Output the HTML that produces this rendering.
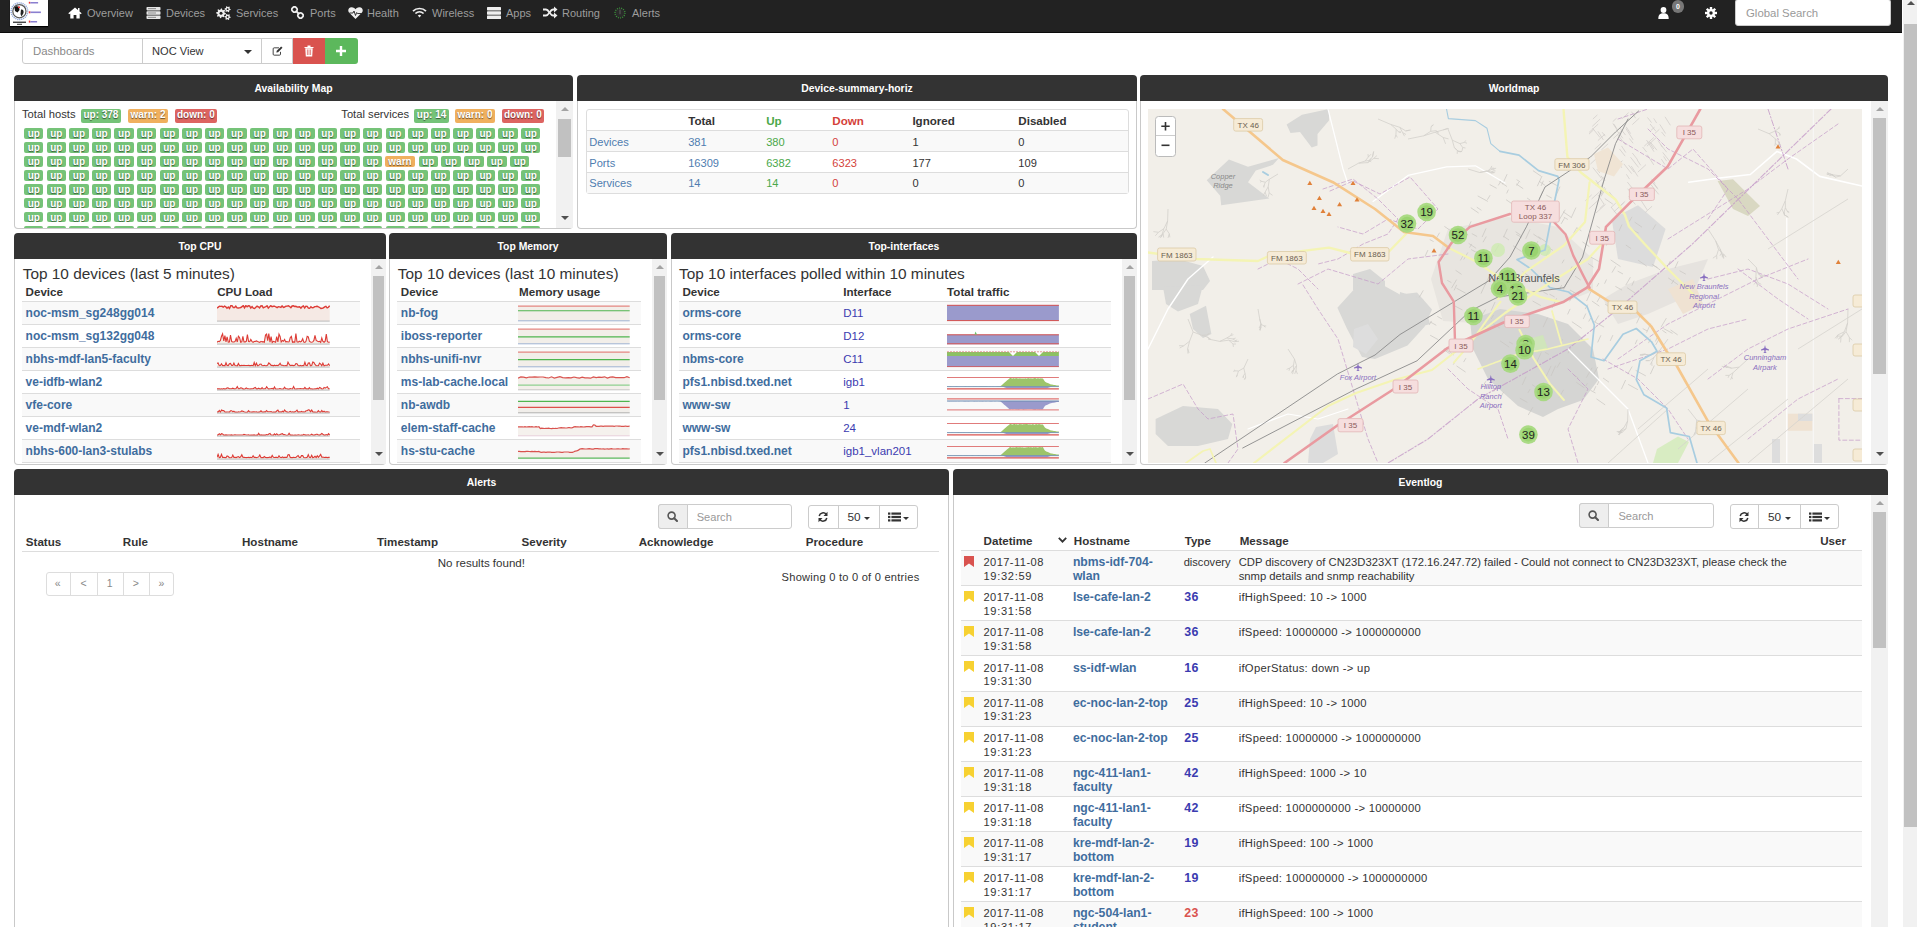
<!DOCTYPE html>
<html><head><meta charset="utf-8"><title>LibreNMS</title><style>

*{box-sizing:border-box}
html,body{margin:0;padding:0}
body{width:1928px;height:940px;overflow:hidden;background:#fff;font-family:"Liberation Sans",sans-serif;font-size:11.1px;color:#333;position:relative}
.abs,.r,.t{position:absolute}
.t{white-space:nowrap}
#nav{left:0;top:0;width:1902px;height:33px;background:#222;border-bottom:1px solid #0a0a0a}
.ni{position:absolute;top:0;height:31px;line-height:26px;color:#9d9d9d;font-size:11px;white-space:nowrap}
.wh{background:#333;color:#fff;font-weight:bold;font-size:10.4px;text-align:center;line-height:27px;border-radius:4px 4px 0 0;white-space:nowrap}
.wb{border:1px solid #c9c9c9;border-top:none;border-radius:0 0 4px 4px;background:#fff}
.lb{position:absolute;border-radius:2px;color:#fff;font-weight:bold;font-size:10px;text-align:center;line-height:12px;text-shadow:0 1px 1px rgba(0,0,0,.55);white-space:nowrap;overflow:hidden}

</style></head><body>
<div id="nav" class="abs">
 <div class="abs" style="left:10px;top:0;width:38px;height:26px;background:#fff;box-shadow:0 1px 1px #000">
  <svg width="38" height="26" viewBox="0 0 38 26"><circle cx="9.4" cy="11.2" r="8.3" fill="none" stroke="#8fa6d8" stroke-width="1.4" stroke-dasharray="1.2 0.8"/><circle cx="9.4" cy="11.2" r="6.6" fill="#fff" stroke="#555" stroke-width="1.2"/><path d="M4.5 7.5 C6 5.5 8 6 9 7 L9.5 10 L7.5 12.5 L5 11 Z" fill="#111"/><path d="M11 9.5 C13 9 14 11 13.5 13 L11.5 16.5 L10.5 14 Z" fill="#222"/><rect x="8" y="6.5" width="2" height="1.6" fill="#e33"/><rect x="3" y="21.6" width="13" height="1.3" fill="#333"/><rect x="7" y="23.8" width="5" height="1" fill="#333"/><rect x="18.8" y="1.8" width="1.5" height="1.8" fill="#e33"/><rect x="20.3" y="2" width="7.8" height="1.5" fill="#8a7fd0"/><rect x="18.8" y="11.3" width="1.6" height="2" fill="#e33"/><rect x="20.4" y="11.5" width="10.5" height="1.6" fill="#8a7fd0"/><rect x="18.8" y="20.6" width="1.5" height="2" fill="#e33"/><rect x="20.3" y="21" width="6.8" height="1.5" fill="#8a7fd0"/></svg>
 </div>
 <svg class="abs" style="left:68px;top:7px" width="14" height="12" viewBox="0 0 14 12"><path d="M7 0.5 L0.3 6.3 L1.3 7.3 L2.3 6.5 V11.5 H5.6 V8 H8.4 V11.5 H11.7 V6.5 L12.7 7.3 L13.7 6.3 L11.5 4.4 V1 H10 V3.1 Z" fill="#fff"/></svg>
 <div class="ni" style="left:87px">Overview</div>
 <svg class="abs" style="left:146px;top:7px" width="15" height="12" viewBox="0 0 15 12"><rect x="0.5" y="0" width="14" height="3.4" rx="0.8" fill="#e6e6e6"/><rect x="0.5" y="4.3" width="14" height="3.4" rx="0.8" fill="#e6e6e6"/><rect x="0.5" y="8.6" width="14" height="3.4" rx="0.8" fill="#e6e6e6"/><rect x="2" y="1.3" width="8" height="0.8" fill="#777"/><rect x="2" y="5.6" width="8" height="0.8" fill="#777"/><rect x="2" y="9.9" width="8" height="0.8" fill="#777"/></svg>
 <div class="ni" style="left:166px">Devices</div>
 <svg class="abs" style="left:216px;top:6px" width="15" height="14" viewBox="0 0 15 14"><path d="M9.90 7.30 L9.81 8.26 L8.33 8.68 L7.99 9.30 L8.46 10.76 L7.72 11.37 L6.38 10.63 L5.70 10.83 L5.00 12.20 L4.04 12.11 L3.62 10.63 L3.00 10.29 L1.54 10.76 L0.93 10.02 L1.67 8.68 L1.47 8.00 L0.10 7.30 L0.19 6.34 L1.67 5.92 L2.01 5.30 L1.54 3.84 L2.28 3.23 L3.62 3.97 L4.30 3.77 L5.00 2.40 L5.96 2.49 L6.38 3.97 L7.00 4.31 L8.46 3.84 L9.07 4.58 L8.33 5.92 L8.53 6.60 Z" fill="#eee"/><circle cx="5" cy="7.3" r="1.5" fill="#222"/><path d="M14.70 3.20 L14.59 4.00 L13.51 4.30 L13.16 4.76 L13.15 5.88 L12.40 6.19 L11.60 5.40 L11.03 5.33 L10.05 5.88 L9.41 5.39 L9.69 4.30 L9.47 3.77 L8.50 3.20 L8.61 2.40 L9.69 2.10 L10.04 1.64 L10.05 0.52 L10.80 0.21 L11.60 1.00 L12.17 1.07 L13.15 0.52 L13.79 1.01 L13.51 2.10 L13.73 2.63 Z" fill="#eee"/><circle cx="11.6" cy="3.2" r="0.9" fill="#222"/><path d="M14.70 11.00 L14.59 11.80 L13.51 12.10 L13.16 12.56 L13.15 13.68 L12.40 13.99 L11.60 13.20 L11.03 13.13 L10.05 13.68 L9.41 13.19 L9.69 12.10 L9.47 11.57 L8.50 11.00 L8.61 10.20 L9.69 9.90 L10.04 9.44 L10.05 8.32 L10.80 8.01 L11.60 8.80 L12.17 8.87 L13.15 8.32 L13.79 8.81 L13.51 9.90 L13.73 10.43 Z" fill="#eee"/><circle cx="11.6" cy="11" r="0.9" fill="#222"/></svg>
 <div class="ni" style="left:236px">Services</div>
 <svg class="abs" style="left:291px;top:6px" width="13" height="13" viewBox="0 0 13 13"><g fill="none" stroke="#eee" stroke-width="1.8"><rect x="1" y="1" width="5" height="5" rx="2" transform="rotate(45 3.5 3.5)"/><rect x="7" y="7" width="5" height="5" rx="2" transform="rotate(45 9.5 9.5)"/></g><path d="M5 5 L8 8" stroke="#eee" stroke-width="1.8"/></svg>
 <div class="ni" style="left:310px">Ports</div>
 <svg class="abs" style="left:348px;top:7px" width="15" height="12" viewBox="0 0 15 12"><path d="M7.5 12 L1 5.5 C-0.5 3.8 0.3 0.5 3.5 0.3 C5.5 0.2 6.8 1.5 7.5 2.3 C8.2 1.5 9.5 0.2 11.5 0.3 C14.7 0.5 15.5 3.8 14 5.5 Z" fill="#eee"/><path d="M1.5 6 H5 L6 4 L7.5 8.5 L8.7 5.5 L9.5 6.5 H13.5" fill="none" stroke="#222" stroke-width="0.9"/></svg>
 <div class="ni" style="left:367px">Health</div>
 <svg class="abs" style="left:412px;top:7px" width="15" height="11" viewBox="0 0 15 11"><g fill="none" stroke="#eee" stroke-width="1.7"><path d="M1 4.2 C4.5 0.6 10.5 0.6 14 4.2"/><path d="M3.4 6.5 C5.8 4.2 9.2 4.2 11.6 6.5"/></g><path d="M5.8 8.6 C6.8 7.6 8.2 7.6 9.2 8.6 L7.5 10.5 Z" fill="#eee"/></svg>
 <div class="ni" style="left:432px">Wireless</div>
 <svg class="abs" style="left:487px;top:7px" width="14" height="12" viewBox="0 0 14 12"><rect x="0" y="0" width="14" height="3.4" rx="0.6" fill="#eee"/><rect x="0" y="4.3" width="14" height="3.4" rx="0.6" fill="#eee"/><rect x="0" y="8.6" width="14" height="3.4" rx="0.6" fill="#eee"/></svg>
 <div class="ni" style="left:506px">Apps</div>
 <svg class="abs" style="left:543px;top:6px" width="15" height="13" viewBox="0 0 15 13"><g fill="none" stroke="#eee" stroke-width="1.8"><path d="M0 3.5 H3 C6 3.5 7 9.5 10 9.5 H12"/><path d="M0 9.5 H3 C6 9.5 7 3.5 10 3.5 H12"/></g><path d="M11 0.5 L14.5 3.5 L11 6.5 Z M11 6.5 L14.5 9.5 L11 12.5 Z" fill="#eee"/></svg>
 <div class="ni" style="left:562px">Routing</div>
 <svg class="abs" style="left:614px;top:7px" width="12" height="12" viewBox="0 0 12 12"><circle cx="6" cy="6" r="5" fill="#2a2a2a" stroke="#3c9a3c" stroke-width="1.2" stroke-dasharray="1 1.2"/><rect x="5.4" y="2.6" width="1.2" height="4.6" fill="#555"/></svg>
 <div class="ni" style="left:632px">Alerts</div>
 <svg class="abs" style="left:1658px;top:7px" width="12" height="12" viewBox="0 0 12 12"><circle cx="5.5" cy="3" r="2.9" fill="#fff"/><path d="M0.3 12 C0.3 7.6 2 6.2 5.5 6.2 C9 6.2 10.7 7.6 10.7 12 Z" fill="#fff"/></svg>
 <div class="abs" style="left:1672px;top:0;width:12px;height:13px;border-radius:6px;background:#777;color:#fff;font-size:7px;line-height:13px;text-align:center;font-weight:bold">0</div>
 <svg class="abs" style="left:1705px;top:7px" width="12" height="12" viewBox="0 0 12 12"><g fill="#fff"><circle cx="6" cy="6" r="4"/><g id="tt"><rect x="4.8" y="0" width="2.4" height="12"/><rect x="0" y="4.8" width="12" height="2.4"/></g><rect x="4.8" y="0" width="2.4" height="12" transform="rotate(45 6 6)"/><rect x="4.8" y="0" width="2.4" height="12" transform="rotate(-45 6 6)"/></g><circle cx="6" cy="6" r="1.7" fill="#222"/></svg>
 <div class="abs" style="left:1735px;top:-1px;width:156px;height:27px;background:#fff;border:1px solid #ccc;border-radius:3px;color:#999;font-size:11.4px;line-height:26px;padding-left:10px">Global Search</div>
</div>

<!-- toolbar -->
<div class="abs" style="left:22px;top:38px;width:121px;height:26px;border:1px solid #ccc;border-radius:3px 0 0 3px;color:#888;font-size:11.4px;line-height:24px;padding-left:10px;background:#fff">Dashboards</div>
<div class="abs" style="left:142px;top:38px;width:120px;height:26px;border:1px solid #ccc;color:#333;font-size:11.1px;line-height:24px;padding-left:9px;background:#fff">NOC View<div class="abs" style="left:101px;top:11px;width:0;height:0;border-left:4px solid transparent;border-right:4px solid transparent;border-top:4px solid #333"></div></div>
<div class="abs" style="left:262px;top:38px;width:31px;height:26px;border:1px solid #ccc;border-left:none;background:#fff">
 <svg class="abs" style="left:9.5px;top:7px" width="11.5" height="10" viewBox="0 0 13 12"><path d="M8 2.2 H2.2 Q1 2.2 1 3.4 V9.8 Q1 11 2.2 11 H8.6 Q9.8 11 9.8 9.8 V7" fill="none" stroke="#333" stroke-width="1.1"/><path d="M4.8 7.8 L5.3 5.8 L10.6 0.6 L12.2 2.2 L6.9 7.4 Z" fill="#333"/></svg>
</div>
<div class="abs" style="left:293px;top:38px;width:32px;height:26px;background:#d9534f">
 <svg class="abs" style="left:11px;top:7px" width="10" height="12" viewBox="0 0 10 12"><path d="M0.5 2 H9.5 V3 H0.5 Z M3.5 0.5 H6.5 V2 H3.5 Z M1.3 3.3 H8.7 L8.2 11.5 H1.8 Z" fill="#fff"/><path d="M3.4 4.5 V10 M5 4.5 V10 M6.6 4.5 V10" stroke="#d9534f" stroke-width="0.7"/></svg>
</div>
<div class="abs" style="left:325px;top:38px;width:33px;height:26px;background:#5cb85c;border-radius:0 3px 3px 0">
 <svg class="abs" style="left:11px;top:8px" width="10" height="10" viewBox="0 0 10 10"><path d="M3.8 0 H6.2 V3.8 H10 V6.2 H6.2 V10 H3.8 V6.2 H0 V3.8 H3.8 Z" fill="#fff"/></svg>
</div>

<div class="r wh" style="left:14px;top:75px;width:559px;height:26px">Availability Map</div><div class="r wb" style="left:14px;top:101px;width:559px;height:128px"></div>
<div class="r wh" style="left:577px;top:75px;width:560px;height:26px">Device-summary-horiz</div><div class="r wb" style="left:577px;top:101px;width:560px;height:128px"></div>
<div class="r wh" style="left:1140px;top:75px;width:748px;height:26px">Worldmap</div><div class="r wb" style="left:1140px;top:101px;width:748px;height:364px"></div>
<div class="r wh" style="left:14px;top:233px;width:372px;height:26px">Top CPU</div><div class="r wb" style="left:14px;top:259px;width:372px;height:206px"></div>
<div class="r wh" style="left:389px;top:233px;width:278px;height:26px">Top Memory</div><div class="r wb" style="left:389px;top:259px;width:278px;height:206px"></div>
<div class="r wh" style="left:671px;top:233px;width:466px;height:26px">Top-interfaces</div><div class="r wb" style="left:671px;top:259px;width:466px;height:206px"></div>
<div class="r wh" style="left:14px;top:469px;width:935px;height:26px">Alerts</div><div class="r wb" style="left:14px;top:495px;width:935px;height:465px"></div>
<div class="r wh" style="left:953px;top:469px;width:935px;height:26px">Eventlog</div><div class="r wb" style="left:953px;top:495px;width:935px;height:465px"></div>
<div class="r" style="left:15px;top:101px;width:541px;height:127px;overflow:hidden;"><div class="t" style="left:7px;top:6.3px;line-height:14px;font-size:11.2px;font-weight:normal;color:#333;">Total hosts</div><div class="lb" style="left:66.1px;top:8px;width:39.7px;height:13.8px;background:#75c378">up: 378</div><div class="lb" style="left:113.2px;top:8px;width:39.7px;height:13.8px;background:#f0b05e">warn: 2</div><div class="lb" style="left:160.1px;top:8px;width:41.5px;height:13.8px;background:#dd6461">down: 0</div><div class="t" style="left:326.3px;top:6.3px;line-height:14px;font-size:11.2px;font-weight:normal;color:#333;">Total services</div><div class="lb" style="left:399.3px;top:8px;width:34.6px;height:13.8px;background:#75c378">up: 14</div><div class="lb" style="left:440.2px;top:8px;width:39.7px;height:13.8px;background:#f0b05e">warn: 0</div><div class="lb" style="left:486.8px;top:8px;width:42.1px;height:13.8px;background:#dd6461">down: 0</div><div class="lb" style="left:9.1px;top:27.2px;width:19.4px;height:10.8px;background:#75c378">up</div><div class="lb" style="left:31.69px;top:27.2px;width:19.4px;height:10.8px;background:#75c378">up</div><div class="lb" style="left:54.28px;top:27.2px;width:19.4px;height:10.8px;background:#75c378">up</div><div class="lb" style="left:76.87px;top:27.2px;width:19.4px;height:10.8px;background:#75c378">up</div><div class="lb" style="left:99.46px;top:27.2px;width:19.4px;height:10.8px;background:#75c378">up</div><div class="lb" style="left:122.05px;top:27.2px;width:19.4px;height:10.8px;background:#75c378">up</div><div class="lb" style="left:144.64px;top:27.2px;width:19.4px;height:10.8px;background:#75c378">up</div><div class="lb" style="left:167.23px;top:27.2px;width:19.4px;height:10.8px;background:#75c378">up</div><div class="lb" style="left:189.82px;top:27.2px;width:19.4px;height:10.8px;background:#75c378">up</div><div class="lb" style="left:212.41px;top:27.2px;width:19.4px;height:10.8px;background:#75c378">up</div><div class="lb" style="left:235px;top:27.2px;width:19.4px;height:10.8px;background:#75c378">up</div><div class="lb" style="left:257.59px;top:27.2px;width:19.4px;height:10.8px;background:#75c378">up</div><div class="lb" style="left:280.18px;top:27.2px;width:19.4px;height:10.8px;background:#75c378">up</div><div class="lb" style="left:302.77px;top:27.2px;width:19.4px;height:10.8px;background:#75c378">up</div><div class="lb" style="left:325.36px;top:27.2px;width:19.4px;height:10.8px;background:#75c378">up</div><div class="lb" style="left:347.95px;top:27.2px;width:19.4px;height:10.8px;background:#75c378">up</div><div class="lb" style="left:370.54px;top:27.2px;width:19.4px;height:10.8px;background:#75c378">up</div><div class="lb" style="left:393.13px;top:27.2px;width:19.4px;height:10.8px;background:#75c378">up</div><div class="lb" style="left:415.72px;top:27.2px;width:19.4px;height:10.8px;background:#75c378">up</div><div class="lb" style="left:438.31px;top:27.2px;width:19.4px;height:10.8px;background:#75c378">up</div><div class="lb" style="left:460.9px;top:27.2px;width:19.4px;height:10.8px;background:#75c378">up</div><div class="lb" style="left:483.49px;top:27.2px;width:19.4px;height:10.8px;background:#75c378">up</div><div class="lb" style="left:506.08px;top:27.2px;width:19.4px;height:10.8px;background:#75c378">up</div><div class="lb" style="left:9.1px;top:41.1px;width:19.4px;height:10.8px;background:#75c378">up</div><div class="lb" style="left:31.69px;top:41.1px;width:19.4px;height:10.8px;background:#75c378">up</div><div class="lb" style="left:54.28px;top:41.1px;width:19.4px;height:10.8px;background:#75c378">up</div><div class="lb" style="left:76.87px;top:41.1px;width:19.4px;height:10.8px;background:#75c378">up</div><div class="lb" style="left:99.46px;top:41.1px;width:19.4px;height:10.8px;background:#75c378">up</div><div class="lb" style="left:122.05px;top:41.1px;width:19.4px;height:10.8px;background:#75c378">up</div><div class="lb" style="left:144.64px;top:41.1px;width:19.4px;height:10.8px;background:#75c378">up</div><div class="lb" style="left:167.23px;top:41.1px;width:19.4px;height:10.8px;background:#75c378">up</div><div class="lb" style="left:189.82px;top:41.1px;width:19.4px;height:10.8px;background:#75c378">up</div><div class="lb" style="left:212.41px;top:41.1px;width:19.4px;height:10.8px;background:#75c378">up</div><div class="lb" style="left:235px;top:41.1px;width:19.4px;height:10.8px;background:#75c378">up</div><div class="lb" style="left:257.59px;top:41.1px;width:19.4px;height:10.8px;background:#75c378">up</div><div class="lb" style="left:280.18px;top:41.1px;width:19.4px;height:10.8px;background:#75c378">up</div><div class="lb" style="left:302.77px;top:41.1px;width:19.4px;height:10.8px;background:#75c378">up</div><div class="lb" style="left:325.36px;top:41.1px;width:19.4px;height:10.8px;background:#75c378">up</div><div class="lb" style="left:347.95px;top:41.1px;width:19.4px;height:10.8px;background:#75c378">up</div><div class="lb" style="left:370.54px;top:41.1px;width:19.4px;height:10.8px;background:#75c378">up</div><div class="lb" style="left:393.13px;top:41.1px;width:19.4px;height:10.8px;background:#75c378">up</div><div class="lb" style="left:415.72px;top:41.1px;width:19.4px;height:10.8px;background:#75c378">up</div><div class="lb" style="left:438.31px;top:41.1px;width:19.4px;height:10.8px;background:#75c378">up</div><div class="lb" style="left:460.9px;top:41.1px;width:19.4px;height:10.8px;background:#75c378">up</div><div class="lb" style="left:483.49px;top:41.1px;width:19.4px;height:10.8px;background:#75c378">up</div><div class="lb" style="left:506.08px;top:41.1px;width:19.4px;height:10.8px;background:#75c378">up</div><div class="lb" style="left:9.1px;top:55px;width:19.4px;height:10.8px;background:#75c378">up</div><div class="lb" style="left:31.69px;top:55px;width:19.4px;height:10.8px;background:#75c378">up</div><div class="lb" style="left:54.28px;top:55px;width:19.4px;height:10.8px;background:#75c378">up</div><div class="lb" style="left:76.87px;top:55px;width:19.4px;height:10.8px;background:#75c378">up</div><div class="lb" style="left:99.46px;top:55px;width:19.4px;height:10.8px;background:#75c378">up</div><div class="lb" style="left:122.05px;top:55px;width:19.4px;height:10.8px;background:#75c378">up</div><div class="lb" style="left:144.64px;top:55px;width:19.4px;height:10.8px;background:#75c378">up</div><div class="lb" style="left:167.23px;top:55px;width:19.4px;height:10.8px;background:#75c378">up</div><div class="lb" style="left:189.82px;top:55px;width:19.4px;height:10.8px;background:#75c378">up</div><div class="lb" style="left:212.41px;top:55px;width:19.4px;height:10.8px;background:#75c378">up</div><div class="lb" style="left:235px;top:55px;width:19.4px;height:10.8px;background:#75c378">up</div><div class="lb" style="left:257.59px;top:55px;width:19.4px;height:10.8px;background:#75c378">up</div><div class="lb" style="left:280.18px;top:55px;width:19.4px;height:10.8px;background:#75c378">up</div><div class="lb" style="left:302.77px;top:55px;width:19.4px;height:10.8px;background:#75c378">up</div><div class="lb" style="left:325.36px;top:55px;width:19.4px;height:10.8px;background:#75c378">up</div><div class="lb" style="left:347.95px;top:55px;width:19.4px;height:10.8px;background:#75c378">up</div><div class="lb" style="left:370.3px;top:55px;width:29.4px;height:10.8px;background:#f0b05e">warn</div><div class="lb" style="left:403.5px;top:55px;width:19.4px;height:10.8px;background:#75c378">up</div><div class="lb" style="left:426.4px;top:55px;width:19.4px;height:10.8px;background:#75c378">up</div><div class="lb" style="left:449.3px;top:55px;width:19.4px;height:10.8px;background:#75c378">up</div><div class="lb" style="left:472.2px;top:55px;width:19.4px;height:10.8px;background:#75c378">up</div><div class="lb" style="left:495.1px;top:55px;width:19.4px;height:10.8px;background:#75c378">up</div><div class="lb" style="left:9.1px;top:68.9px;width:19.4px;height:10.8px;background:#75c378">up</div><div class="lb" style="left:31.69px;top:68.9px;width:19.4px;height:10.8px;background:#75c378">up</div><div class="lb" style="left:54.28px;top:68.9px;width:19.4px;height:10.8px;background:#75c378">up</div><div class="lb" style="left:76.87px;top:68.9px;width:19.4px;height:10.8px;background:#75c378">up</div><div class="lb" style="left:99.46px;top:68.9px;width:19.4px;height:10.8px;background:#75c378">up</div><div class="lb" style="left:122.05px;top:68.9px;width:19.4px;height:10.8px;background:#75c378">up</div><div class="lb" style="left:144.64px;top:68.9px;width:19.4px;height:10.8px;background:#75c378">up</div><div class="lb" style="left:167.23px;top:68.9px;width:19.4px;height:10.8px;background:#75c378">up</div><div class="lb" style="left:189.82px;top:68.9px;width:19.4px;height:10.8px;background:#75c378">up</div><div class="lb" style="left:212.41px;top:68.9px;width:19.4px;height:10.8px;background:#75c378">up</div><div class="lb" style="left:235px;top:68.9px;width:19.4px;height:10.8px;background:#75c378">up</div><div class="lb" style="left:257.59px;top:68.9px;width:19.4px;height:10.8px;background:#75c378">up</div><div class="lb" style="left:280.18px;top:68.9px;width:19.4px;height:10.8px;background:#75c378">up</div><div class="lb" style="left:302.77px;top:68.9px;width:19.4px;height:10.8px;background:#75c378">up</div><div class="lb" style="left:325.36px;top:68.9px;width:19.4px;height:10.8px;background:#75c378">up</div><div class="lb" style="left:347.95px;top:68.9px;width:19.4px;height:10.8px;background:#75c378">up</div><div class="lb" style="left:370.54px;top:68.9px;width:19.4px;height:10.8px;background:#75c378">up</div><div class="lb" style="left:393.13px;top:68.9px;width:19.4px;height:10.8px;background:#75c378">up</div><div class="lb" style="left:415.72px;top:68.9px;width:19.4px;height:10.8px;background:#75c378">up</div><div class="lb" style="left:438.31px;top:68.9px;width:19.4px;height:10.8px;background:#75c378">up</div><div class="lb" style="left:460.9px;top:68.9px;width:19.4px;height:10.8px;background:#75c378">up</div><div class="lb" style="left:483.49px;top:68.9px;width:19.4px;height:10.8px;background:#75c378">up</div><div class="lb" style="left:506.08px;top:68.9px;width:19.4px;height:10.8px;background:#75c378">up</div><div class="lb" style="left:9.1px;top:82.8px;width:19.4px;height:10.8px;background:#75c378">up</div><div class="lb" style="left:31.69px;top:82.8px;width:19.4px;height:10.8px;background:#75c378">up</div><div class="lb" style="left:54.28px;top:82.8px;width:19.4px;height:10.8px;background:#75c378">up</div><div class="lb" style="left:76.87px;top:82.8px;width:19.4px;height:10.8px;background:#75c378">up</div><div class="lb" style="left:99.46px;top:82.8px;width:19.4px;height:10.8px;background:#75c378">up</div><div class="lb" style="left:122.05px;top:82.8px;width:19.4px;height:10.8px;background:#75c378">up</div><div class="lb" style="left:144.64px;top:82.8px;width:19.4px;height:10.8px;background:#75c378">up</div><div class="lb" style="left:167.23px;top:82.8px;width:19.4px;height:10.8px;background:#75c378">up</div><div class="lb" style="left:189.82px;top:82.8px;width:19.4px;height:10.8px;background:#75c378">up</div><div class="lb" style="left:212.41px;top:82.8px;width:19.4px;height:10.8px;background:#75c378">up</div><div class="lb" style="left:235px;top:82.8px;width:19.4px;height:10.8px;background:#75c378">up</div><div class="lb" style="left:257.59px;top:82.8px;width:19.4px;height:10.8px;background:#75c378">up</div><div class="lb" style="left:280.18px;top:82.8px;width:19.4px;height:10.8px;background:#75c378">up</div><div class="lb" style="left:302.77px;top:82.8px;width:19.4px;height:10.8px;background:#75c378">up</div><div class="lb" style="left:325.36px;top:82.8px;width:19.4px;height:10.8px;background:#75c378">up</div><div class="lb" style="left:347.95px;top:82.8px;width:19.4px;height:10.8px;background:#75c378">up</div><div class="lb" style="left:370.54px;top:82.8px;width:19.4px;height:10.8px;background:#75c378">up</div><div class="lb" style="left:393.13px;top:82.8px;width:19.4px;height:10.8px;background:#75c378">up</div><div class="lb" style="left:415.72px;top:82.8px;width:19.4px;height:10.8px;background:#75c378">up</div><div class="lb" style="left:438.31px;top:82.8px;width:19.4px;height:10.8px;background:#75c378">up</div><div class="lb" style="left:460.9px;top:82.8px;width:19.4px;height:10.8px;background:#75c378">up</div><div class="lb" style="left:483.49px;top:82.8px;width:19.4px;height:10.8px;background:#75c378">up</div><div class="lb" style="left:506.08px;top:82.8px;width:19.4px;height:10.8px;background:#75c378">up</div><div class="lb" style="left:9.1px;top:96.7px;width:19.4px;height:10.8px;background:#75c378">up</div><div class="lb" style="left:31.69px;top:96.7px;width:19.4px;height:10.8px;background:#75c378">up</div><div class="lb" style="left:54.28px;top:96.7px;width:19.4px;height:10.8px;background:#75c378">up</div><div class="lb" style="left:76.87px;top:96.7px;width:19.4px;height:10.8px;background:#75c378">up</div><div class="lb" style="left:99.46px;top:96.7px;width:19.4px;height:10.8px;background:#75c378">up</div><div class="lb" style="left:122.05px;top:96.7px;width:19.4px;height:10.8px;background:#75c378">up</div><div class="lb" style="left:144.64px;top:96.7px;width:19.4px;height:10.8px;background:#75c378">up</div><div class="lb" style="left:167.23px;top:96.7px;width:19.4px;height:10.8px;background:#75c378">up</div><div class="lb" style="left:189.82px;top:96.7px;width:19.4px;height:10.8px;background:#75c378">up</div><div class="lb" style="left:212.41px;top:96.7px;width:19.4px;height:10.8px;background:#75c378">up</div><div class="lb" style="left:235px;top:96.7px;width:19.4px;height:10.8px;background:#75c378">up</div><div class="lb" style="left:257.59px;top:96.7px;width:19.4px;height:10.8px;background:#75c378">up</div><div class="lb" style="left:280.18px;top:96.7px;width:19.4px;height:10.8px;background:#75c378">up</div><div class="lb" style="left:302.77px;top:96.7px;width:19.4px;height:10.8px;background:#75c378">up</div><div class="lb" style="left:325.36px;top:96.7px;width:19.4px;height:10.8px;background:#75c378">up</div><div class="lb" style="left:347.95px;top:96.7px;width:19.4px;height:10.8px;background:#75c378">up</div><div class="lb" style="left:370.54px;top:96.7px;width:19.4px;height:10.8px;background:#75c378">up</div><div class="lb" style="left:393.13px;top:96.7px;width:19.4px;height:10.8px;background:#75c378">up</div><div class="lb" style="left:415.72px;top:96.7px;width:19.4px;height:10.8px;background:#75c378">up</div><div class="lb" style="left:438.31px;top:96.7px;width:19.4px;height:10.8px;background:#75c378">up</div><div class="lb" style="left:460.9px;top:96.7px;width:19.4px;height:10.8px;background:#75c378">up</div><div class="lb" style="left:483.49px;top:96.7px;width:19.4px;height:10.8px;background:#75c378">up</div><div class="lb" style="left:506.08px;top:96.7px;width:19.4px;height:10.8px;background:#75c378">up</div><div class="lb" style="left:9.1px;top:110.6px;width:19.4px;height:10.8px;background:#75c378">up</div><div class="lb" style="left:31.69px;top:110.6px;width:19.4px;height:10.8px;background:#75c378">up</div><div class="lb" style="left:54.28px;top:110.6px;width:19.4px;height:10.8px;background:#75c378">up</div><div class="lb" style="left:76.87px;top:110.6px;width:19.4px;height:10.8px;background:#75c378">up</div><div class="lb" style="left:99.46px;top:110.6px;width:19.4px;height:10.8px;background:#75c378">up</div><div class="lb" style="left:122.05px;top:110.6px;width:19.4px;height:10.8px;background:#75c378">up</div><div class="lb" style="left:144.64px;top:110.6px;width:19.4px;height:10.8px;background:#75c378">up</div><div class="lb" style="left:167.23px;top:110.6px;width:19.4px;height:10.8px;background:#75c378">up</div><div class="lb" style="left:189.82px;top:110.6px;width:19.4px;height:10.8px;background:#75c378">up</div><div class="lb" style="left:212.41px;top:110.6px;width:19.4px;height:10.8px;background:#75c378">up</div><div class="lb" style="left:235px;top:110.6px;width:19.4px;height:10.8px;background:#75c378">up</div><div class="lb" style="left:257.59px;top:110.6px;width:19.4px;height:10.8px;background:#75c378">up</div><div class="lb" style="left:280.18px;top:110.6px;width:19.4px;height:10.8px;background:#75c378">up</div><div class="lb" style="left:302.77px;top:110.6px;width:19.4px;height:10.8px;background:#75c378">up</div><div class="lb" style="left:325.36px;top:110.6px;width:19.4px;height:10.8px;background:#75c378">up</div><div class="lb" style="left:347.95px;top:110.6px;width:19.4px;height:10.8px;background:#75c378">up</div><div class="lb" style="left:370.54px;top:110.6px;width:19.4px;height:10.8px;background:#75c378">up</div><div class="lb" style="left:393.13px;top:110.6px;width:19.4px;height:10.8px;background:#75c378">up</div><div class="lb" style="left:415.72px;top:110.6px;width:19.4px;height:10.8px;background:#75c378">up</div><div class="lb" style="left:438.31px;top:110.6px;width:19.4px;height:10.8px;background:#75c378">up</div><div class="lb" style="left:460.9px;top:110.6px;width:19.4px;height:10.8px;background:#75c378">up</div><div class="lb" style="left:483.49px;top:110.6px;width:19.4px;height:10.8px;background:#75c378">up</div><div class="lb" style="left:506.08px;top:110.6px;width:19.4px;height:10.8px;background:#75c378">up</div><div class="lb" style="left:9.1px;top:124.5px;width:19.4px;height:10.8px;background:#75c378">up</div><div class="lb" style="left:31.69px;top:124.5px;width:19.4px;height:10.8px;background:#75c378">up</div><div class="lb" style="left:54.28px;top:124.5px;width:19.4px;height:10.8px;background:#75c378">up</div><div class="lb" style="left:76.87px;top:124.5px;width:19.4px;height:10.8px;background:#75c378">up</div><div class="lb" style="left:99.46px;top:124.5px;width:19.4px;height:10.8px;background:#75c378">up</div><div class="lb" style="left:122.05px;top:124.5px;width:19.4px;height:10.8px;background:#75c378">up</div><div class="lb" style="left:144.64px;top:124.5px;width:19.4px;height:10.8px;background:#75c378">up</div><div class="lb" style="left:167.23px;top:124.5px;width:19.4px;height:10.8px;background:#75c378">up</div><div class="lb" style="left:189.82px;top:124.5px;width:19.4px;height:10.8px;background:#75c378">up</div><div class="lb" style="left:212.41px;top:124.5px;width:19.4px;height:10.8px;background:#75c378">up</div><div class="lb" style="left:235px;top:124.5px;width:19.4px;height:10.8px;background:#75c378">up</div><div class="lb" style="left:257.59px;top:124.5px;width:19.4px;height:10.8px;background:#75c378">up</div><div class="lb" style="left:280.18px;top:124.5px;width:19.4px;height:10.8px;background:#75c378">up</div><div class="lb" style="left:302.77px;top:124.5px;width:19.4px;height:10.8px;background:#75c378">up</div><div class="lb" style="left:325.36px;top:124.5px;width:19.4px;height:10.8px;background:#75c378">up</div><div class="lb" style="left:347.95px;top:124.5px;width:19.4px;height:10.8px;background:#75c378">up</div><div class="lb" style="left:370.54px;top:124.5px;width:19.4px;height:10.8px;background:#75c378">up</div><div class="lb" style="left:393.13px;top:124.5px;width:19.4px;height:10.8px;background:#75c378">up</div><div class="lb" style="left:415.72px;top:124.5px;width:19.4px;height:10.8px;background:#75c378">up</div><div class="lb" style="left:438.31px;top:124.5px;width:19.4px;height:10.8px;background:#75c378">up</div><div class="lb" style="left:460.9px;top:124.5px;width:19.4px;height:10.8px;background:#75c378">up</div><div class="lb" style="left:483.49px;top:124.5px;width:19.4px;height:10.8px;background:#75c378">up</div><div class="lb" style="left:506.08px;top:124.5px;width:19.4px;height:10.8px;background:#75c378">up</div></div><div class="r" style="left:556px;top:101px;width:17px;height:127px;background:#f1f1f1;"></div><div class="r" style="left:558px;top:118.5px;width:13px;height:38.5px;background:#c1c1c1;"></div><div class="r" style="left:560.5px;top:107px;width:0;height:0;border-left:4px solid transparent;border-right:4px solid transparent;border-bottom:4px solid #a3a3a3"></div><div class="r" style="left:560.5px;top:216px;width:0;height:0;border-left:4px solid transparent;border-right:4px solid transparent;border-top:4px solid #505050"></div>
<div class="r" style="left:585.6px;top:109.1px;width:543.1px;height:85.2px;border:1px solid #ddd;border-radius:3px;overflow:hidden"></div><div class="r" style="left:586.6px;top:130.2px;width:541.1px;height:21px;background:#f9f9f9;"></div><div class="r" style="left:586.6px;top:130.2px;width:541.1px;height:1px;background:#ddd;"></div><div class="r" style="left:586.6px;top:151.2px;width:541.1px;height:21.1px;background:#fff;"></div><div class="r" style="left:586.6px;top:151.2px;width:541.1px;height:1px;background:#ddd;"></div><div class="r" style="left:586.6px;top:172.3px;width:541.1px;height:21px;background:#f9f9f9;"></div><div class="r" style="left:586.6px;top:172.3px;width:541.1px;height:1px;background:#ddd;"></div><div class="t" style="left:688.2px;top:113.5px;line-height:14px;font-size:11.6px;font-weight:bold;color:#333;">Total</div><div class="t" style="left:766.2px;top:113.5px;line-height:14px;font-size:11.6px;font-weight:bold;color:#4aa84a;">Up</div><div class="t" style="left:832.3px;top:113.5px;line-height:14px;font-size:11.6px;font-weight:bold;color:#d43f3a;">Down</div><div class="t" style="left:912.4px;top:113.5px;line-height:14px;font-size:11.6px;font-weight:bold;color:#333;">Ignored</div><div class="t" style="left:1018.3px;top:113.5px;line-height:14px;font-size:11.6px;font-weight:bold;color:#333;">Disabled</div><div class="t" style="left:589.3px;top:134.6px;line-height:14px;font-size:11.1px;font-weight:normal;color:#4f7db0;">Devices</div><div class="t" style="left:688.2px;top:134.6px;line-height:14px;font-size:11.1px;font-weight:normal;color:#4f7db0;">381</div><div class="t" style="left:766.2px;top:134.6px;line-height:14px;font-size:11.1px;font-weight:normal;color:#4aa84a;">380</div><div class="t" style="left:832.3px;top:134.6px;line-height:14px;font-size:11.1px;font-weight:normal;color:#d43f3a;">0</div><div class="t" style="left:912.4px;top:134.6px;line-height:14px;font-size:11.1px;font-weight:normal;color:#333;">1</div><div class="t" style="left:1018.3px;top:134.6px;line-height:14px;font-size:11.1px;font-weight:normal;color:#333;">0</div><div class="t" style="left:589.3px;top:155.6px;line-height:14px;font-size:11.1px;font-weight:normal;color:#4f7db0;">Ports</div><div class="t" style="left:688.2px;top:155.6px;line-height:14px;font-size:11.1px;font-weight:normal;color:#4f7db0;">16309</div><div class="t" style="left:766.2px;top:155.6px;line-height:14px;font-size:11.1px;font-weight:normal;color:#4aa84a;">6382</div><div class="t" style="left:832.3px;top:155.6px;line-height:14px;font-size:11.1px;font-weight:normal;color:#d43f3a;">6323</div><div class="t" style="left:912.4px;top:155.6px;line-height:14px;font-size:11.1px;font-weight:normal;color:#333;">177</div><div class="t" style="left:1018.3px;top:155.6px;line-height:14px;font-size:11.1px;font-weight:normal;color:#333;">109</div><div class="t" style="left:589.3px;top:176.4px;line-height:14px;font-size:11.1px;font-weight:normal;color:#4f7db0;">Services</div><div class="t" style="left:688.2px;top:176.4px;line-height:14px;font-size:11.1px;font-weight:normal;color:#4f7db0;">14</div><div class="t" style="left:766.2px;top:176.4px;line-height:14px;font-size:11.1px;font-weight:normal;color:#4aa84a;">14</div><div class="t" style="left:832.3px;top:176.4px;line-height:14px;font-size:11.1px;font-weight:normal;color:#d43f3a;">0</div><div class="t" style="left:912.4px;top:176.4px;line-height:14px;font-size:11.1px;font-weight:normal;color:#333;">0</div><div class="t" style="left:1018.3px;top:176.4px;line-height:14px;font-size:11.1px;font-weight:normal;color:#333;">0</div>
<svg class="r" style="left:1148px;top:109px" width="714" height="354" viewBox="0 0 714 354"><rect x="0" y="0" width="714" height="354" fill="#f2efe9"/><path d="M138.6 15.4 L154.0 5.8 L181.0 0.0 L181.0 11.6 L169.5 25.0 L169.5 36.6 L163.7 38.5 L152.0 23.0 L142.5 24.0 Z" fill="#d8d8d6" /><path d="M58.7 71.3 L80.9 50.5 L100.0 57.8 L131.0 49.0 L125.0 55.8 L107.8 61.6 L100.0 73.2 L121.3 89.5 L73.2 96.3 L72.2 86.7 Z" fill="#d8d8d6" /><path d="M4.0 152.0 L30.0 150.0 L55.0 157.0 L62.0 172.0 L55.0 181.0 L4.0 181.0 Z" fill="#d8d8d6" /><path d="M205.0 165.0 L222.0 160.0 L237.0 172.0 L237.0 181.0 L205.0 181.0 Z" fill="#d8d8d6" /><path d="M189.4 198.7 L210.0 176.0 L234.8 176.0 L251.9 185.5 L269.0 183.6 L284.0 200.6 L276.5 217.7 L259.5 236.6 L227.0 249.9 L214.0 248.0 L198.9 219.6 Z" fill="#d8d8d6" /><path d="M15.0 178.0 L55.0 176.0 L50.0 195.0 L30.0 202.5 L18.0 195.0 Z" fill="#d8d8d6" /><path d="M41.7 205.0 L58.0 196.8 L63.4 225.0 L55.0 229.0 L45.0 220.0 Z" fill="#d8d8d6" /><path d="M7.6 310.0 L35.0 297.0 L70.0 300.0 L84.3 315.0 L80.0 330.0 L50.0 337.0 L20.0 337.0 L7.6 325.0 Z" fill="#d8d8d6" /><path d="M168.0 318.0 L185.0 315.0 L190.0 345.0 L175.0 354.0 L160.0 354.0 L162.0 330.0 Z" fill="#dcdcdc" /><path d="M206.0 220.0 L220.0 215.0 L230.0 230.0 L218.0 245.0 L205.0 238.0 Z" fill="#dddddd" /><path d="M300.0 120.0 L360.0 108.0 L410.0 118.0 L445.0 150.0 L445.0 182.0 L400.0 200.0 L340.0 215.0 L295.0 212.0 L283.0 170.0 Z" fill="#e8e5e0" /><path d="M322.0 211.0 L352.0 200.0 L390.0 205.0 L420.0 215.0 L445.0 240.0 L451.0 270.0 L435.0 291.0 L410.0 300.0 L395.0 308.0 L370.0 297.0 L340.0 270.0 L325.0 240.0 Z" fill="#d5d5d3" /><path d="M252.0 183.0 L275.0 190.0 L282.0 215.0 L262.0 221.0 L250.0 205.0 Z" fill="#d8d8d6" /><path d="M463.7 110.0 L490.0 96.3 L517.6 120.0 L505.0 158.0 L470.0 150.0 Z" fill="#dcdcdc" /><path d="M455.0 190.0 L480.0 175.0 L520.0 160.0 L560.0 150.0 L545.0 185.0 L500.0 205.0 L470.0 215.0 Z" fill="#e6e3df" /><path d="M465.9 15.1 L468.8 19.7" stroke="#d0ccc8" stroke-width="0.7"/><path d="M505.7 9.4 L508.7 14.1" stroke="#d0ccc8" stroke-width="0.7"/><path d="M480.6 3.7 L474.1 9.7" stroke="#d0ccc8" stroke-width="0.7"/><path d="M459.3 55.1 L467.0 64.9" stroke="#d0ccc8" stroke-width="0.7"/><path d="M449.9 22.3 L455.4 30.9" stroke="#d0ccc8" stroke-width="0.7"/><path d="M444.9 58.6 L453.5 69.4" stroke="#d0ccc8" stroke-width="0.7"/><path d="M443.7 85.8 L437.3 91.8" stroke="#d0ccc8" stroke-width="0.7"/><path d="M483.3 57.1 L489.9 67.5" stroke="#d0ccc8" stroke-width="0.7"/><path d="M454.5 58.2 L458.1 63.8" stroke="#d0ccc8" stroke-width="0.7"/><path d="M447.8 71.2 L450.8 75.9" stroke="#d0ccc8" stroke-width="0.7"/><path d="M456.5 68.0 L447.6 76.1" stroke="#d0ccc8" stroke-width="0.7"/><path d="M477.2 92.3 L471.6 97.5" stroke="#d0ccc8" stroke-width="0.7"/><path d="M503.6 69.9 L507.1 74.4" stroke="#d0ccc8" stroke-width="0.7"/><path d="M464.0 49.5 L455.5 57.3" stroke="#d0ccc8" stroke-width="0.7"/><path d="M463.0 98.0 L469.0 105.5" stroke="#d0ccc8" stroke-width="0.7"/><path d="M453.2 34.2 L446.7 40.1" stroke="#d0ccc8" stroke-width="0.7"/><path d="M517.0 7.8 L522.4 16.3" stroke="#d0ccc8" stroke-width="0.7"/><path d="M510.0 31.4 L514.4 38.2" stroke="#d0ccc8" stroke-width="0.7"/><path d="M479.7 79.7 L487.5 89.5" stroke="#d0ccc8" stroke-width="0.7"/><path d="M515.6 47.4 L518.6 52.1" stroke="#d0ccc8" stroke-width="0.7"/><path d="M498.5 31.0 L506.0 42.7" stroke="#d0ccc8" stroke-width="0.7"/><path d="M505.8 28.5 L496.2 37.2" stroke="#d0ccc8" stroke-width="0.7"/><path d="M467.8 94.1 L463.0 98.5" stroke="#d0ccc8" stroke-width="0.7"/><path d="M449.4 5.9 L444.8 10.1" stroke="#d0ccc8" stroke-width="0.7"/><path d="M459.8 39.1 L455.6 43.0" stroke="#d0ccc8" stroke-width="0.7"/><path d="M475.9 54.9 L483.6 64.6" stroke="#d0ccc8" stroke-width="0.7"/><path d="M509.1 27.8 L498.9 37.2" stroke="#d0ccc8" stroke-width="0.7"/><path d="M494.6 38.0 L498.6 43.0" stroke="#d0ccc8" stroke-width="0.7"/><path d="M454.1 23.2 L457.3 27.2" stroke="#d0ccc8" stroke-width="0.7"/><path d="M506.5 18.2 L502.8 21.6" stroke="#d0ccc8" stroke-width="0.7"/><path d="M473.5 36.9 L477.8 43.5" stroke="#d0ccc8" stroke-width="0.7"/><path d="M450.0 85.9 L455.9 95.1" stroke="#d0ccc8" stroke-width="0.7"/><path d="M499.2 45.7 L505.8 55.9" stroke="#d0ccc8" stroke-width="0.7"/><path d="M471.4 39.9 L477.2 47.2" stroke="#d0ccc8" stroke-width="0.7"/><path d="M472.0 19.1 L477.6 26.1" stroke="#d0ccc8" stroke-width="0.7"/><path d="M448.8 60.1 L451.9 64.0" stroke="#d0ccc8" stroke-width="0.7"/><path d="M452.1 10.1 L444.3 17.3" stroke="#d0ccc8" stroke-width="0.7"/><path d="M445.6 20.8 L441.0 25.1" stroke="#d0ccc8" stroke-width="0.7"/><path d="M460.2 34.7 L453.3 41.0" stroke="#d0ccc8" stroke-width="0.7"/><path d="M449.2 48.8 L442.4 55.1" stroke="#d0ccc8" stroke-width="0.7"/><path d="M464.9 14.4 L469.3 21.2" stroke="#d0ccc8" stroke-width="0.7"/><path d="M461.2 82.9 L467.2 90.4" stroke="#d0ccc8" stroke-width="0.7"/><path d="M456.4 95.2 L451.8 99.5" stroke="#d0ccc8" stroke-width="0.7"/><path d="M483.5 2.7 L487.6 9.2" stroke="#d0ccc8" stroke-width="0.7"/><path d="M491.4 9.1 L484.3 15.6" stroke="#d0ccc8" stroke-width="0.7"/><path d="M512.7 35.6 L518.7 43.2" stroke="#d0ccc8" stroke-width="0.7"/><path d="M502.3 33.0 L508.9 41.2" stroke="#d0ccc8" stroke-width="0.7"/><path d="M503.1 75.8 L510.7 85.4" stroke="#d0ccc8" stroke-width="0.7"/><path d="M505.5 74.0 L509.7 79.3" stroke="#d0ccc8" stroke-width="0.7"/><path d="M479.4 73.1 L487.0 82.6" stroke="#d0ccc8" stroke-width="0.7"/><path d="M477.8 19.4 L485.1 30.8" stroke="#d0ccc8" stroke-width="0.7"/><path d="M475.8 93.7 L465.8 102.9" stroke="#d0ccc8" stroke-width="0.7"/><path d="M469.2 22.0 L474.9 29.3" stroke="#d0ccc8" stroke-width="0.7"/><path d="M467.0 48.3 L473.8 58.8" stroke="#d0ccc8" stroke-width="0.7"/><path d="M478.4 65.3 L481.5 70.1" stroke="#d0ccc8" stroke-width="0.7"/><path d="M492.8 91.0 L499.2 100.9" stroke="#d0ccc8" stroke-width="0.7"/><path d="M478.2 17.9 L482.6 24.6" stroke="#d0ccc8" stroke-width="0.7"/><path d="M504.1 97.2 L497.3 103.4" stroke="#d0ccc8" stroke-width="0.7"/><path d="M499.5 8.5 L503.5 13.6" stroke="#d0ccc8" stroke-width="0.7"/><path d="M450.2 15.1 L441.1 23.4" stroke="#d0ccc8" stroke-width="0.7"/><path d="M451.7 82.7 L443.6 90.0" stroke="#d0ccc8" stroke-width="0.7"/><path d="M468.0 54.9 L471.3 58.9" stroke="#d0ccc8" stroke-width="0.7"/><path d="M503.9 72.6 L510.0 80.3" stroke="#d0ccc8" stroke-width="0.7"/><path d="M514.7 43.4 L522.4 53.1" stroke="#d0ccc8" stroke-width="0.7"/><path d="M456.9 25.2 L449.9 31.6" stroke="#d0ccc8" stroke-width="0.7"/><path d="M501.1 32.6 L505.8 40.0" stroke="#d0ccc8" stroke-width="0.7"/><path d="M450.5 91.0 L440.8 99.8" stroke="#d0ccc8" stroke-width="0.7"/><path d="M493.0 81.5 L497.7 88.9" stroke="#d0ccc8" stroke-width="0.7"/><path d="M513.4 50.2 L516.9 55.5" stroke="#d0ccc8" stroke-width="0.7"/><path d="M480.8 87.3 L487.4 95.5" stroke="#d0ccc8" stroke-width="0.7"/><path d="M502.1 15.0 L507.8 22.2" stroke="#d0ccc8" stroke-width="0.7"/><path d="M498.0 55.6 L489.8 63.2" stroke="#d0ccc8" stroke-width="0.7"/><path d="M482.5 48.2 L490.5 58.4" stroke="#d0ccc8" stroke-width="0.7"/><path d="M444.5 19.1 L452.0 28.5" stroke="#d0ccc8" stroke-width="0.7"/><path d="M480.6 56.2 L486.2 63.2" stroke="#d0ccc8" stroke-width="0.7"/><path d="M489.0 50.6 L492.7 56.3" stroke="#d0ccc8" stroke-width="0.7"/><path d="M462.2 50.8 L455.1 57.3" stroke="#d0ccc8" stroke-width="0.7"/><path d="M459.8 52.3 L450.0 61.3" stroke="#d0ccc8" stroke-width="0.7"/><path d="M511.4 20.3 L506.8 24.5" stroke="#d0ccc8" stroke-width="0.7"/><path d="M449.7 44.2 L456.6 52.9" stroke="#d0ccc8" stroke-width="0.7"/><path d="M474.3 21.3 L465.4 29.4" stroke="#d0ccc8" stroke-width="0.7"/><path d="M511.8 15.4 L517.6 24.5" stroke="#d0ccc8" stroke-width="0.7"/><path d="M469.3 25.3 L477.8 36.0" stroke="#d0ccc8" stroke-width="0.7"/><path d="M457.6 95.3 L448.0 104.0" stroke="#d0ccc8" stroke-width="0.7"/><path d="M453.0 66.8 L457.0 71.8" stroke="#d0ccc8" stroke-width="0.7"/><path d="M474.5 51.6 L468.0 57.5" stroke="#d0ccc8" stroke-width="0.7"/><path d="M468.5 9.2 L464.7 12.7" stroke="#d0ccc8" stroke-width="0.7"/><path d="M484.3 44.0 L489.6 50.7" stroke="#d0ccc8" stroke-width="0.7"/><path d="M481.4 29.5 L485.1 34.3" stroke="#d0ccc8" stroke-width="0.7"/><path d="M513.5 22.9 L517.1 27.4" stroke="#d0ccc8" stroke-width="0.7"/><path d="M348.9 277.4 L345.7 282.7" stroke="#c9c6c2" stroke-width="0.7"/><path d="M307.6 161.3 L313.6 165.4" stroke="#c9c6c2" stroke-width="0.7"/><path d="M425.6 183.5 L421.6 192.3" stroke="#c9c6c2" stroke-width="0.7"/><path d="M469.6 162.1 L475.0 165.0" stroke="#c9c6c2" stroke-width="0.7"/><path d="M345.6 206.0 L343.3 209.9" stroke="#c9c6c2" stroke-width="0.7"/><path d="M520.2 168.9 L530.1 175.7" stroke="#c9c6c2" stroke-width="0.7"/><path d="M391.2 279.7 L389.0 283.5" stroke="#c9c6c2" stroke-width="0.7"/><path d="M452.3 187.5 L449.1 192.9" stroke="#c9c6c2" stroke-width="0.7"/><path d="M415.0 102.7 L423.6 108.6" stroke="#c9c6c2" stroke-width="0.7"/><path d="M275.3 181.4 L271.2 188.4" stroke="#c9c6c2" stroke-width="0.7"/><path d="M341.2 167.3 L337.4 175.7" stroke="#c9c6c2" stroke-width="0.7"/><path d="M428.3 273.3 L436.2 278.7" stroke="#c9c6c2" stroke-width="0.7"/><path d="M511.4 229.6 L507.7 235.9" stroke="#c9c6c2" stroke-width="0.7"/><path d="M370.8 73.1 L368.7 76.6" stroke="#c9c6c2" stroke-width="0.7"/><path d="M451.4 271.2 L449.2 276.0" stroke="#c9c6c2" stroke-width="0.7"/><path d="M522.5 220.9 L529.7 225.9" stroke="#c9c6c2" stroke-width="0.7"/><path d="M323.8 124.6 L329.1 127.5" stroke="#c9c6c2" stroke-width="0.7"/><path d="M428.7 118.7 L433.4 121.9" stroke="#c9c6c2" stroke-width="0.7"/><path d="M323.1 140.5 L329.9 144.2" stroke="#c9c6c2" stroke-width="0.7"/><path d="M415.8 108.2 L419.9 110.5" stroke="#c9c6c2" stroke-width="0.7"/><path d="M440.2 154.6 L445.5 158.2" stroke="#c9c6c2" stroke-width="0.7"/><path d="M337.5 200.5 L332.8 208.5" stroke="#c9c6c2" stroke-width="0.7"/><path d="M477.6 271.0 L473.4 280.2" stroke="#c9c6c2" stroke-width="0.7"/><path d="M479.0 178.6 L487.1 184.1" stroke="#c9c6c2" stroke-width="0.7"/><path d="M456.5 70.5 L452.4 79.5" stroke="#c9c6c2" stroke-width="0.7"/><path d="M421.9 181.0 L431.2 186.1" stroke="#c9c6c2" stroke-width="0.7"/><path d="M439.4 274.3 L437.0 278.3" stroke="#c9c6c2" stroke-width="0.7"/><path d="M282.1 212.9 L288.3 216.3" stroke="#c9c6c2" stroke-width="0.7"/><path d="M400.9 72.2 L408.8 76.5" stroke="#c9c6c2" stroke-width="0.7"/><path d="M467.4 177.4 L474.1 181.1" stroke="#c9c6c2" stroke-width="0.7"/><path d="M422.5 239.0 L420.0 244.4" stroke="#c9c6c2" stroke-width="0.7"/><path d="M291.6 123.7 L288.6 128.8" stroke="#c9c6c2" stroke-width="0.7"/><path d="M458.5 170.5 L456.6 174.7" stroke="#c9c6c2" stroke-width="0.7"/><path d="M283.6 211.9 L281.2 215.9" stroke="#c9c6c2" stroke-width="0.7"/><path d="M312.8 120.9 L320.2 126.0" stroke="#c9c6c2" stroke-width="0.7"/><path d="M308.7 175.8 L306.1 181.4" stroke="#c9c6c2" stroke-width="0.7"/><path d="M464.9 226.1 L462.2 231.9" stroke="#c9c6c2" stroke-width="0.7"/><path d="M419.8 171.5 L415.6 180.7" stroke="#c9c6c2" stroke-width="0.7"/><path d="M360.4 80.6 L358.7 84.4" stroke="#c9c6c2" stroke-width="0.7"/><path d="M403.1 256.8 L398.1 267.6" stroke="#c9c6c2" stroke-width="0.7"/><path d="M382.2 280.0 L379.9 283.9" stroke="#c9c6c2" stroke-width="0.7"/><path d="M296.2 239.4 L305.8 246.0" stroke="#c9c6c2" stroke-width="0.7"/><path d="M308.5 256.9 L317.6 263.1" stroke="#c9c6c2" stroke-width="0.7"/><path d="M474.0 115.5 L471.0 122.0" stroke="#c9c6c2" stroke-width="0.7"/><path d="M467.7 157.3 L464.0 163.6" stroke="#c9c6c2" stroke-width="0.7"/><path d="M379.1 89.0 L382.4 91.3" stroke="#c9c6c2" stroke-width="0.7"/><path d="M487.7 261.4 L497.8 266.9" stroke="#c9c6c2" stroke-width="0.7"/><path d="M484.6 120.8 L490.8 124.2" stroke="#c9c6c2" stroke-width="0.7"/><path d="M374.6 162.7 L383.5 168.9" stroke="#c9c6c2" stroke-width="0.7"/><path d="M351.4 72.4 L358.9 77.5" stroke="#c9c6c2" stroke-width="0.7"/><path d="M396.5 135.7 L405.0 141.5" stroke="#c9c6c2" stroke-width="0.7"/><path d="M394.0 67.0 L389.3 77.2" stroke="#c9c6c2" stroke-width="0.7"/><path d="M482.4 168.2 L477.8 176.1" stroke="#c9c6c2" stroke-width="0.7"/><path d="M353.0 71.8 L350.3 76.4" stroke="#c9c6c2" stroke-width="0.7"/><path d="M390.3 127.6 L398.5 133.2" stroke="#c9c6c2" stroke-width="0.7"/><path d="M460.2 132.2 L458.2 136.7" stroke="#c9c6c2" stroke-width="0.7"/><path d="M456.5 78.0 L453.0 85.7" stroke="#c9c6c2" stroke-width="0.7"/><path d="M401.4 139.9 L398.3 146.6" stroke="#c9c6c2" stroke-width="0.7"/><path d="M428.9 118.6 L425.5 124.4" stroke="#c9c6c2" stroke-width="0.7"/><path d="M296.4 117.4 L305.1 123.3" stroke="#c9c6c2" stroke-width="0.7"/><path d="M522.5 151.9 L518.9 157.9" stroke="#c9c6c2" stroke-width="0.7"/><path d="M368.1 74.9 L375.2 79.7" stroke="#c9c6c2" stroke-width="0.7"/><path d="M374.4 224.8 L372.0 228.9" stroke="#c9c6c2" stroke-width="0.7"/><path d="M530.1 152.3 L527.0 159.1" stroke="#c9c6c2" stroke-width="0.7"/><path d="M360.5 255.4 L364.9 257.8" stroke="#c9c6c2" stroke-width="0.7"/><path d="M393.3 243.3 L388.4 254.0" stroke="#c9c6c2" stroke-width="0.7"/><path d="M412.0 77.6 L407.1 88.3" stroke="#c9c6c2" stroke-width="0.7"/><path d="M342.1 86.2 L339.4 90.7" stroke="#c9c6c2" stroke-width="0.7"/><path d="M509.4 228.2 L507.4 232.5" stroke="#c9c6c2" stroke-width="0.7"/><path d="M306.4 196.7 L314.5 201.0" stroke="#c9c6c2" stroke-width="0.7"/><path d="M358.1 90.7 L364.9 95.4" stroke="#c9c6c2" stroke-width="0.7"/><path d="M396.9 243.3 L400.9 245.5" stroke="#c9c6c2" stroke-width="0.7"/><path d="M422.1 199.9 L419.6 205.4" stroke="#c9c6c2" stroke-width="0.7"/><path d="M350.8 135.9 L346.9 142.7" stroke="#c9c6c2" stroke-width="0.7"/><path d="M338.1 119.3 L334.1 128.1" stroke="#c9c6c2" stroke-width="0.7"/><path d="M359.1 65.2 L354.5 75.3" stroke="#c9c6c2" stroke-width="0.7"/><path d="M457.7 79.5 L453.0 87.5" stroke="#c9c6c2" stroke-width="0.7"/><path d="M279.9 141.1 L277.0 147.4" stroke="#c9c6c2" stroke-width="0.7"/><path d="M384.9 61.6 L393.1 67.2" stroke="#c9c6c2" stroke-width="0.7"/><path d="M416.4 109.3 L413.1 114.9" stroke="#c9c6c2" stroke-width="0.7"/><path d="M507.8 115.4 L504.7 120.7" stroke="#c9c6c2" stroke-width="0.7"/><path d="M450.8 206.4 L446.9 213.2" stroke="#c9c6c2" stroke-width="0.7"/><path d="M442.5 281.3 L447.5 284.0" stroke="#c9c6c2" stroke-width="0.7"/><path d="M384.1 275.6 L392.2 281.1" stroke="#c9c6c2" stroke-width="0.7"/><path d="M365.5 104.5 L363.7 108.4" stroke="#c9c6c2" stroke-width="0.7"/><path d="M462.7 150.9 L472.5 157.6" stroke="#c9c6c2" stroke-width="0.7"/><path d="M398.3 86.1 L403.8 89.1" stroke="#c9c6c2" stroke-width="0.7"/><path d="M371.9 289.3 L379.4 293.4" stroke="#c9c6c2" stroke-width="0.7"/><path d="M490.1 151.2 L498.8 157.2" stroke="#c9c6c2" stroke-width="0.7"/><path d="M395.4 71.8 L393.1 76.9" stroke="#c9c6c2" stroke-width="0.7"/><path d="M427.0 167.1 L432.7 171.0" stroke="#c9c6c2" stroke-width="0.7"/><path d="M389.1 254.8 L387.3 258.8" stroke="#c9c6c2" stroke-width="0.7"/><path d="M368.3 125.4 L373.7 128.3" stroke="#c9c6c2" stroke-width="0.7"/><path d="M477.8 136.0 L483.1 139.6" stroke="#c9c6c2" stroke-width="0.7"/><path d="M479.3 202.9 L482.9 204.9" stroke="#c9c6c2" stroke-width="0.7"/><path d="M337.8 174.0 L333.0 184.6" stroke="#c9c6c2" stroke-width="0.7"/><path d="M382.1 120.3 L377.7 129.8" stroke="#c9c6c2" stroke-width="0.7"/><path d="M308.5 179.2 L317.6 184.2" stroke="#c9c6c2" stroke-width="0.7"/><path d="M484.2 257.5 L479.7 265.1" stroke="#c9c6c2" stroke-width="0.7"/><path d="M365.1 136.7 L373.5 142.5" stroke="#c9c6c2" stroke-width="0.7"/><path d="M442.8 182.9 L438.6 192.0" stroke="#c9c6c2" stroke-width="0.7"/><path d="M341.7 75.5 L348.6 79.3" stroke="#c9c6c2" stroke-width="0.7"/><path d="M427.9 98.6 L423.3 108.6" stroke="#c9c6c2" stroke-width="0.7"/><path d="M414.6 230.3 L412.3 235.2" stroke="#c9c6c2" stroke-width="0.7"/><path d="M308.6 170.6 L303.5 179.2" stroke="#c9c6c2" stroke-width="0.7"/><path d="M515.6 219.5 L524.6 224.4" stroke="#c9c6c2" stroke-width="0.7"/><path d="M355.2 127.1 L361.0 131.0" stroke="#c9c6c2" stroke-width="0.7"/><path d="M484.0 107.8 L481.3 112.5" stroke="#c9c6c2" stroke-width="0.7"/><path d="M338.3 127.5 L335.0 133.2" stroke="#c9c6c2" stroke-width="0.7"/><path d="M384.9 298.2 L380.2 306.1" stroke="#c9c6c2" stroke-width="0.7"/><path d="M299.2 171.3 L303.4 173.6" stroke="#c9c6c2" stroke-width="0.7"/><path d="M407.7 256.6 L403.0 266.9" stroke="#c9c6c2" stroke-width="0.7"/><path d="M281.7 130.5 L285.6 132.6" stroke="#c9c6c2" stroke-width="0.7"/><path d="M444.1 258.7 L438.4 268.6" stroke="#c9c6c2" stroke-width="0.7"/><path d="M377.9 267.9 L374.3 275.9" stroke="#c9c6c2" stroke-width="0.7"/><path d="M494.7 219.5 L499.0 221.9" stroke="#c9c6c2" stroke-width="0.7"/><path d="M442.9 208.8 L440.7 212.5" stroke="#c9c6c2" stroke-width="0.7"/><path d="M368.6 70.6 L372.2 73.0" stroke="#c9c6c2" stroke-width="0.7"/><path d="M506.3 256.5 L502.4 265.1" stroke="#c9c6c2" stroke-width="0.7"/><path d="M323.7 134.9 L321.5 138.6" stroke="#c9c6c2" stroke-width="0.7"/><path d="M413.7 176.0 L411.7 180.4" stroke="#c9c6c2" stroke-width="0.7"/><path d="M384.6 192.0 L392.7 196.5" stroke="#c9c6c2" stroke-width="0.7"/><path d="M385.4 125.1 L393.1 130.4" stroke="#c9c6c2" stroke-width="0.7"/><path d="M391.2 72.3 L397.2 76.5" stroke="#c9c6c2" stroke-width="0.7"/><path d="M502.6 214.7 L498.6 223.6" stroke="#c9c6c2" stroke-width="0.7"/><path d="M531.5 161.7 L537.8 165.2" stroke="#c9c6c2" stroke-width="0.7"/><path d="M526.0 170.6 L523.5 175.0" stroke="#c9c6c2" stroke-width="0.7"/><path d="M503.9 155.2 L512.0 160.8" stroke="#c9c6c2" stroke-width="0.7"/><path d="M319.8 143.5 L315.7 150.6" stroke="#c9c6c2" stroke-width="0.7"/><path d="M412.2 253.2 L409.0 258.7" stroke="#c9c6c2" stroke-width="0.7"/><path d="M446.2 212.7 L456.1 218.1" stroke="#c9c6c2" stroke-width="0.7"/><path d="M449.9 257.9 L445.3 265.8" stroke="#c9c6c2" stroke-width="0.7"/><path d="M518.4 209.1 L513.0 218.2" stroke="#c9c6c2" stroke-width="0.7"/><path d="M323.1 112.4 L318.3 122.8" stroke="#c9c6c2" stroke-width="0.7"/><path d="M315.4 146.2 L312.4 151.4" stroke="#c9c6c2" stroke-width="0.7"/><path d="M480.2 275.4 L489.9 280.7" stroke="#c9c6c2" stroke-width="0.7"/><path d="M514.3 221.3 L518.4 224.1" stroke="#c9c6c2" stroke-width="0.7"/><path d="M443.9 192.0 L451.4 197.2" stroke="#c9c6c2" stroke-width="0.7"/><path d="M359.4 119.8 L355.5 128.3" stroke="#c9c6c2" stroke-width="0.7"/><path d="M399.6 165.2 L403.1 167.1" stroke="#c9c6c2" stroke-width="0.7"/><path d="M399.6 208.5 L395.1 218.2" stroke="#c9c6c2" stroke-width="0.7"/><path d="M505.1 156.1 L509.5 158.5" stroke="#c9c6c2" stroke-width="0.7"/><path d="M394.9 82.0 L391.5 89.3" stroke="#c9c6c2" stroke-width="0.7"/><path d="M361.0 232.9 L364.9 235.0" stroke="#c9c6c2" stroke-width="0.7"/><path d="M416.1 150.7 L414.0 154.3" stroke="#c9c6c2" stroke-width="0.7"/><path d="M289.3 207.4 L294.1 210.1" stroke="#c9c6c2" stroke-width="0.7"/><path d="M317.9 249.2 L315.6 253.1" stroke="#c9c6c2" stroke-width="0.7"/><path d="M371.8 241.5 L368.4 247.2" stroke="#c9c6c2" stroke-width="0.7"/><path d="M447.9 277.2 L445.8 281.9" stroke="#c9c6c2" stroke-width="0.7"/><path d="M415.6 280.8 L411.2 288.3" stroke="#c9c6c2" stroke-width="0.7"/><path d="M448.6 117.0 L452.1 119.4" stroke="#c9c6c2" stroke-width="0.7"/><path d="M322.8 98.7 L330.6 104.0" stroke="#c9c6c2" stroke-width="0.7"/><path d="M423.9 212.7 L433.6 219.3" stroke="#c9c6c2" stroke-width="0.7"/><path d="M401.4 185.1 L406.7 188.0" stroke="#c9c6c2" stroke-width="0.7"/><path d="M425.4 265.6 L430.4 269.0" stroke="#c9c6c2" stroke-width="0.7"/><path d="M374.5 243.5 L372.0 248.8" stroke="#c9c6c2" stroke-width="0.7"/><path d="M448.5 289.9 L457.2 295.9" stroke="#c9c6c2" stroke-width="0.7"/><path d="M343.6 213.4 L351.7 219.0" stroke="#c9c6c2" stroke-width="0.7"/><path d="M486.7 113.2 L494.0 118.2" stroke="#c9c6c2" stroke-width="0.7"/><path d="M395.3 183.0 L399.8 185.5" stroke="#c9c6c2" stroke-width="0.7"/><path d="M335.9 216.7 L339.8 218.9" stroke="#c9c6c2" stroke-width="0.7"/><path d="M434.5 132.9 L441.3 137.6" stroke="#c9c6c2" stroke-width="0.7"/><path d="M389.8 132.3 L387.0 137.1" stroke="#c9c6c2" stroke-width="0.7"/><path d="M450.9 174.0 L448.9 177.5" stroke="#c9c6c2" stroke-width="0.7"/><path d="M502.4 229.8 L500.5 234.1" stroke="#c9c6c2" stroke-width="0.7"/><path d="M455.1 269.1 L461.0 273.2" stroke="#c9c6c2" stroke-width="0.7"/><path d="M457.0 195.0 L464.3 199.9" stroke="#c9c6c2" stroke-width="0.7"/><path d="M437.8 204.5 L435.3 209.9" stroke="#c9c6c2" stroke-width="0.7"/><path d="M424.1 157.4 L421.5 162.0" stroke="#c9c6c2" stroke-width="0.7"/><path d="M447.7 217.6 L445.1 222.1" stroke="#c9c6c2" stroke-width="0.7"/><path d="M327.9 205.9 L323.5 215.5" stroke="#c9c6c2" stroke-width="0.7"/><path d="M320.6 134.3 L328.1 139.3" stroke="#c9c6c2" stroke-width="0.7"/><path d="M408.6 189.2 L404.1 199.0" stroke="#c9c6c2" stroke-width="0.7"/><path d="M486.1 171.7 L483.9 176.6" stroke="#c9c6c2" stroke-width="0.7"/><path d="M456.8 89.6 L464.8 95.1" stroke="#c9c6c2" stroke-width="0.7"/><path d="M347.1 192.9 L343.2 201.5" stroke="#c9c6c2" stroke-width="0.7"/><path d="M355.7 282.9 L353.4 286.9" stroke="#c9c6c2" stroke-width="0.7"/><path d="M417.2 100.7 L411.7 110.0" stroke="#c9c6c2" stroke-width="0.7"/><path d="M328.8 98.2 L333.4 101.3" stroke="#c9c6c2" stroke-width="0.7"/><path d="M382.7 204.3 L378.0 214.5" stroke="#c9c6c2" stroke-width="0.7"/><path d="M452.9 226.3 L449.7 233.4" stroke="#c9c6c2" stroke-width="0.7"/><path d="M337.8 272.3 L334.2 278.5" stroke="#c9c6c2" stroke-width="0.7"/><path d="M439.7 195.6 L437.1 200.1" stroke="#c9c6c2" stroke-width="0.7"/><path d="M282.1 226.2 L290.5 230.8" stroke="#c9c6c2" stroke-width="0.7"/><path d="M441.2 147.2 L450.9 152.5" stroke="#c9c6c2" stroke-width="0.7"/><path d="M489.2 230.7 L487.2 235.1" stroke="#c9c6c2" stroke-width="0.7"/><path d="M329.7 86.9 L339.8 92.4" stroke="#c9c6c2" stroke-width="0.7"/><path d="M295.4 240.3 L301.8 244.8" stroke="#c9c6c2" stroke-width="0.7"/><path d="M308.5 250.1 L305.3 255.6" stroke="#c9c6c2" stroke-width="0.7"/><path d="M367.6 122.7 L372.6 126.1" stroke="#c9c6c2" stroke-width="0.7"/><path d="M352.0 231.8 L361.3 238.2" stroke="#c9c6c2" stroke-width="0.7"/><path d="M493.1 204.5 L488.6 214.3" stroke="#c9c6c2" stroke-width="0.7"/><path d="M446.0 45.0 L460.0 38.5 L475.0 55.0 L466.0 67.4 L450.0 62.0 Z" fill="#f0e4d4" /><path d="M520.0 180.0 L545.0 170.0 L555.0 195.0 L535.0 205.0 Z" fill="#efe2d2" /><path d="M639.8 304.7 L664.4 304.7 L664.4 321.8 L639.8 321.8 Z" fill="#efe2d2" /><path d="M650.0 304.7 L664.4 304.7 L664.4 312.0 L650.0 312.0 Z" fill="#dddddd" /><path d="M624.0 330.0 L632.0 330.0 L632.0 354.0 L624.0 354.0 Z" fill="#dddddd" /><path d="M666.0 335.0 L674.0 335.0 L674.0 354.0 L666.0 354.0 Z" fill="#dddddd" /><path d="M569.6 72.0 L585.0 70.3 L612.0 97.0 L600.0 106.9 L585.0 100.0 Z" fill="#d9d8c2" /><circle cx="350" cy="141" r="7" fill="#cdebb0" fill-opacity="0.8"/><circle cx="397" cy="141" r="6" fill="#cdebb0" fill-opacity="0.8"/><path d="M509.0 340.0 L530.0 327.5 L541.0 333.0 L530.0 354.0 L505.0 354.0 Z" fill="#cdebb0" fill-opacity="0.7"/><path d="M380.0 230.0 L395.0 226.0 L400.0 240.0 L388.0 244.0 Z" fill="#cdebb0" fill-opacity="0.7"/><path d="M540.7 73.2 L569.6 69.3 L602.3 65.5 L629.0 42.4 L648.5 50.0 L671.7 67.4 L714.0 77.0" fill="none" stroke="#ffffff" stroke-width="1.6" stroke-linejoin="round" stroke-linecap="round" /><path d="M180.0 0.0 L195.0 60.0 L200.0 75.0" fill="none" stroke="#ffffff" stroke-width="1.2" stroke-linejoin="round" stroke-linecap="round" /><path d="M0.0 240.0 L20.0 200.0 L40.0 170.0 L65.0 148.0" fill="none" stroke="#ffffff" stroke-width="1.4" stroke-linejoin="round" stroke-linecap="round" /><path d="M225.0 92.4 L260.0 66.4 L298.5 57.8 L327.4 56.8 L357.0 74.0" fill="none" stroke="#ffffff" stroke-width="1.3" stroke-linejoin="round" stroke-linecap="round" /><path d="M638.8 109.0 L638.8 354.0" fill="none" stroke="#ffffff" stroke-width="1.2" stroke-linejoin="round" stroke-linecap="round" /><path d="M665.3 0.0 L665.3 354.0" fill="none" stroke="#f8f8f8" stroke-width="1.0" stroke-linejoin="round" stroke-linecap="round" /><path d="M420.0 240.0 L450.0 270.0 L480.0 300.0 L500.0 354.0" fill="none" stroke="#ffffff" stroke-width="1.3" stroke-linejoin="round" stroke-linecap="round" /><path d="M100.0 320.0 L140.0 305.0 L170.0 310.0 L200.0 300.0" fill="none" stroke="#ffffff" stroke-width="1.2" stroke-linejoin="round" stroke-linecap="round" /><path d="M175.0 80.0 L205.0 70.0 L230.0 90.0 L250.0 110.0 L240.0 125.0 L215.0 135.0 L190.0 150.0 L170.0 155.0" fill="none" stroke="#c49ac8" stroke-width="0.9" stroke-linejoin="round" stroke-linecap="round" stroke-dasharray="4 2.5" stroke-opacity="0.8"/><path d="M110.0 160.0 L130.0 150.0 L150.0 160.0 L170.0 180.0" fill="none" stroke="#c49ac8" stroke-width="0.9" stroke-linejoin="round" stroke-linecap="round" stroke-dasharray="4 2.5" stroke-opacity="0.8"/><path d="M155.0 176.0 L170.0 200.0 L190.0 230.0 L205.0 280.0 L220.0 330.0 L230.0 354.0" fill="none" stroke="#c49ac8" stroke-width="0.9" stroke-linejoin="round" stroke-linecap="round" stroke-dasharray="4 2.5" stroke-opacity="0.8"/><path d="M0.0 290.0 L35.0 275.0 L50.0 300.0 L60.0 310.0 L85.0 305.0 L90.0 340.0 L80.0 354.0" fill="none" stroke="#c49ac8" stroke-width="0.9" stroke-linejoin="round" stroke-linecap="round" stroke-dasharray="4 2.5" stroke-opacity="0.8"/><path d="M683.0 0.0 L544.6 134.8 L470.0 200.0 L420.0 240.0 L330.0 290.0 L280.0 330.0 L240.0 354.0" fill="none" stroke="#c49ac8" stroke-width="1.1" stroke-linejoin="round" stroke-linecap="round" stroke-dasharray="6 2 1.5 2" stroke-opacity="0.8"/><path d="M620.0 0.0 L640.0 60.0" fill="none" stroke="#c49ac8" stroke-width="1.0" stroke-linejoin="round" stroke-linecap="round" stroke-dasharray="6 2 1.5 2" stroke-opacity="0.8"/><path d="M500.0 20.0 L520.0 40.0 L560.0 60.0 L590.0 90.0 L620.0 130.0 L650.0 170.0" fill="none" stroke="#c49ac8" stroke-width="0.9" stroke-linejoin="round" stroke-linecap="round" stroke-dasharray="4 2.5" stroke-opacity="0.8"/><path d="M420.0 260.0 L440.0 280.0 L420.0 320.0 L430.0 354.0" fill="none" stroke="#c49ac8" stroke-width="0.9" stroke-linejoin="round" stroke-linecap="round" stroke-dasharray="4 2.5" stroke-opacity="0.8"/><path d="M460.0 260.0 L520.0 240.0 L560.0 220.0 L600.0 210.0" fill="none" stroke="#c49ac8" stroke-width="0.9" stroke-linejoin="round" stroke-linecap="round" stroke-dasharray="4 2.5" stroke-opacity="0.8"/><path d="M690.9 289.6 L714.0 289.6" fill="none" stroke="#c49ac8" stroke-width="0.9" stroke-linejoin="round" stroke-linecap="round" stroke-dasharray="4 2.5" stroke-opacity="0.8"/><path d="M690.9 289.6 L690.9 331.2 L714.0 331.2" fill="none" stroke="#c49ac8" stroke-width="0.9" stroke-linejoin="round" stroke-linecap="round" stroke-dasharray="4 2.5" stroke-opacity="0.8"/><path d="M560.0 170.0 L600.0 160.0 L640.0 175.0 L680.0 200.0" fill="none" stroke="#c49ac8" stroke-width="0.9" stroke-linejoin="round" stroke-linecap="round" stroke-dasharray="4 2.5" stroke-opacity="0.8"/><path d="M300.0 260.0 L320.0 280.0 L350.0 300.0 L360.0 330.0" fill="none" stroke="#c49ac8" stroke-width="0.9" stroke-linejoin="round" stroke-linecap="round" stroke-dasharray="4 2.5" stroke-opacity="0.8"/><path d="M230.0 10.0 L242.9 15.5" stroke="#d3d0cb" stroke-width="0.8"/><path d="M242.9 15.5 L251.8 18.3" stroke="#d3d0cb" stroke-width="0.8"/><path d="M251.8 18.3 L254.6 23.6" stroke="#d3d0cb" stroke-width="0.8"/><path d="M254.6 23.6 L256.5 27.2" stroke="#d3d0cb" stroke-width="0.8"/><path d="M254.6 23.6 L258.0 25.5" stroke="#d3d0cb" stroke-width="0.8"/><path d="M251.8 18.3 L257.7 21.9" stroke="#d3d0cb" stroke-width="0.8"/><path d="M257.7 21.9 L261.7 21.2" stroke="#d3d0cb" stroke-width="0.8"/><path d="M257.7 21.9 L262.7 21.0" stroke="#d3d0cb" stroke-width="0.8"/><path d="M242.9 15.5 L248.2 20.3" stroke="#d3d0cb" stroke-width="0.8"/><path d="M248.2 20.3 L247.9 26.0" stroke="#d3d0cb" stroke-width="0.8"/><path d="M247.9 26.0 L246.7 29.7" stroke="#d3d0cb" stroke-width="0.8"/><path d="M247.9 26.0 L249.4 28.4" stroke="#d3d0cb" stroke-width="0.8"/><path d="M248.2 20.3 L250.7 23.0" stroke="#d3d0cb" stroke-width="0.8"/><path d="M250.7 23.0 L252.8 23.5" stroke="#d3d0cb" stroke-width="0.8"/><path d="M250.7 23.0 L253.1 22.9" stroke="#d3d0cb" stroke-width="0.8"/><path d="M260.0 30.0 L275.7 26.8" stroke="#d3d0cb" stroke-width="0.8"/><path d="M275.7 26.8 L287.2 23.2" stroke="#d3d0cb" stroke-width="0.8"/><path d="M287.2 23.2 L295.2 20.9" stroke="#d3d0cb" stroke-width="0.8"/><path d="M295.2 20.9 L300.8 19.4" stroke="#d3d0cb" stroke-width="0.8"/><path d="M295.2 20.9 L299.8 19.3" stroke="#d3d0cb" stroke-width="0.8"/><path d="M287.2 23.2 L295.2 28.5" stroke="#d3d0cb" stroke-width="0.8"/><path d="M295.2 28.5 L297.6 34.9" stroke="#d3d0cb" stroke-width="0.8"/><path d="M295.2 28.5 L300.5 29.9" stroke="#d3d0cb" stroke-width="0.8"/><path d="M275.7 26.8 L282.7 22.3" stroke="#d3d0cb" stroke-width="0.8"/><path d="M282.7 22.3 L287.8 21.7" stroke="#d3d0cb" stroke-width="0.8"/><path d="M287.8 21.7 L290.6 23.3" stroke="#d3d0cb" stroke-width="0.8"/><path d="M287.8 21.7 L290.7 24.3" stroke="#d3d0cb" stroke-width="0.8"/><path d="M282.7 22.3 L283.1 17.6" stroke="#d3d0cb" stroke-width="0.8"/><path d="M283.1 17.6 L285.3 15.6" stroke="#d3d0cb" stroke-width="0.8"/><path d="M283.1 17.6 L285.5 15.9" stroke="#d3d0cb" stroke-width="0.8"/><path d="M300.0 20.0 L304.3 31.2" stroke="#d3d0cb" stroke-width="0.8"/><path d="M304.3 31.2 L311.9 34.6" stroke="#d3d0cb" stroke-width="0.8"/><path d="M311.9 34.6 L314.7 38.5" stroke="#d3d0cb" stroke-width="0.8"/><path d="M314.7 38.5 L317.5 39.0" stroke="#d3d0cb" stroke-width="0.8"/><path d="M314.7 38.5 L314.0 41.9" stroke="#d3d0cb" stroke-width="0.8"/><path d="M311.9 34.6 L316.4 33.4" stroke="#d3d0cb" stroke-width="0.8"/><path d="M316.4 33.4 L317.8 31.4" stroke="#d3d0cb" stroke-width="0.8"/><path d="M316.4 33.4 L319.0 34.2" stroke="#d3d0cb" stroke-width="0.8"/><path d="M304.3 31.2 L306.3 38.5" stroke="#d3d0cb" stroke-width="0.8"/><path d="M306.3 38.5 L310.3 42.3" stroke="#d3d0cb" stroke-width="0.8"/><path d="M310.3 42.3 L314.1 42.6" stroke="#d3d0cb" stroke-width="0.8"/><path d="M310.3 42.3 L313.8 42.5" stroke="#d3d0cb" stroke-width="0.8"/><path d="M306.3 38.5 L309.4 41.7" stroke="#d3d0cb" stroke-width="0.8"/><path d="M309.4 41.7 L309.2 44.9" stroke="#d3d0cb" stroke-width="0.8"/><path d="M309.4 41.7 L312.5 43.1" stroke="#d3d0cb" stroke-width="0.8"/><path d="M320.0 60.0 L331.5 63.5" stroke="#d3d0cb" stroke-width="0.8"/><path d="M331.5 63.5 L338.7 61.9" stroke="#d3d0cb" stroke-width="0.8"/><path d="M338.7 61.9 L343.4 64.0" stroke="#d3d0cb" stroke-width="0.8"/><path d="M343.4 64.0 L347.3 62.8" stroke="#d3d0cb" stroke-width="0.8"/><path d="M343.4 64.0 L346.4 63.7" stroke="#d3d0cb" stroke-width="0.8"/><path d="M338.7 61.9 L343.0 63.1" stroke="#d3d0cb" stroke-width="0.8"/><path d="M343.0 63.1 L345.3 62.9" stroke="#d3d0cb" stroke-width="0.8"/><path d="M343.0 63.1 L345.7 61.8" stroke="#d3d0cb" stroke-width="0.8"/><path d="M331.5 63.5 L339.5 62.2" stroke="#d3d0cb" stroke-width="0.8"/><path d="M339.5 62.2 L344.3 60.2" stroke="#d3d0cb" stroke-width="0.8"/><path d="M344.3 60.2 L347.4 61.6" stroke="#d3d0cb" stroke-width="0.8"/><path d="M344.3 60.2 L348.1 59.2" stroke="#d3d0cb" stroke-width="0.8"/><path d="M339.5 62.2 L342.8 59.2" stroke="#d3d0cb" stroke-width="0.8"/><path d="M342.8 59.2 L346.2 59.2" stroke="#d3d0cb" stroke-width="0.8"/><path d="M342.8 59.2 L343.8 56.9" stroke="#d3d0cb" stroke-width="0.8"/><path d="M200.0 60.0 L210.5 54.2" stroke="#d3d0cb" stroke-width="0.8"/><path d="M210.5 54.2 L219.9 53.6" stroke="#d3d0cb" stroke-width="0.8"/><path d="M219.9 53.6 L225.9 49.3" stroke="#d3d0cb" stroke-width="0.8"/><path d="M225.9 49.3 L230.9 49.7" stroke="#d3d0cb" stroke-width="0.8"/><path d="M225.9 49.3 L228.8 46.7" stroke="#d3d0cb" stroke-width="0.8"/><path d="M219.9 53.6 L224.5 47.8" stroke="#d3d0cb" stroke-width="0.8"/><path d="M224.5 47.8 L225.5 42.6" stroke="#d3d0cb" stroke-width="0.8"/><path d="M224.5 47.8 L225.8 42.4" stroke="#d3d0cb" stroke-width="0.8"/><path d="M210.5 54.2 L217.2 52.0" stroke="#d3d0cb" stroke-width="0.8"/><path d="M217.2 52.0 L220.3 48.0" stroke="#d3d0cb" stroke-width="0.8"/><path d="M220.3 48.0 L220.0 45.1" stroke="#d3d0cb" stroke-width="0.8"/><path d="M220.3 48.0 L223.0 45.2" stroke="#d3d0cb" stroke-width="0.8"/><path d="M217.2 52.0 L221.3 51.5" stroke="#d3d0cb" stroke-width="0.8"/><path d="M221.3 51.5 L223.2 52.9" stroke="#d3d0cb" stroke-width="0.8"/><path d="M221.3 51.5 L222.6 49.5" stroke="#d3d0cb" stroke-width="0.8"/><path d="M130.0 65.0 L121.4 70.2" stroke="#d3d0cb" stroke-width="0.8"/><path d="M121.4 70.2 L117.3 73.2" stroke="#d3d0cb" stroke-width="0.8"/><path d="M117.3 73.2 L116.2 76.2" stroke="#d3d0cb" stroke-width="0.8"/><path d="M116.2 76.2 L115.4 77.7" stroke="#d3d0cb" stroke-width="0.8"/><path d="M116.2 76.2 L115.9 78.6" stroke="#d3d0cb" stroke-width="0.8"/><path d="M117.3 73.2 L113.8 72.4" stroke="#d3d0cb" stroke-width="0.8"/><path d="M113.8 72.4 L111.7 71.1" stroke="#d3d0cb" stroke-width="0.8"/><path d="M113.8 72.4 L112.1 73.2" stroke="#d3d0cb" stroke-width="0.8"/><path d="M121.4 70.2 L120.2 77.8" stroke="#d3d0cb" stroke-width="0.8"/><path d="M120.2 77.8 L117.1 83.1" stroke="#d3d0cb" stroke-width="0.8"/><path d="M117.1 83.1 L118.5 87.0" stroke="#d3d0cb" stroke-width="0.8"/><path d="M117.1 83.1 L115.1 86.9" stroke="#d3d0cb" stroke-width="0.8"/><path d="M120.2 77.8 L121.2 83.9" stroke="#d3d0cb" stroke-width="0.8"/><path d="M121.2 83.9 L124.5 86.3" stroke="#d3d0cb" stroke-width="0.8"/><path d="M121.2 83.9 L120.0 88.5" stroke="#d3d0cb" stroke-width="0.8"/><path d="M20.0 100.0 L19.6 112.0" stroke="#d3d0cb" stroke-width="0.8"/><path d="M19.6 112.0 L15.9 119.7" stroke="#d3d0cb" stroke-width="0.8"/><path d="M15.9 119.7 L10.4 123.3" stroke="#d3d0cb" stroke-width="0.8"/><path d="M10.4 123.3 L7.3 126.8" stroke="#d3d0cb" stroke-width="0.8"/><path d="M10.4 123.3 L5.4 122.6" stroke="#d3d0cb" stroke-width="0.8"/><path d="M15.9 119.7 L14.0 125.7" stroke="#d3d0cb" stroke-width="0.8"/><path d="M14.0 125.7 L10.5 128.1" stroke="#d3d0cb" stroke-width="0.8"/><path d="M14.0 125.7 L12.0 129.0" stroke="#d3d0cb" stroke-width="0.8"/><path d="M19.6 112.0 L18.2 120.1" stroke="#d3d0cb" stroke-width="0.8"/><path d="M18.2 120.1 L21.3 124.8" stroke="#d3d0cb" stroke-width="0.8"/><path d="M21.3 124.8 L20.0 128.9" stroke="#d3d0cb" stroke-width="0.8"/><path d="M21.3 124.8 L21.9 128.3" stroke="#d3d0cb" stroke-width="0.8"/><path d="M18.2 120.1 L15.1 124.6" stroke="#d3d0cb" stroke-width="0.8"/><path d="M15.1 124.6 L13.1 128.3" stroke="#d3d0cb" stroke-width="0.8"/><path d="M15.1 124.6 L15.7 128.6" stroke="#d3d0cb" stroke-width="0.8"/><path d="M40.0 210.0 L45.1 223.0" stroke="#d3d0cb" stroke-width="0.8"/><path d="M45.1 223.0 L54.0 226.3" stroke="#d3d0cb" stroke-width="0.8"/><path d="M54.0 226.3 L59.2 228.0" stroke="#d3d0cb" stroke-width="0.8"/><path d="M59.2 228.0 L61.9 230.3" stroke="#d3d0cb" stroke-width="0.8"/><path d="M59.2 228.0 L62.8 230.2" stroke="#d3d0cb" stroke-width="0.8"/><path d="M54.0 226.3 L58.8 225.9" stroke="#d3d0cb" stroke-width="0.8"/><path d="M58.8 225.9 L61.8 224.5" stroke="#d3d0cb" stroke-width="0.8"/><path d="M58.8 225.9 L60.9 224.4" stroke="#d3d0cb" stroke-width="0.8"/><path d="M45.1 223.0 L41.6 232.2" stroke="#d3d0cb" stroke-width="0.8"/><path d="M41.6 232.2 L39.7 239.5" stroke="#d3d0cb" stroke-width="0.8"/><path d="M39.7 239.5 L40.0 244.7" stroke="#d3d0cb" stroke-width="0.8"/><path d="M39.7 239.5 L41.1 244.0" stroke="#d3d0cb" stroke-width="0.8"/><path d="M41.6 232.2 L35.7 236.8" stroke="#d3d0cb" stroke-width="0.8"/><path d="M35.7 236.8 L31.0 236.7" stroke="#d3d0cb" stroke-width="0.8"/><path d="M35.7 236.8 L31.7 239.0" stroke="#d3d0cb" stroke-width="0.8"/><path d="M60.0 230.0 L71.8 232.4" stroke="#d3d0cb" stroke-width="0.8"/><path d="M71.8 232.4 L78.8 229.0" stroke="#d3d0cb" stroke-width="0.8"/><path d="M78.8 229.0 L84.6 229.9" stroke="#d3d0cb" stroke-width="0.8"/><path d="M84.6 229.9 L88.5 232.2" stroke="#d3d0cb" stroke-width="0.8"/><path d="M84.6 229.9 L87.7 229.1" stroke="#d3d0cb" stroke-width="0.8"/><path d="M78.8 229.0 L82.6 226.6" stroke="#d3d0cb" stroke-width="0.8"/><path d="M82.6 226.6 L84.0 224.1" stroke="#d3d0cb" stroke-width="0.8"/><path d="M82.6 226.6 L85.4 225.7" stroke="#d3d0cb" stroke-width="0.8"/><path d="M71.8 232.4 L80.7 231.2" stroke="#d3d0cb" stroke-width="0.8"/><path d="M80.7 231.2 L85.0 235.0" stroke="#d3d0cb" stroke-width="0.8"/><path d="M85.0 235.0 L87.9 235.0" stroke="#d3d0cb" stroke-width="0.8"/><path d="M85.0 235.0 L85.4 237.9" stroke="#d3d0cb" stroke-width="0.8"/><path d="M80.7 231.2 L86.6 232.7" stroke="#d3d0cb" stroke-width="0.8"/><path d="M86.6 232.7 L91.0 232.2" stroke="#d3d0cb" stroke-width="0.8"/><path d="M86.6 232.7 L89.2 230.7" stroke="#d3d0cb" stroke-width="0.8"/><path d="M110.0 200.0 L111.7 209.9" stroke="#d3d0cb" stroke-width="0.8"/><path d="M111.7 209.9 L113.0 214.8" stroke="#d3d0cb" stroke-width="0.8"/><path d="M113.0 214.8 L112.0 217.5" stroke="#d3d0cb" stroke-width="0.8"/><path d="M112.0 217.5 L112.4 218.9" stroke="#d3d0cb" stroke-width="0.8"/><path d="M112.0 217.5 L111.0 219.0" stroke="#d3d0cb" stroke-width="0.8"/><path d="M113.0 214.8 L113.0 218.3" stroke="#d3d0cb" stroke-width="0.8"/><path d="M113.0 218.3 L111.6 220.7" stroke="#d3d0cb" stroke-width="0.8"/><path d="M113.0 218.3 L112.4 220.2" stroke="#d3d0cb" stroke-width="0.8"/><path d="M111.7 209.9 L112.9 215.3" stroke="#d3d0cb" stroke-width="0.8"/><path d="M112.9 215.3 L116.0 216.9" stroke="#d3d0cb" stroke-width="0.8"/><path d="M116.0 216.9 L117.3 218.4" stroke="#d3d0cb" stroke-width="0.8"/><path d="M116.0 216.9 L118.2 217.0" stroke="#d3d0cb" stroke-width="0.8"/><path d="M112.9 215.3 L112.4 218.9" stroke="#d3d0cb" stroke-width="0.8"/><path d="M112.4 218.9 L111.5 221.3" stroke="#d3d0cb" stroke-width="0.8"/><path d="M112.4 218.9 L112.5 221.5" stroke="#d3d0cb" stroke-width="0.8"/><path d="M140.0 240.0 L146.5 250.1" stroke="#d3d0cb" stroke-width="0.8"/><path d="M146.5 250.1 L145.5 256.3" stroke="#d3d0cb" stroke-width="0.8"/><path d="M145.5 256.3 L141.8 259.0" stroke="#d3d0cb" stroke-width="0.8"/><path d="M141.8 259.0 L141.0 261.8" stroke="#d3d0cb" stroke-width="0.8"/><path d="M141.8 259.0 L138.6 260.4" stroke="#d3d0cb" stroke-width="0.8"/><path d="M145.5 256.3 L145.7 260.6" stroke="#d3d0cb" stroke-width="0.8"/><path d="M145.7 260.6 L143.9 263.1" stroke="#d3d0cb" stroke-width="0.8"/><path d="M145.7 260.6 L143.9 262.6" stroke="#d3d0cb" stroke-width="0.8"/><path d="M146.5 250.1 L148.5 256.5" stroke="#d3d0cb" stroke-width="0.8"/><path d="M148.5 256.5 L148.0 261.5" stroke="#d3d0cb" stroke-width="0.8"/><path d="M148.0 261.5 L146.7 264.9" stroke="#d3d0cb" stroke-width="0.8"/><path d="M148.0 261.5 L149.5 265.1" stroke="#d3d0cb" stroke-width="0.8"/><path d="M148.5 256.5 L145.6 261.0" stroke="#d3d0cb" stroke-width="0.8"/><path d="M145.6 261.0 L143.3 264.2" stroke="#d3d0cb" stroke-width="0.8"/><path d="M145.6 261.0 L144.6 265.1" stroke="#d3d0cb" stroke-width="0.8"/><path d="M100.0 250.0 L95.8 259.1" stroke="#d3d0cb" stroke-width="0.8"/><path d="M95.8 259.1 L90.5 262.0" stroke="#d3d0cb" stroke-width="0.8"/><path d="M90.5 262.0 L89.3 265.6" stroke="#d3d0cb" stroke-width="0.8"/><path d="M89.3 265.6 L88.2 268.2" stroke="#d3d0cb" stroke-width="0.8"/><path d="M89.3 265.6 L88.8 267.5" stroke="#d3d0cb" stroke-width="0.8"/><path d="M90.5 262.0 L87.4 261.8" stroke="#d3d0cb" stroke-width="0.8"/><path d="M87.4 261.8 L86.0 260.9" stroke="#d3d0cb" stroke-width="0.8"/><path d="M87.4 261.8 L85.2 262.4" stroke="#d3d0cb" stroke-width="0.8"/><path d="M95.8 259.1 L97.0 264.4" stroke="#d3d0cb" stroke-width="0.8"/><path d="M97.0 264.4 L97.7 268.2" stroke="#d3d0cb" stroke-width="0.8"/><path d="M97.7 268.2 L96.6 270.8" stroke="#d3d0cb" stroke-width="0.8"/><path d="M97.7 268.2 L96.3 270.3" stroke="#d3d0cb" stroke-width="0.8"/><path d="M97.0 264.4 L95.4 266.8" stroke="#d3d0cb" stroke-width="0.8"/><path d="M95.4 266.8 L95.3 268.7" stroke="#d3d0cb" stroke-width="0.8"/><path d="M95.4 266.8 L95.0 268.8" stroke="#d3d0cb" stroke-width="0.8"/><path d="M560.0 120.0 L567.6 131.8" stroke="#d3d0cb" stroke-width="0.8"/><path d="M567.6 131.8 L570.5 140.5" stroke="#d3d0cb" stroke-width="0.8"/><path d="M570.5 140.5 L568.7 146.4" stroke="#d3d0cb" stroke-width="0.8"/><path d="M568.7 146.4 L568.8 150.2" stroke="#d3d0cb" stroke-width="0.8"/><path d="M568.7 146.4 L564.9 149.2" stroke="#d3d0cb" stroke-width="0.8"/><path d="M570.5 140.5 L575.7 145.1" stroke="#d3d0cb" stroke-width="0.8"/><path d="M575.7 145.1 L575.7 149.7" stroke="#d3d0cb" stroke-width="0.8"/><path d="M575.7 145.1 L578.2 148.1" stroke="#d3d0cb" stroke-width="0.8"/><path d="M567.6 131.8 L572.0 139.8" stroke="#d3d0cb" stroke-width="0.8"/><path d="M572.0 139.8 L573.4 144.2" stroke="#d3d0cb" stroke-width="0.8"/><path d="M573.4 144.2 L571.9 146.8" stroke="#d3d0cb" stroke-width="0.8"/><path d="M573.4 144.2 L575.1 147.2" stroke="#d3d0cb" stroke-width="0.8"/><path d="M572.0 139.8 L574.2 145.2" stroke="#d3d0cb" stroke-width="0.8"/><path d="M574.2 145.2 L574.4 148.3" stroke="#d3d0cb" stroke-width="0.8"/><path d="M574.2 145.2 L575.4 148.7" stroke="#d3d0cb" stroke-width="0.8"/><path d="M600.0 150.0 L608.4 158.6" stroke="#d3d0cb" stroke-width="0.8"/><path d="M608.4 158.6 L607.9 167.9" stroke="#d3d0cb" stroke-width="0.8"/><path d="M607.9 167.9 L610.0 173.5" stroke="#d3d0cb" stroke-width="0.8"/><path d="M610.0 173.5 L613.3 175.4" stroke="#d3d0cb" stroke-width="0.8"/><path d="M610.0 173.5 L609.1 178.0" stroke="#d3d0cb" stroke-width="0.8"/><path d="M607.9 167.9 L607.8 173.5" stroke="#d3d0cb" stroke-width="0.8"/><path d="M607.8 173.5 L609.8 176.7" stroke="#d3d0cb" stroke-width="0.8"/><path d="M607.8 173.5 L605.7 175.6" stroke="#d3d0cb" stroke-width="0.8"/><path d="M608.4 158.6 L610.0 164.5" stroke="#d3d0cb" stroke-width="0.8"/><path d="M610.0 164.5 L612.5 166.8" stroke="#d3d0cb" stroke-width="0.8"/><path d="M612.5 166.8 L613.5 168.7" stroke="#d3d0cb" stroke-width="0.8"/><path d="M612.5 166.8 L614.6 168.0" stroke="#d3d0cb" stroke-width="0.8"/><path d="M610.0 164.5 L613.6 166.9" stroke="#d3d0cb" stroke-width="0.8"/><path d="M613.6 166.9 L616.4 166.7" stroke="#d3d0cb" stroke-width="0.8"/><path d="M613.6 166.9 L616.0 167.3" stroke="#d3d0cb" stroke-width="0.8"/><path d="M520.0 230.0 L511.8 241.3" stroke="#d3d0cb" stroke-width="0.8"/><path d="M511.8 241.3 L506.2 248.2" stroke="#d3d0cb" stroke-width="0.8"/><path d="M506.2 248.2 L503.7 253.1" stroke="#d3d0cb" stroke-width="0.8"/><path d="M503.7 253.1 L502.2 255.7" stroke="#d3d0cb" stroke-width="0.8"/><path d="M503.7 253.1 L504.0 256.9" stroke="#d3d0cb" stroke-width="0.8"/><path d="M506.2 248.2 L501.5 251.6" stroke="#d3d0cb" stroke-width="0.8"/><path d="M501.5 251.6 L497.5 251.7" stroke="#d3d0cb" stroke-width="0.8"/><path d="M501.5 251.6 L498.2 251.6" stroke="#d3d0cb" stroke-width="0.8"/><path d="M511.8 241.3 L502.7 246.4" stroke="#d3d0cb" stroke-width="0.8"/><path d="M502.7 246.4 L496.6 245.1" stroke="#d3d0cb" stroke-width="0.8"/><path d="M496.6 245.1 L491.9 245.6" stroke="#d3d0cb" stroke-width="0.8"/><path d="M496.6 245.1 L491.9 246.5" stroke="#d3d0cb" stroke-width="0.8"/><path d="M502.7 246.4 L497.2 245.3" stroke="#d3d0cb" stroke-width="0.8"/><path d="M497.2 245.3 L493.3 246.4" stroke="#d3d0cb" stroke-width="0.8"/><path d="M497.2 245.3 L494.3 246.0" stroke="#d3d0cb" stroke-width="0.8"/><path d="M600.0 250.0 L591.2 258.1" stroke="#d3d0cb" stroke-width="0.8"/><path d="M591.2 258.1 L583.7 259.2" stroke="#d3d0cb" stroke-width="0.8"/><path d="M583.7 259.2 L580.0 257.7" stroke="#d3d0cb" stroke-width="0.8"/><path d="M580.0 257.7 L577.2 257.1" stroke="#d3d0cb" stroke-width="0.8"/><path d="M580.0 257.7 L578.0 258.8" stroke="#d3d0cb" stroke-width="0.8"/><path d="M583.7 259.2 L578.0 258.1" stroke="#d3d0cb" stroke-width="0.8"/><path d="M578.0 258.1 L576.4 255.5" stroke="#d3d0cb" stroke-width="0.8"/><path d="M578.0 258.1 L573.8 257.3" stroke="#d3d0cb" stroke-width="0.8"/><path d="M591.2 258.1 L584.9 263.8" stroke="#d3d0cb" stroke-width="0.8"/><path d="M584.9 263.8 L583.7 268.0" stroke="#d3d0cb" stroke-width="0.8"/><path d="M583.7 268.0 L584.6 270.1" stroke="#d3d0cb" stroke-width="0.8"/><path d="M583.7 268.0 L582.6 270.7" stroke="#d3d0cb" stroke-width="0.8"/><path d="M584.9 263.8 L581.1 266.4" stroke="#d3d0cb" stroke-width="0.8"/><path d="M581.1 266.4 L580.1 268.8" stroke="#d3d0cb" stroke-width="0.8"/><path d="M581.1 266.4 L577.4 266.4" stroke="#d3d0cb" stroke-width="0.8"/><path d="M540.0 300.0 L548.7 311.0" stroke="#d3d0cb" stroke-width="0.8"/><path d="M548.7 311.0 L548.0 318.3" stroke="#d3d0cb" stroke-width="0.8"/><path d="M548.0 318.3 L551.7 322.8" stroke="#d3d0cb" stroke-width="0.8"/><path d="M551.7 322.8 L554.6 325.9" stroke="#d3d0cb" stroke-width="0.8"/><path d="M551.7 322.8 L554.8 324.8" stroke="#d3d0cb" stroke-width="0.8"/><path d="M548.0 318.3 L547.4 322.9" stroke="#d3d0cb" stroke-width="0.8"/><path d="M547.4 322.9 L546.7 325.2" stroke="#d3d0cb" stroke-width="0.8"/><path d="M547.4 322.9 L545.8 326.0" stroke="#d3d0cb" stroke-width="0.8"/><path d="M548.7 311.0 L557.1 313.8" stroke="#d3d0cb" stroke-width="0.8"/><path d="M557.1 313.8 L561.2 317.6" stroke="#d3d0cb" stroke-width="0.8"/><path d="M561.2 317.6 L564.1 318.3" stroke="#d3d0cb" stroke-width="0.8"/><path d="M561.2 317.6 L563.1 319.6" stroke="#d3d0cb" stroke-width="0.8"/><path d="M557.1 313.8 L560.5 319.5" stroke="#d3d0cb" stroke-width="0.8"/><path d="M560.5 319.5 L561.3 324.4" stroke="#d3d0cb" stroke-width="0.8"/><path d="M560.5 319.5 L561.7 323.4" stroke="#d3d0cb" stroke-width="0.8"/><path d="M480.0 300.0 L479.6 312.0" stroke="#d3d0cb" stroke-width="0.8"/><path d="M479.6 312.0 L478.0 319.6" stroke="#d3d0cb" stroke-width="0.8"/><path d="M478.0 319.6 L472.9 322.4" stroke="#d3d0cb" stroke-width="0.8"/><path d="M472.9 322.4 L470.2 326.0" stroke="#d3d0cb" stroke-width="0.8"/><path d="M472.9 322.4 L468.7 322.6" stroke="#d3d0cb" stroke-width="0.8"/><path d="M478.0 319.6 L474.6 323.1" stroke="#d3d0cb" stroke-width="0.8"/><path d="M474.6 323.1 L470.9 323.4" stroke="#d3d0cb" stroke-width="0.8"/><path d="M474.6 323.1 L471.4 324.6" stroke="#d3d0cb" stroke-width="0.8"/><path d="M479.6 312.0 L476.0 318.5" stroke="#d3d0cb" stroke-width="0.8"/><path d="M476.0 318.5 L473.0 320.9" stroke="#d3d0cb" stroke-width="0.8"/><path d="M473.0 320.9 L471.5 322.9" stroke="#d3d0cb" stroke-width="0.8"/><path d="M473.0 320.9 L472.9 323.3" stroke="#d3d0cb" stroke-width="0.8"/><path d="M476.0 318.5 L472.5 322.2" stroke="#d3d0cb" stroke-width="0.8"/><path d="M472.5 322.2 L471.4 326.1" stroke="#d3d0cb" stroke-width="0.8"/><path d="M472.5 322.2 L469.8 323.8" stroke="#d3d0cb" stroke-width="0.8"/><path d="M610.0 20.0 L621.1 24.7" stroke="#d3d0cb" stroke-width="0.8"/><path d="M621.1 24.7 L627.3 29.8" stroke="#d3d0cb" stroke-width="0.8"/><path d="M627.3 29.8 L630.9 33.2" stroke="#d3d0cb" stroke-width="0.8"/><path d="M630.9 33.2 L630.7 36.6" stroke="#d3d0cb" stroke-width="0.8"/><path d="M630.9 33.2 L632.5 36.4" stroke="#d3d0cb" stroke-width="0.8"/><path d="M627.3 29.8 L627.4 33.9" stroke="#d3d0cb" stroke-width="0.8"/><path d="M627.4 33.9 L626.8 36.8" stroke="#d3d0cb" stroke-width="0.8"/><path d="M627.4 33.9 L628.5 36.1" stroke="#d3d0cb" stroke-width="0.8"/><path d="M621.1 24.7 L627.2 22.0" stroke="#d3d0cb" stroke-width="0.8"/><path d="M627.2 22.0 L630.1 19.9" stroke="#d3d0cb" stroke-width="0.8"/><path d="M630.1 19.9 L631.4 17.5" stroke="#d3d0cb" stroke-width="0.8"/><path d="M630.1 19.9 L632.0 18.7" stroke="#d3d0cb" stroke-width="0.8"/><path d="M627.2 22.0 L631.3 23.9" stroke="#d3d0cb" stroke-width="0.8"/><path d="M631.3 23.9 L632.0 26.9" stroke="#d3d0cb" stroke-width="0.8"/><path d="M631.3 23.9 L632.6 25.8" stroke="#d3d0cb" stroke-width="0.8"/><path d="M640.0 80.0 L637.3 91.7" stroke="#d3d0cb" stroke-width="0.8"/><path d="M637.3 91.7 L633.8 99.7" stroke="#d3d0cb" stroke-width="0.8"/><path d="M633.8 99.7 L636.6 105.9" stroke="#d3d0cb" stroke-width="0.8"/><path d="M636.6 105.9 L640.3 108.2" stroke="#d3d0cb" stroke-width="0.8"/><path d="M636.6 105.9 L640.3 108.3" stroke="#d3d0cb" stroke-width="0.8"/><path d="M633.8 99.7 L631.3 103.4" stroke="#d3d0cb" stroke-width="0.8"/><path d="M631.3 103.4 L628.5 103.9" stroke="#d3d0cb" stroke-width="0.8"/><path d="M631.3 103.4 L629.4 105.9" stroke="#d3d0cb" stroke-width="0.8"/><path d="M637.3 91.7 L637.4 98.7" stroke="#d3d0cb" stroke-width="0.8"/><path d="M637.4 98.7 L636.1 103.2" stroke="#d3d0cb" stroke-width="0.8"/><path d="M636.1 103.2 L636.5 106.6" stroke="#d3d0cb" stroke-width="0.8"/><path d="M636.1 103.2 L636.4 105.6" stroke="#d3d0cb" stroke-width="0.8"/><path d="M637.4 98.7 L639.0 101.9" stroke="#d3d0cb" stroke-width="0.8"/><path d="M639.0 101.9 L641.3 103.1" stroke="#d3d0cb" stroke-width="0.8"/><path d="M639.0 101.9 L640.7 104.1" stroke="#d3d0cb" stroke-width="0.8"/><path d="M700.0 60.0 L692.6 66.8" stroke="#d3d0cb" stroke-width="0.8"/><path d="M692.6 66.8 L687.7 68.2" stroke="#d3d0cb" stroke-width="0.8"/><path d="M687.7 68.2 L684.3 66.0" stroke="#d3d0cb" stroke-width="0.8"/><path d="M684.3 66.0 L681.3 66.6" stroke="#d3d0cb" stroke-width="0.8"/><path d="M684.3 66.0 L682.0 64.9" stroke="#d3d0cb" stroke-width="0.8"/><path d="M687.7 68.2 L685.2 66.7" stroke="#d3d0cb" stroke-width="0.8"/><path d="M685.2 66.7 L683.3 65.4" stroke="#d3d0cb" stroke-width="0.8"/><path d="M685.2 66.7 L684.1 65.1" stroke="#d3d0cb" stroke-width="0.8"/><path d="M692.6 66.8 L685.2 65.9" stroke="#d3d0cb" stroke-width="0.8"/><path d="M685.2 65.9 L681.4 64.7" stroke="#d3d0cb" stroke-width="0.8"/><path d="M681.4 64.7 L679.2 63.4" stroke="#d3d0cb" stroke-width="0.8"/><path d="M681.4 64.7 L679.4 65.1" stroke="#d3d0cb" stroke-width="0.8"/><path d="M685.2 65.9 L681.3 65.2" stroke="#d3d0cb" stroke-width="0.8"/><path d="M681.3 65.2 L678.5 65.0" stroke="#d3d0cb" stroke-width="0.8"/><path d="M681.3 65.2 L679.0 65.0" stroke="#d3d0cb" stroke-width="0.8"/><path d="M700.0 200.0 L699.6 214.0" stroke="#d3d0cb" stroke-width="0.8"/><path d="M699.6 214.0 L698.0 222.6" stroke="#d3d0cb" stroke-width="0.8"/><path d="M698.0 222.6 L694.4 227.1" stroke="#d3d0cb" stroke-width="0.8"/><path d="M694.4 227.1 L689.9 227.1" stroke="#d3d0cb" stroke-width="0.8"/><path d="M694.4 227.1 L691.5 228.6" stroke="#d3d0cb" stroke-width="0.8"/><path d="M698.0 222.6 L701.4 228.5" stroke="#d3d0cb" stroke-width="0.8"/><path d="M701.4 228.5 L701.4 233.1" stroke="#d3d0cb" stroke-width="0.8"/><path d="M701.4 228.5 L704.1 231.3" stroke="#d3d0cb" stroke-width="0.8"/><path d="M699.6 214.0 L696.3 222.8" stroke="#d3d0cb" stroke-width="0.8"/><path d="M696.3 222.8 L693.0 228.3" stroke="#d3d0cb" stroke-width="0.8"/><path d="M693.0 228.3 L690.0 230.3" stroke="#d3d0cb" stroke-width="0.8"/><path d="M693.0 228.3 L692.6 233.5" stroke="#d3d0cb" stroke-width="0.8"/><path d="M696.3 222.8 L689.9 225.9" stroke="#d3d0cb" stroke-width="0.8"/><path d="M689.9 225.9 L688.8 229.5" stroke="#d3d0cb" stroke-width="0.8"/><path d="M689.9 225.9 L687.0 229.4" stroke="#d3d0cb" stroke-width="0.8"/><path d="M182.0 82.0 L205.0 72.0 L232.0 85.0 L262.0 68.0 L290.0 100.0 L270.0 120.0 L240.0 110.0 L215.0 125.0 L190.0 118.0" fill="none" stroke="#c49ac8" stroke-width="0.9" stroke-linejoin="round" stroke-linecap="round" stroke-dasharray="4 2.5" stroke-opacity="0.8"/><path d="M150.0 175.0 L180.0 160.0 L230.0 175.0 L260.0 150.0 L300.0 145.0" fill="none" stroke="#c49ac8" stroke-width="0.9" stroke-linejoin="round" stroke-linecap="round" stroke-dasharray="4 2.5" stroke-opacity="0.8"/><path d="M470.0 10.0 L500.0 0.0" fill="none" stroke="#c49ac8" stroke-width="0.9" stroke-linejoin="round" stroke-linecap="round" stroke-dasharray="4 2.5" stroke-opacity="0.8"/><path d="M470.0 30.0 L520.0 60.0 L545.0 40.0 L580.0 80.0 L560.0 110.0" fill="none" stroke="#c49ac8" stroke-width="0.9" stroke-linejoin="round" stroke-linecap="round" stroke-dasharray="4 2.5" stroke-opacity="0.8"/><path d="M455.0 250.0 L490.0 270.0 L520.0 300.0 L540.0 330.0" fill="none" stroke="#c49ac8" stroke-width="0.9" stroke-linejoin="round" stroke-linecap="round" stroke-dasharray="4 2.5" stroke-opacity="0.8"/><path d="M520.0 130.0 L560.0 105.0 L600.0 80.0 L640.0 50.0 L690.0 15.0" fill="none" stroke="#c49ac8" stroke-width="0.9" stroke-linejoin="round" stroke-linecap="round" stroke-dasharray="4 2.5" stroke-opacity="0.8"/><path d="M470.0 250.0 L520.0 215.0 L570.0 190.0 L610.0 170.0 L660.0 150.0" fill="none" stroke="#c49ac8" stroke-width="0.9" stroke-linejoin="round" stroke-linecap="round" stroke-dasharray="4 2.5" stroke-opacity="0.8"/><path d="M560.0 270.0 L600.0 240.0 L640.0 220.0 L700.0 200.0" fill="none" stroke="#c49ac8" stroke-width="0.9" stroke-linejoin="round" stroke-linecap="round" stroke-dasharray="4 2.5" stroke-opacity="0.8"/><path d="M590.0 160.0 L630.0 190.0 L660.0 210.0" fill="none" stroke="#c49ac8" stroke-width="0.9" stroke-linejoin="round" stroke-linecap="round" stroke-dasharray="4 2.5" stroke-opacity="0.8"/><path d="M600.0 330.0 L650.0 290.0 L690.0 270.0" fill="none" stroke="#c49ac8" stroke-width="0.9" stroke-linejoin="round" stroke-linecap="round" stroke-dasharray="4 2.5" stroke-opacity="0.8"/><path d="M530 340 L600 280" stroke="#d6d3ce" stroke-width="0.8"/><path d="M560 354 L640 290" stroke="#d6d3ce" stroke-width="0.8"/><path d="M600 354 L700 270" stroke="#d6d3ce" stroke-width="0.8"/><path d="M490 320 L560 260" stroke="#d6d3ce" stroke-width="0.8"/><path d="M620 140 L700 90" stroke="#d6d3ce" stroke-width="0.8"/><path d="M650 240 L714 200" stroke="#d6d3ce" stroke-width="0.8"/><path d="M460 354 L520 300" stroke="#d6d3ce" stroke-width="0.8"/><path d="M352.0 42.4 L371.0 46.2 L390.5 61.6 L409.8 67.4 L411.0 71.0 L405.0 100.0 L397.0 141.0 L369.0 150.6 L383.0 160.0 L402.0 178.7 L420.5 183.0 L439.0 197.4 L446.3 216.0 L443.0 248.0 L456.0 251.7 L475.0 225.2 L488.3 219.5 L503.5 232.8 L509.0 242.3 L492.0 251.7 L488.3 270.7 L496.0 285.8 L518.6 299.0 L522.4 323.7 L541.3 327.5 L549.0 354.0" fill="none" stroke="#a8cde0" stroke-width="1.7" stroke-linejoin="round" stroke-linecap="round" /><path d="M298.5 0.0 L300.4 9.6 L327.4 11.6 L339.0 19.3 L342.8 34.7 L352.0 42.4" fill="none" stroke="#a8cde0" stroke-width="1.1" stroke-linejoin="round" stroke-linecap="round" /><path d="M115.0 63.0 L120.0 66.0" fill="none" stroke="#a8cde0" stroke-width="2" stroke-linejoin="round" stroke-linecap="round" /><path d="M56.8 354.0 L189.4 265.0 L227.0 246.0 L252.0 225.5 L341.0 171.7 L362.0 148.0 L378.4 117.8 L397.0 78.0 L442.5 48.0 L467.5 23.0 L490.6 2.0" fill="none" stroke="#8a8a8a" stroke-width="0.9" stroke-linejoin="round" stroke-linecap="round" /><path d="M94.7 339.0 L208.0 280.0 L269.0 251.8 L322.0 202.0 L350.0 188.0 L383.0 183.4 L416.0 178.7 L434.6 148.0 L456.0 71.0 L467.5 34.7 L480.0 10.0" fill="none" stroke="#8a8a8a" stroke-width="0.9" stroke-linejoin="round" stroke-linecap="round" /><path d="M0.0 143.5 L48.0 150.0 L110.0 152.0 L123.0 146.0 L181.0 138.6 L202.0 144.0 L241.0 142.5 L258.0 125.0" fill="none" stroke="#f4f4b4" stroke-width="2.4" stroke-linejoin="round" stroke-linecap="round" /><path d="M301.0 139.0 L329.0 153.0 L345.6 164.6 L373.7 178.7 L392.4 188.0 L411.0 192.7" fill="none" stroke="#f4f4b4" stroke-width="2.3" stroke-linejoin="round" stroke-linecap="round" /><path d="M106.0 354.0 L180.0 297.0 L208.0 284.0 L246.0 271.0 L284.0 261.0 L357.0 204.0 L400.0 175.0 L440.0 150.0 L462.0 126.0" fill="none" stroke="#f4f4b4" stroke-width="2.2" stroke-linejoin="round" stroke-linecap="round" /><path d="M415.5 0.0 L419.4 48.0 L432.9 63.5 L467.5 90.5 L477.0 106.0 L481.0 117.5 L496.4 134.8 L520.0 160.0 L545.0 185.0" fill="none" stroke="#f4f4b4" stroke-width="2.4" stroke-linejoin="round" stroke-linecap="round" /><path d="M441.6 73.3 L437.0 113.0 L415.9 136.5 L378.0 162.3 L350.0 190.0" fill="none" stroke="#f4f4b4" stroke-width="2.2" stroke-linejoin="round" stroke-linecap="round" /><path d="M352.6 192.7 L338.6 211.4 L322.0 234.9 L305.8 253.6" fill="none" stroke="#f4f4b4" stroke-width="2.0" stroke-linejoin="round" stroke-linecap="round" /><path d="M371.4 220.8 L385.4 249.0 L401.8 274.6 L415.9 291.0" fill="none" stroke="#f4f4b4" stroke-width="2.0" stroke-linejoin="round" stroke-linecap="round" /><path d="M404.0 202.0 L413.5 234.9" fill="none" stroke="#f4f4b4" stroke-width="1.8" stroke-linejoin="round" stroke-linecap="round" /><path d="M330.0 260.0 L370.0 245.0 L400.0 240.0 L440.0 230.0" fill="none" stroke="#f4f4b4" stroke-width="1.6" stroke-linejoin="round" stroke-linecap="round" stroke-dasharray="3 1"/><path d="M75.0 0.0 L134.8 51.0 L184.9 73.2 L227.0 100.0 L256.0 123.0 L285.0 127.0 L301.0 139.0" fill="none" stroke="#f5c78c" stroke-width="2.6" stroke-linejoin="round" stroke-linecap="round" /><path d="M441.0 179.8 L461.8 193.0 L488.3 202.5 L503.5 217.7 L518.6 242.3 L528.0 255.5 L560.0 312.3 L590.5 354.0" fill="none" stroke="#f5c78c" stroke-width="2.6" stroke-linejoin="round" stroke-linecap="round" /><path d="M136.4 354.0 L190.0 316.0 L246.0 280.0 L298.8 239.5 L355.0 213.8 L415.9 192.7 L439.0 178.7 L451.0 160.0 L458.0 117.8 L486.0 89.7 L519.5 57.8 L552.3 0.0" fill="none" stroke="#e99aa0" stroke-width="2.6" stroke-linejoin="round" stroke-linecap="round" /><path d="M362.0 105.0 L322.0 117.8 L303.5 134.0 L290.6 153.0 L294.0 174.0 L305.8 192.7 L307.0 232.5" fill="none" stroke="#e99aa0" stroke-width="2.4" stroke-linejoin="round" stroke-linecap="round" /><path d="M406.0 113.0 L417.5 125.2 L425.2 146.4 L434.8 165.6 L441.6 178.7" fill="none" stroke="#e99aa0" stroke-width="2.4" stroke-linejoin="round" stroke-linecap="round" /><path d="M38.0 354.0 L55.0 342.0 L62.0 340.0 L68.0 354.0" fill="none" stroke="#f4f4b4" stroke-width="1.8" stroke-linejoin="round" stroke-linecap="round" /><path d="M159.3 76 L161.8 71.8 L164.3 76 Z" fill="#e0813a"/><path d="M202.5 76 L205 71.8 L207.5 76 Z" fill="#e0813a"/><path d="M168.9 91 L171.4 86.8 L173.9 91 Z" fill="#e0813a"/><path d="M206.5 92.5 L209 88.3 L211.5 92.5 Z" fill="#e0813a"/><path d="M189.1 97.3 L191.6 93.1 L194.1 97.3 Z" fill="#e0813a"/><path d="M163.5 101 L166 96.8 L168.5 101 Z" fill="#e0813a"/><path d="M172.5 104 L175 99.8 L177.5 104 Z" fill="#e0813a"/><path d="M178.5 107 L181 102.8 L183.5 107 Z" fill="#e0813a"/><path d="M283.5 143.5 L286 139.3 L288.5 143.5 Z" fill="#e0813a"/><path d="M627.5 39.5 L630 35.3 L632.5 39.5 Z" fill="#e0813a"/><path d="M687.8 155 L690.3 150.8 L692.8 155 Z" fill="#e0813a"/><rect x="85.7" y="9.6" width="28.9" height="12.5" rx="2" fill="#f6ebd6" stroke="#dccaa6" stroke-width="0.8"/><text x="100.2" y="18.9" font-size="8" text-anchor="middle" fill="#6a6050" font-family="Liberation Sans">TX 46</text><rect x="9.6" y="139.0" width="38.4" height="13.0" rx="2" fill="#f6ebd6" stroke="#dccaa6" stroke-width="0.8"/><text x="28.8" y="148.5" font-size="8" text-anchor="middle" fill="#6a6050" font-family="Liberation Sans">FM 1863</text><rect x="119.4" y="142.5" width="38.9" height="12.5" rx="2" fill="#f6ebd6" stroke="#dccaa6" stroke-width="0.8"/><text x="138.9" y="151.8" font-size="8" text-anchor="middle" fill="#6a6050" font-family="Liberation Sans">FM 1863</text><rect x="202.6" y="138.6" width="38.4" height="13.4" rx="2" fill="#f6ebd6" stroke="#dccaa6" stroke-width="0.8"/><text x="221.8" y="148.3" font-size="8" text-anchor="middle" fill="#6a6050" font-family="Liberation Sans">FM 1863</text><rect x="406.9" y="49.7" width="34.1" height="11.5" rx="2" fill="#f6ebd6" stroke="#dccaa6" stroke-width="0.8"/><text x="423.9" y="58.5" font-size="8" text-anchor="middle" fill="#6a6050" font-family="Liberation Sans">FM 306</text><rect x="363.6" y="92.0" width="47.7" height="21.2" rx="2" fill="#f6dede" stroke="#e2b5b5" stroke-width="0.8"/><text x="387.5" y="100.5" font-size="8" text-anchor="middle" fill="#8a5a5a" font-family="Liberation Sans">TX 46</text><text x="387.5" y="110.0" font-size="8" text-anchor="middle" fill="#8a5a5a" font-family="Liberation Sans">Loop 337</text><rect x="528.8" y="17.0" width="25.0" height="12.8" rx="2" fill="#f6dede" stroke="#e2b5b5" stroke-width="0.8"/><text x="541.3" y="26.4" font-size="8" text-anchor="middle" fill="#8a5a5a" font-family="Liberation Sans">I 35</text><rect x="481.4" y="79.0" width="25.0" height="12.5" rx="2" fill="#f6dede" stroke="#e2b5b5" stroke-width="0.8"/><text x="493.9" y="88.2" font-size="8" text-anchor="middle" fill="#8a5a5a" font-family="Liberation Sans">I 35</text><rect x="441.7" y="122.3" width="25.1" height="12.9" rx="2" fill="#f6dede" stroke="#e2b5b5" stroke-width="0.8"/><text x="454.2" y="131.8" font-size="8" text-anchor="middle" fill="#8a5a5a" font-family="Liberation Sans">I 35</text><rect x="356.7" y="206.3" width="24.6" height="12.3" rx="2" fill="#f6dede" stroke="#e2b5b5" stroke-width="0.8"/><text x="369.0" y="215.4" font-size="8" text-anchor="middle" fill="#8a5a5a" font-family="Liberation Sans">I 35</text><rect x="301.0" y="230.0" width="24.0" height="13.0" rx="2" fill="#f6dede" stroke="#e2b5b5" stroke-width="0.8"/><text x="313.0" y="239.5" font-size="8" text-anchor="middle" fill="#8a5a5a" font-family="Liberation Sans">I 35</text><rect x="245.0" y="271.0" width="25.0" height="13.0" rx="2" fill="#f6dede" stroke="#e2b5b5" stroke-width="0.8"/><text x="257.5" y="280.5" font-size="8" text-anchor="middle" fill="#8a5a5a" font-family="Liberation Sans">I 35</text><rect x="190.0" y="309.6" width="25.0" height="13.2" rx="2" fill="#f6dede" stroke="#e2b5b5" stroke-width="0.8"/><text x="202.5" y="319.2" font-size="8" text-anchor="middle" fill="#8a5a5a" font-family="Liberation Sans">I 35</text><rect x="460.0" y="192.0" width="29.0" height="12.4" rx="2" fill="#f6ebd6" stroke="#dccaa6" stroke-width="0.8"/><text x="474.5" y="201.2" font-size="8" text-anchor="middle" fill="#6a6050" font-family="Liberation Sans">TX 46</text><rect x="508.8" y="243.8" width="28.7" height="12.7" rx="2" fill="#f6ebd6" stroke="#dccaa6" stroke-width="0.8"/><text x="523.1" y="253.2" font-size="8" text-anchor="middle" fill="#6a6050" font-family="Liberation Sans">TX 46</text><rect x="548.9" y="312.3" width="28.4" height="13.3" rx="2" fill="#f6ebd6" stroke="#dccaa6" stroke-width="0.8"/><text x="563.1" y="322.0" font-size="8" text-anchor="middle" fill="#6a6050" font-family="Liberation Sans">TX 46</text><rect x="705.0" y="186.0" width="15.0" height="12.0" rx="2" fill="#f6ebd6" stroke="#dccaa6" stroke-width="0.8"/><text x="712.5" y="195.0" font-size="8" text-anchor="middle" fill="#6a6050" font-family="Liberation Sans"></text><rect x="705.0" y="235.0" width="15.0" height="12.0" rx="2" fill="#f6ebd6" stroke="#dccaa6" stroke-width="0.8"/><text x="712.5" y="244.0" font-size="8" text-anchor="middle" fill="#6a6050" font-family="Liberation Sans"></text><rect x="705.0" y="290.0" width="15.0" height="12.0" rx="2" fill="#f6ebd6" stroke="#dccaa6" stroke-width="0.8"/><text x="712.5" y="299.0" font-size="8" text-anchor="middle" fill="#6a6050" font-family="Liberation Sans"></text><rect x="705.0" y="340.0" width="15.0" height="12.0" rx="2" fill="#f6ebd6" stroke="#dccaa6" stroke-width="0.8"/><text x="712.5" y="349.0" font-size="8" text-anchor="middle" fill="#6a6050" font-family="Liberation Sans"></text><text x="75" y="70" font-size="7.5" fill="#8a8a8a" font-style="italic" text-anchor="middle" font-family="Liberation Sans">Copper</text><text x="75" y="79" font-size="7.5" fill="#8a8a8a" font-style="italic" text-anchor="middle" font-family="Liberation Sans">Ridge</text><text x="210" y="271" font-size="7.5" fill="#8a70c0" font-style="italic" text-anchor="middle" font-family="Liberation Sans">Fox Airport</text><text x="342.8" y="280" font-size="7.5" fill="#8a70c0" font-style="italic" text-anchor="middle" font-family="Liberation Sans">Hilltop</text><text x="342.8" y="289.5" font-size="7.5" fill="#8a70c0" font-style="italic" text-anchor="middle" font-family="Liberation Sans">Ranch</text><text x="342.8" y="299" font-size="7.5" fill="#8a70c0" font-style="italic" text-anchor="middle" font-family="Liberation Sans">Airport</text><text x="556" y="180" font-size="7.5" fill="#8a70c0" font-style="italic" text-anchor="middle" font-family="Liberation Sans">New Braunfels</text><text x="556" y="189.5" font-size="7.5" fill="#8a70c0" font-style="italic" text-anchor="middle" font-family="Liberation Sans">Regional</text><text x="556" y="199" font-size="7.5" fill="#8a70c0" font-style="italic" text-anchor="middle" font-family="Liberation Sans">Airport</text><text x="617" y="251" font-size="7.5" fill="#8a70c0" font-style="italic" text-anchor="middle" font-family="Liberation Sans">Cunningham</text><text x="617" y="260.5" font-size="7.5" fill="#8a70c0" font-style="italic" text-anchor="middle" font-family="Liberation Sans">Airpark</text><path d="M210 254 L210.8 257 L214 258.5 L214 259.5 L210.8 259 L210.5 261 L211.8 262 L208.2 262 L209.5 261 L209.2 259 L206 259.5 L206 258.5 L209.2 257 Z" fill="#8a70c0"/><path d="M342.8 266 L343.6 269 L346.8 270.5 L346.8 271.5 L343.6 271 L343.3 273 L344.6 274 L341.0 274 L342.3 273 L342.0 271 L338.8 271.5 L338.8 270.5 L342.0 269 Z" fill="#8a70c0"/><path d="M556 164 L556.8 167 L560 168.5 L560 169.5 L556.8 169 L556.5 171 L557.8 172 L554.2 172 L555.5 171 L555.2 169 L552 169.5 L552 168.5 L555.2 167 Z" fill="#8a70c0"/><path d="M617 236 L617.8 239 L621 240.5 L621 241.5 L617.8 241 L617.5 243 L618.8 244 L615.2 244 L616.5 243 L616.2 241 L613 241.5 L613 240.5 L616.2 239 Z" fill="#8a70c0"/><text x="376" y="173" font-size="11" text-anchor="middle" fill="#555" font-family="Liberation Sans">New Braunfels</text><circle cx="278.6" cy="103.0" r="9.3" fill="#a6d97f" fill-opacity="0.95"/><circle cx="278.6" cy="103.0" r="6.800000000000001" fill="#8fcf63" fill-opacity="0.6"/><text x="278.6" y="107.0" font-size="11.5" text-anchor="middle" fill="#222" font-family="Liberation Sans">19</text><circle cx="259.0" cy="114.6" r="9.3" fill="#a6d97f" fill-opacity="0.95"/><circle cx="259.0" cy="114.6" r="6.800000000000001" fill="#8fcf63" fill-opacity="0.6"/><text x="259.0" y="118.6" font-size="11.5" text-anchor="middle" fill="#222" font-family="Liberation Sans">32</text><circle cx="310.0" cy="126.0" r="9.3" fill="#a6d97f" fill-opacity="0.95"/><circle cx="310.0" cy="126.0" r="6.800000000000001" fill="#8fcf63" fill-opacity="0.6"/><text x="310.0" y="130.0" font-size="11.5" text-anchor="middle" fill="#222" font-family="Liberation Sans">52</text><circle cx="335.4" cy="149.2" r="9.3" fill="#a6d97f" fill-opacity="0.95"/><circle cx="335.4" cy="149.2" r="6.800000000000001" fill="#8fcf63" fill-opacity="0.6"/><text x="335.4" y="153.2" font-size="11.5" text-anchor="middle" fill="#222" font-family="Liberation Sans">11</text><circle cx="383.4" cy="141.5" r="9.3" fill="#a6d97f" fill-opacity="0.95"/><circle cx="383.4" cy="141.5" r="6.800000000000001" fill="#8fcf63" fill-opacity="0.6"/><text x="383.4" y="145.5" font-size="11.5" text-anchor="middle" fill="#222" font-family="Liberation Sans">7</text><circle cx="359.7" cy="167.5" r="9.3" fill="#a6d97f" fill-opacity="0.95"/><circle cx="359.7" cy="167.5" r="6.800000000000001" fill="#8fcf63" fill-opacity="0.6"/><text x="359.7" y="171.5" font-size="11.5" text-anchor="middle" fill="#222" font-family="Liberation Sans">111</text><circle cx="352.0" cy="179.5" r="9.3" fill="#a6d97f" fill-opacity="0.95"/><circle cx="352.0" cy="179.5" r="6.800000000000001" fill="#8fcf63" fill-opacity="0.6"/><text x="352.0" y="183.5" font-size="11.5" text-anchor="middle" fill="#222" font-family="Liberation Sans">4</text><circle cx="368.0" cy="181.0" r="9.3" fill="#a6d97f" fill-opacity="0.95"/><circle cx="368.0" cy="181.0" r="6.800000000000001" fill="#8fcf63" fill-opacity="0.6"/><text x="368.0" y="185.0" font-size="11.5" text-anchor="middle" fill="#222" font-family="Liberation Sans">16</text><circle cx="370.0" cy="187.4" r="9.3" fill="#a6d97f" fill-opacity="0.95"/><circle cx="370.0" cy="187.4" r="6.800000000000001" fill="#8fcf63" fill-opacity="0.6"/><text x="370.0" y="191.4" font-size="11.5" text-anchor="middle" fill="#222" font-family="Liberation Sans">21</text><circle cx="325.4" cy="207.0" r="9.3" fill="#a6d97f" fill-opacity="0.95"/><circle cx="325.4" cy="207.0" r="6.800000000000001" fill="#8fcf63" fill-opacity="0.6"/><text x="325.4" y="211.0" font-size="11.5" text-anchor="middle" fill="#222" font-family="Liberation Sans">11</text><circle cx="377.6" cy="235.0" r="9.3" fill="#a6d97f" fill-opacity="0.95"/><circle cx="377.6" cy="235.0" r="6.800000000000001" fill="#8fcf63" fill-opacity="0.6"/><text x="377.6" y="239.0" font-size="11.5" text-anchor="middle" fill="#222" font-family="Liberation Sans">8</text><circle cx="376.6" cy="241.3" r="9.3" fill="#a6d97f" fill-opacity="0.95"/><circle cx="376.6" cy="241.3" r="6.800000000000001" fill="#8fcf63" fill-opacity="0.6"/><text x="376.6" y="245.3" font-size="11.5" text-anchor="middle" fill="#222" font-family="Liberation Sans">10</text><circle cx="362.4" cy="254.6" r="9.3" fill="#a6d97f" fill-opacity="0.95"/><circle cx="362.4" cy="254.6" r="6.800000000000001" fill="#8fcf63" fill-opacity="0.6"/><text x="362.4" y="258.6" font-size="11.5" text-anchor="middle" fill="#222" font-family="Liberation Sans">14</text><circle cx="395.5" cy="283.0" r="9.3" fill="#a6d97f" fill-opacity="0.95"/><circle cx="395.5" cy="283.0" r="6.800000000000001" fill="#8fcf63" fill-opacity="0.6"/><text x="395.5" y="287.0" font-size="11.5" text-anchor="middle" fill="#222" font-family="Liberation Sans">13</text><circle cx="380.4" cy="325.6" r="9.3" fill="#a6d97f" fill-opacity="0.95"/><circle cx="380.4" cy="325.6" r="6.800000000000001" fill="#8fcf63" fill-opacity="0.6"/><text x="380.4" y="329.6" font-size="11.5" text-anchor="middle" fill="#222" font-family="Liberation Sans">39</text><rect x="7.5" y="7.5" width="20" height="40" rx="3" fill="#fff" stroke="#bbb" stroke-width="1"/><path d="M8 26.5 H27" stroke="#ccc" stroke-width="1"/><path d="M17.5 13 V21.5 M13.3 17.3 H21.7" stroke="#333" stroke-width="1.6"/><path d="M13.5 36.3 H21.5" stroke="#333" stroke-width="1.6"/></svg><div class="r" style="left:1871px;top:101px;width:17px;height:363px;background:#f1f1f1;"></div><div class="r" style="left:1873px;top:118px;width:13px;height:256px;background:#c1c1c1;"></div><div class="r" style="left:1875.5px;top:107px;width:0;height:0;border-left:4px solid transparent;border-right:4px solid transparent;border-bottom:4px solid #a3a3a3"></div><div class="r" style="left:1875.5px;top:452px;width:0;height:0;border-left:4px solid transparent;border-right:4px solid transparent;border-top:4px solid #505050"></div>
<div class="r" style="left:15px;top:259px;width:356px;height:205px;overflow:hidden;"><div class="t" style="left:7.7px;top:5.8px;line-height:18px;font-size:15.4px;font-weight:normal;color:#333;">Top 10 devices (last 5 minutes)</div><div class="t" style="left:10.6px;top:25.5px;line-height:14px;font-size:11.6px;font-weight:bold;color:#333;">Device</div><div class="t" style="left:202.2px;top:25.5px;line-height:14px;font-size:11.6px;font-weight:bold;color:#333;">CPU Load</div><div class="r" style="left:7px;top:42px;width:337.7px;height:1px;background:#ddd;"></div><div class="r" style="left:7px;top:43px;width:337.7px;height:22.5px;background:#f9f9f9;"></div><div class="t" style="left:10.6px;top:46.5px;line-height:14px;font-size:12.0px;font-weight:bold;color:#3f6d9e;">noc-msm_sg248gg014</div><svg class="r" style="left:202.2px;top:45.5px" width="112.7" height="17" viewBox="0 0 112.7 17"><path d="M0.0 3.1 L1.3 2.1 L2.5 1.2 L3.8 1.4 L5.0 1.3 L6.3 2.2 L7.5 1.1 L8.8 1.9 L10.0 3.3 L11.3 2.1 L12.5 3.4 L13.8 0.7 L15.0 0.7 L16.3 2.5 L17.5 2.6 L18.8 1.2 L20.0 2.9 L21.3 3.0 L22.5 2.9 L23.8 2.5 L25.0 1.6 L26.3 0.6 L27.5 2.9 L28.8 0.6 L30.1 1.8 L31.3 0.8 L32.6 1.0 L33.8 3.0 L35.1 1.6 L36.3 3.1 L37.6 3.5 L38.8 2.3 L40.1 1.2 L41.3 1.8 L42.6 2.9 L43.8 1.0 L45.1 0.8 L46.3 2.8 L47.6 2.2 L48.8 1.6 L50.1 0.8 L51.3 3.1 L52.6 1.8 L53.8 0.6 L55.1 1.7 L56.4 1.3 L57.6 1.2 L58.9 2.0 L60.1 2.6 L61.4 1.7 L62.6 1.9 L63.9 2.5 L65.1 0.9 L66.4 2.4 L67.6 2.0 L68.9 1.2 L70.1 1.1 L71.4 0.8 L72.6 1.5 L73.9 2.7 L75.1 1.0 L76.4 0.8 L77.6 1.4 L78.9 1.2 L80.1 2.0 L81.4 2.0 L82.6 1.8 L83.9 3.1 L85.2 1.5 L86.4 0.9 L87.7 3.0 L88.9 1.2 L90.2 1.4 L91.4 3.1 L92.7 3.3 L93.9 1.7 L95.2 2.8 L96.4 2.6 L97.7 1.6 L98.9 1.5 L100.2 1.3 L101.4 1.8 L102.7 2.5 L103.9 3.5 L105.2 3.2 L106.4 2.9 L107.7 1.9 L108.9 1.3 L110.2 2.9 L111.4 2.3 L112.7 0.7 L112.7 16.0 L0 16.0 Z" fill="#f5e9e4"/><path d="M0.0 3.1 L1.3 2.1 L2.5 1.2 L3.8 1.4 L5.0 1.3 L6.3 2.2 L7.5 1.1 L8.8 1.9 L10.0 3.3 L11.3 2.1 L12.5 3.4 L13.8 0.7 L15.0 0.7 L16.3 2.5 L17.5 2.6 L18.8 1.2 L20.0 2.9 L21.3 3.0 L22.5 2.9 L23.8 2.5 L25.0 1.6 L26.3 0.6 L27.5 2.9 L28.8 0.6 L30.1 1.8 L31.3 0.8 L32.6 1.0 L33.8 3.0 L35.1 1.6 L36.3 3.1 L37.6 3.5 L38.8 2.3 L40.1 1.2 L41.3 1.8 L42.6 2.9 L43.8 1.0 L45.1 0.8 L46.3 2.8 L47.6 2.2 L48.8 1.6 L50.1 0.8 L51.3 3.1 L52.6 1.8 L53.8 0.6 L55.1 1.7 L56.4 1.3 L57.6 1.2 L58.9 2.0 L60.1 2.6 L61.4 1.7 L62.6 1.9 L63.9 2.5 L65.1 0.9 L66.4 2.4 L67.6 2.0 L68.9 1.2 L70.1 1.1 L71.4 0.8 L72.6 1.5 L73.9 2.7 L75.1 1.0 L76.4 0.8 L77.6 1.4 L78.9 1.2 L80.1 2.0 L81.4 2.0 L82.6 1.8 L83.9 3.1 L85.2 1.5 L86.4 0.9 L87.7 3.0 L88.9 1.2 L90.2 1.4 L91.4 3.1 L92.7 3.3 L93.9 1.7 L95.2 2.8 L96.4 2.6 L97.7 1.6 L98.9 1.5 L100.2 1.3 L101.4 1.8 L102.7 2.5 L103.9 3.5 L105.2 3.2 L106.4 2.9 L107.7 1.9 L108.9 1.3 L110.2 2.9 L111.4 2.3 L112.7 0.7" fill="none" stroke="#dd3c36" stroke-width="1.4"/><rect x="0" y="15.6" width="112.7" height="1" fill="#bbb"/></svg><div class="r" style="left:7px;top:65px;width:337.7px;height:1px;background:#ddd;"></div><div class="t" style="left:10.6px;top:69.5px;line-height:14px;font-size:12.0px;font-weight:bold;color:#3f6d9e;">noc-msm_sg132gg048</div><svg class="r" style="left:202.2px;top:69.5px" width="112.7" height="16" viewBox="0 0 112.7 16"><path d="M0.0 13.2 L1.1 12.3 L2.3 12.6 L3.4 11.5 L4.5 7.3 L5.6 4.8 L6.8 11.8 L7.9 6.6 L9.0 12.9 L10.1 7.8 L11.3 13.2 L12.4 13.1 L13.5 6.1 L14.7 12.6 L15.8 13.0 L16.9 12.9 L18.0 12.6 L19.2 9.3 L20.3 13.0 L21.4 7.2 L22.5 8.4 L23.7 13.2 L24.8 12.9 L25.9 7.3 L27.0 13.0 L28.2 12.9 L29.3 12.3 L30.4 5.7 L31.6 12.6 L32.7 12.7 L33.8 10.4 L34.9 12.3 L36.1 13.3 L37.2 12.5 L38.3 12.4 L39.4 11.9 L40.6 12.5 L41.7 12.9 L42.8 13.3 L44.0 12.3 L45.1 12.9 L46.2 12.6 L47.3 13.4 L48.5 6.1 L49.6 5.1 L50.7 11.7 L51.8 4.7 L53.0 13.1 L54.1 7.6 L55.2 13.5 L56.4 12.3 L57.5 12.7 L58.6 13.2 L59.7 7.6 L60.9 12.8 L62.0 5.1 L63.1 7.4 L64.2 13.0 L65.4 11.5 L66.5 12.2 L67.6 10.4 L68.7 12.9 L69.9 12.6 L71.0 13.0 L72.1 12.8 L73.3 8.6 L74.4 7.4 L75.5 13.2 L76.6 12.9 L77.8 13.1 L78.9 4.6 L80.0 12.9 L81.1 13.1 L82.3 12.2 L83.4 12.9 L84.5 12.3 L85.7 9.8 L86.8 13.1 L87.9 13.3 L89.0 12.3 L90.2 7.3 L91.3 7.8 L92.4 12.2 L93.5 13.0 L94.7 13.3 L95.8 12.9 L96.9 11.4 L98.0 6.3 L99.2 11.4 L100.3 12.1 L101.4 12.7 L102.6 12.3 L103.7 13.4 L104.8 8.9 L105.9 12.3 L107.1 13.2 L108.2 12.2 L109.3 5.1 L110.4 12.7 L111.6 13.3 L112.7 13.1 L112.7 15.0 L0 15.0 Z" fill="#f4ece6"/><path d="M0.0 13.2 L1.1 12.3 L2.3 12.6 L3.4 11.5 L4.5 7.3 L5.6 4.8 L6.8 11.8 L7.9 6.6 L9.0 12.9 L10.1 7.8 L11.3 13.2 L12.4 13.1 L13.5 6.1 L14.7 12.6 L15.8 13.0 L16.9 12.9 L18.0 12.6 L19.2 9.3 L20.3 13.0 L21.4 7.2 L22.5 8.4 L23.7 13.2 L24.8 12.9 L25.9 7.3 L27.0 13.0 L28.2 12.9 L29.3 12.3 L30.4 5.7 L31.6 12.6 L32.7 12.7 L33.8 10.4 L34.9 12.3 L36.1 13.3 L37.2 12.5 L38.3 12.4 L39.4 11.9 L40.6 12.5 L41.7 12.9 L42.8 13.3 L44.0 12.3 L45.1 12.9 L46.2 12.6 L47.3 13.4 L48.5 6.1 L49.6 5.1 L50.7 11.7 L51.8 4.7 L53.0 13.1 L54.1 7.6 L55.2 13.5 L56.4 12.3 L57.5 12.7 L58.6 13.2 L59.7 7.6 L60.9 12.8 L62.0 5.1 L63.1 7.4 L64.2 13.0 L65.4 11.5 L66.5 12.2 L67.6 10.4 L68.7 12.9 L69.9 12.6 L71.0 13.0 L72.1 12.8 L73.3 8.6 L74.4 7.4 L75.5 13.2 L76.6 12.9 L77.8 13.1 L78.9 4.6 L80.0 12.9 L81.1 13.1 L82.3 12.2 L83.4 12.9 L84.5 12.3 L85.7 9.8 L86.8 13.1 L87.9 13.3 L89.0 12.3 L90.2 7.3 L91.3 7.8 L92.4 12.2 L93.5 13.0 L94.7 13.3 L95.8 12.9 L96.9 11.4 L98.0 6.3 L99.2 11.4 L100.3 12.1 L101.4 12.7 L102.6 12.3 L103.7 13.4 L104.8 8.9 L105.9 12.3 L107.1 13.2 L108.2 12.2 L109.3 5.1 L110.4 12.7 L111.6 13.3 L112.7 13.1" fill="none" stroke="#dd3c36" stroke-width="1.1"/><rect x="0" y="14.6" width="112.7" height="1" fill="#bbb"/></svg><div class="r" style="left:7px;top:89px;width:337.7px;height:22.5px;background:#f9f9f9;"></div><div class="r" style="left:7px;top:88px;width:337.7px;height:1px;background:#ddd;"></div><div class="t" style="left:10.6px;top:92.5px;line-height:14px;font-size:12.0px;font-weight:bold;color:#3f6d9e;">nbhs-mdf-lan5-faculty</div><svg class="r" style="left:202.2px;top:92.5px" width="112.7" height="16" viewBox="0 0 112.7 16"><path d="M0.0 11.4 L1.1 11.0 L2.3 13.7 L3.4 13.6 L4.5 11.8 L5.6 13.6 L6.8 13.5 L7.9 13.8 L9.0 10.7 L10.1 13.5 L11.3 13.6 L12.4 11.8 L13.5 11.4 L14.7 13.5 L15.8 13.5 L16.9 11.1 L18.0 13.5 L19.2 13.7 L20.3 13.8 L21.4 11.5 L22.5 13.6 L23.7 13.6 L24.8 13.4 L25.9 13.5 L27.0 13.3 L28.2 13.5 L29.3 13.5 L30.4 13.5 L31.6 13.4 L32.7 13.6 L33.8 13.6 L34.9 13.3 L36.1 13.8 L37.2 10.5 L38.3 13.7 L39.4 11.2 L40.6 13.8 L41.7 13.5 L42.8 12.2 L44.0 12.0 L45.1 13.6 L46.2 13.8 L47.3 13.3 L48.5 13.7 L49.6 13.7 L50.7 13.1 L51.8 10.9 L53.0 12.0 L54.1 13.4 L55.2 13.4 L56.4 13.8 L57.5 13.2 L58.6 13.7 L59.7 13.3 L60.9 13.6 L62.0 12.8 L63.1 11.3 L64.2 13.3 L65.4 13.3 L66.5 13.6 L67.6 13.7 L68.7 13.5 L69.9 13.9 L71.0 10.1 L72.1 12.1 L73.3 13.6 L74.4 13.3 L75.5 13.4 L76.6 13.6 L77.8 13.3 L78.9 11.6 L80.0 11.7 L81.1 13.6 L82.3 13.9 L83.4 13.4 L84.5 13.9 L85.7 13.6 L86.8 13.6 L87.9 10.3 L89.0 13.5 L90.2 13.6 L91.3 11.1 L92.4 10.9 L93.5 13.8 L94.7 13.6 L95.8 10.0 L96.9 10.4 L98.0 12.5 L99.2 13.7 L100.3 13.8 L101.4 13.8 L102.6 11.1 L103.7 12.0 L104.8 13.8 L105.9 11.1 L107.1 13.9 L108.2 13.3 L109.3 13.3 L110.4 13.3 L111.6 12.0 L112.7 13.7 L112.7 15.0 L0 15.0 Z" fill="#f4ece6"/><path d="M0.0 11.4 L1.1 11.0 L2.3 13.7 L3.4 13.6 L4.5 11.8 L5.6 13.6 L6.8 13.5 L7.9 13.8 L9.0 10.7 L10.1 13.5 L11.3 13.6 L12.4 11.8 L13.5 11.4 L14.7 13.5 L15.8 13.5 L16.9 11.1 L18.0 13.5 L19.2 13.7 L20.3 13.8 L21.4 11.5 L22.5 13.6 L23.7 13.6 L24.8 13.4 L25.9 13.5 L27.0 13.3 L28.2 13.5 L29.3 13.5 L30.4 13.5 L31.6 13.4 L32.7 13.6 L33.8 13.6 L34.9 13.3 L36.1 13.8 L37.2 10.5 L38.3 13.7 L39.4 11.2 L40.6 13.8 L41.7 13.5 L42.8 12.2 L44.0 12.0 L45.1 13.6 L46.2 13.8 L47.3 13.3 L48.5 13.7 L49.6 13.7 L50.7 13.1 L51.8 10.9 L53.0 12.0 L54.1 13.4 L55.2 13.4 L56.4 13.8 L57.5 13.2 L58.6 13.7 L59.7 13.3 L60.9 13.6 L62.0 12.8 L63.1 11.3 L64.2 13.3 L65.4 13.3 L66.5 13.6 L67.6 13.7 L68.7 13.5 L69.9 13.9 L71.0 10.1 L72.1 12.1 L73.3 13.6 L74.4 13.3 L75.5 13.4 L76.6 13.6 L77.8 13.3 L78.9 11.6 L80.0 11.7 L81.1 13.6 L82.3 13.9 L83.4 13.4 L84.5 13.9 L85.7 13.6 L86.8 13.6 L87.9 10.3 L89.0 13.5 L90.2 13.6 L91.3 11.1 L92.4 10.9 L93.5 13.8 L94.7 13.6 L95.8 10.0 L96.9 10.4 L98.0 12.5 L99.2 13.7 L100.3 13.8 L101.4 13.8 L102.6 11.1 L103.7 12.0 L104.8 13.8 L105.9 11.1 L107.1 13.9 L108.2 13.3 L109.3 13.3 L110.4 13.3 L111.6 12.0 L112.7 13.7" fill="none" stroke="#dd3c36" stroke-width="1.1"/><rect x="0" y="14.6" width="112.7" height="1" fill="#bbb"/></svg><div class="r" style="left:7px;top:111px;width:337.7px;height:1px;background:#ddd;"></div><div class="t" style="left:10.6px;top:115.5px;line-height:14px;font-size:12.0px;font-weight:bold;color:#3f6d9e;">ve-idfb-wlan2</div><svg class="r" style="left:202.2px;top:115.5px" width="112.7" height="16" viewBox="0 0 112.7 16"><path d="M0.0 13.9 L1.1 13.8 L2.3 13.9 L3.4 14.1 L4.5 13.8 L5.6 14.1 L6.8 13.5 L7.9 14.1 L9.0 13.8 L10.1 12.8 L11.3 13.1 L12.4 13.8 L13.5 13.8 L14.7 13.8 L15.8 13.2 L16.9 13.7 L18.0 13.9 L19.2 13.4 L20.3 11.6 L21.4 13.8 L22.5 13.8 L23.7 12.9 L24.8 13.0 L25.9 13.9 L27.0 14.1 L28.2 13.8 L29.3 12.9 L30.4 13.7 L31.6 13.8 L32.7 14.0 L33.8 13.9 L34.9 13.8 L36.1 13.8 L37.2 13.0 L38.3 12.5 L39.4 13.9 L40.6 13.9 L41.7 13.1 L42.8 13.9 L44.0 13.9 L45.1 12.7 L46.2 14.0 L47.3 13.8 L48.5 13.7 L49.6 11.8 L50.7 13.2 L51.8 14.1 L53.0 13.8 L54.1 13.8 L55.2 13.3 L56.4 14.1 L57.5 11.9 L58.6 14.0 L59.7 14.0 L60.9 14.0 L62.0 13.8 L63.1 13.5 L64.2 14.0 L65.4 14.0 L66.5 13.9 L67.6 12.2 L68.7 13.8 L69.9 13.8 L71.0 14.1 L72.1 14.1 L73.3 13.5 L74.4 13.8 L75.5 14.0 L76.6 11.6 L77.8 13.9 L78.9 14.0 L80.0 13.9 L81.1 13.8 L82.3 13.8 L83.4 13.5 L84.5 13.8 L85.7 13.8 L86.8 13.9 L87.9 12.4 L89.0 13.9 L90.2 13.7 L91.3 14.1 L92.4 12.6 L93.5 14.0 L94.7 13.9 L95.8 14.1 L96.9 14.0 L98.0 13.9 L99.2 13.9 L100.3 13.2 L101.4 14.0 L102.6 12.5 L103.7 13.0 L104.8 14.0 L105.9 14.0 L107.1 12.4 L108.2 13.1 L109.3 12.4 L110.4 11.7 L111.6 13.9 L112.7 13.8 L112.7 15.0 L0 15.0 Z" fill="#f4ece6"/><path d="M0.0 13.9 L1.1 13.8 L2.3 13.9 L3.4 14.1 L4.5 13.8 L5.6 14.1 L6.8 13.5 L7.9 14.1 L9.0 13.8 L10.1 12.8 L11.3 13.1 L12.4 13.8 L13.5 13.8 L14.7 13.8 L15.8 13.2 L16.9 13.7 L18.0 13.9 L19.2 13.4 L20.3 11.6 L21.4 13.8 L22.5 13.8 L23.7 12.9 L24.8 13.0 L25.9 13.9 L27.0 14.1 L28.2 13.8 L29.3 12.9 L30.4 13.7 L31.6 13.8 L32.7 14.0 L33.8 13.9 L34.9 13.8 L36.1 13.8 L37.2 13.0 L38.3 12.5 L39.4 13.9 L40.6 13.9 L41.7 13.1 L42.8 13.9 L44.0 13.9 L45.1 12.7 L46.2 14.0 L47.3 13.8 L48.5 13.7 L49.6 11.8 L50.7 13.2 L51.8 14.1 L53.0 13.8 L54.1 13.8 L55.2 13.3 L56.4 14.1 L57.5 11.9 L58.6 14.0 L59.7 14.0 L60.9 14.0 L62.0 13.8 L63.1 13.5 L64.2 14.0 L65.4 14.0 L66.5 13.9 L67.6 12.2 L68.7 13.8 L69.9 13.8 L71.0 14.1 L72.1 14.1 L73.3 13.5 L74.4 13.8 L75.5 14.0 L76.6 11.6 L77.8 13.9 L78.9 14.0 L80.0 13.9 L81.1 13.8 L82.3 13.8 L83.4 13.5 L84.5 13.8 L85.7 13.8 L86.8 13.9 L87.9 12.4 L89.0 13.9 L90.2 13.7 L91.3 14.1 L92.4 12.6 L93.5 14.0 L94.7 13.9 L95.8 14.1 L96.9 14.0 L98.0 13.9 L99.2 13.9 L100.3 13.2 L101.4 14.0 L102.6 12.5 L103.7 13.0 L104.8 14.0 L105.9 14.0 L107.1 12.4 L108.2 13.1 L109.3 12.4 L110.4 11.7 L111.6 13.9 L112.7 13.8" fill="none" stroke="#dd3c36" stroke-width="1.1"/><rect x="0" y="14.6" width="112.7" height="1" fill="#bbb"/></svg><div class="r" style="left:7px;top:135px;width:337.7px;height:22.5px;background:#f9f9f9;"></div><div class="r" style="left:7px;top:134px;width:337.7px;height:1px;background:#ddd;"></div><div class="t" style="left:10.6px;top:138.5px;line-height:14px;font-size:12.0px;font-weight:bold;color:#3f6d9e;">vfe-core</div><svg class="r" style="left:202.2px;top:138.5px" width="112.7" height="16" viewBox="0 0 112.7 16"><path d="M0.0 13.9 L1.1 14.1 L2.3 12.4 L3.4 14.2 L4.5 12.0 L5.6 12.6 L6.8 12.6 L7.9 14.0 L9.0 14.1 L10.1 14.0 L11.3 14.0 L12.4 14.1 L13.5 12.8 L14.7 12.7 L15.8 13.9 L16.9 13.2 L18.0 14.1 L19.2 14.1 L20.3 14.2 L21.4 13.9 L22.5 14.0 L23.7 13.8 L24.8 12.9 L25.9 13.3 L27.0 13.8 L28.2 14.2 L29.3 14.2 L30.4 14.1 L31.6 12.6 L32.7 14.0 L33.8 14.0 L34.9 14.1 L36.1 13.9 L37.2 13.9 L38.3 14.0 L39.4 13.9 L40.6 14.2 L41.7 14.1 L42.8 14.0 L44.0 12.8 L45.1 13.9 L46.2 14.1 L47.3 13.8 L48.5 13.9 L49.6 12.5 L50.7 13.8 L51.8 13.8 L53.0 13.7 L54.1 13.6 L55.2 14.2 L56.4 14.1 L57.5 14.1 L58.6 14.1 L59.7 13.0 L60.9 12.0 L62.0 14.1 L63.1 13.8 L64.2 14.1 L65.4 13.2 L66.5 14.0 L67.6 12.0 L68.7 13.3 L69.9 13.9 L71.0 14.2 L72.1 14.0 L73.3 13.3 L74.4 14.2 L75.5 13.8 L76.6 14.1 L77.8 13.9 L78.9 13.1 L80.0 12.2 L81.1 14.1 L82.3 13.9 L83.4 14.0 L84.5 13.4 L85.7 14.0 L86.8 13.9 L87.9 14.0 L89.0 12.8 L90.2 12.7 L91.3 11.9 L92.4 12.0 L93.5 13.7 L94.7 12.1 L95.8 13.9 L96.9 14.1 L98.0 14.1 L99.2 14.2 L100.3 14.2 L101.4 12.7 L102.6 14.0 L103.7 14.1 L104.8 12.4 L105.9 14.0 L107.1 13.2 L108.2 14.1 L109.3 13.9 L110.4 13.9 L111.6 14.0 L112.7 14.2 L112.7 15.0 L0 15.0 Z" fill="#f4ece6"/><path d="M0.0 13.9 L1.1 14.1 L2.3 12.4 L3.4 14.2 L4.5 12.0 L5.6 12.6 L6.8 12.6 L7.9 14.0 L9.0 14.1 L10.1 14.0 L11.3 14.0 L12.4 14.1 L13.5 12.8 L14.7 12.7 L15.8 13.9 L16.9 13.2 L18.0 14.1 L19.2 14.1 L20.3 14.2 L21.4 13.9 L22.5 14.0 L23.7 13.8 L24.8 12.9 L25.9 13.3 L27.0 13.8 L28.2 14.2 L29.3 14.2 L30.4 14.1 L31.6 12.6 L32.7 14.0 L33.8 14.0 L34.9 14.1 L36.1 13.9 L37.2 13.9 L38.3 14.0 L39.4 13.9 L40.6 14.2 L41.7 14.1 L42.8 14.0 L44.0 12.8 L45.1 13.9 L46.2 14.1 L47.3 13.8 L48.5 13.9 L49.6 12.5 L50.7 13.8 L51.8 13.8 L53.0 13.7 L54.1 13.6 L55.2 14.2 L56.4 14.1 L57.5 14.1 L58.6 14.1 L59.7 13.0 L60.9 12.0 L62.0 14.1 L63.1 13.8 L64.2 14.1 L65.4 13.2 L66.5 14.0 L67.6 12.0 L68.7 13.3 L69.9 13.9 L71.0 14.2 L72.1 14.0 L73.3 13.3 L74.4 14.2 L75.5 13.8 L76.6 14.1 L77.8 13.9 L78.9 13.1 L80.0 12.2 L81.1 14.1 L82.3 13.9 L83.4 14.0 L84.5 13.4 L85.7 14.0 L86.8 13.9 L87.9 14.0 L89.0 12.8 L90.2 12.7 L91.3 11.9 L92.4 12.0 L93.5 13.7 L94.7 12.1 L95.8 13.9 L96.9 14.1 L98.0 14.1 L99.2 14.2 L100.3 14.2 L101.4 12.7 L102.6 14.0 L103.7 14.1 L104.8 12.4 L105.9 14.0 L107.1 13.2 L108.2 14.1 L109.3 13.9 L110.4 13.9 L111.6 14.0 L112.7 14.2" fill="none" stroke="#dd3c36" stroke-width="1.1"/><rect x="0" y="14.6" width="112.7" height="1" fill="#bbb"/></svg><div class="r" style="left:7px;top:157px;width:337.7px;height:1px;background:#ddd;"></div><div class="t" style="left:10.6px;top:161.5px;line-height:14px;font-size:12.0px;font-weight:bold;color:#3f6d9e;">ve-mdf-wlan2</div><svg class="r" style="left:202.2px;top:161.5px" width="112.7" height="16" viewBox="0 0 112.7 16"><path d="M0.0 14.1 L1.1 13.9 L2.3 12.7 L3.4 13.9 L4.5 12.7 L5.6 12.9 L6.8 14.1 L7.9 14.1 L9.0 13.9 L10.1 14.1 L11.3 14.0 L12.4 14.0 L13.5 14.1 L14.7 13.9 L15.8 14.2 L16.9 14.0 L18.0 13.9 L19.2 14.0 L20.3 14.0 L21.4 14.0 L22.5 14.0 L23.7 14.0 L24.8 14.0 L25.9 14.0 L27.0 13.4 L28.2 13.7 L29.3 14.0 L30.4 14.0 L31.6 13.9 L32.7 14.2 L33.8 14.1 L34.9 14.1 L36.1 14.1 L37.2 13.9 L38.3 14.2 L39.4 14.1 L40.6 14.1 L41.7 12.4 L42.8 14.2 L44.0 13.9 L45.1 14.1 L46.2 14.1 L47.3 14.1 L48.5 14.1 L49.6 13.5 L50.7 13.9 L51.8 13.0 L53.0 12.5 L54.1 14.0 L55.2 14.0 L56.4 14.2 L57.5 12.8 L58.6 14.0 L59.7 12.7 L60.9 13.9 L62.0 14.0 L63.1 13.5 L64.2 12.9 L65.4 12.6 L66.5 13.7 L67.6 13.6 L68.7 14.0 L69.9 14.2 L71.0 14.0 L72.1 12.3 L73.3 14.1 L74.4 14.1 L75.5 14.1 L76.6 14.2 L77.8 14.1 L78.9 14.1 L80.0 14.2 L81.1 13.8 L82.3 14.0 L83.4 14.2 L84.5 14.0 L85.7 14.1 L86.8 13.4 L87.9 13.9 L89.0 14.1 L90.2 14.0 L91.3 13.9 L92.4 14.2 L93.5 14.0 L94.7 13.2 L95.8 14.0 L96.9 14.1 L98.0 13.9 L99.2 13.3 L100.3 13.2 L101.4 14.0 L102.6 14.1 L103.7 13.5 L104.8 12.4 L105.9 13.3 L107.1 14.1 L108.2 14.1 L109.3 13.6 L110.4 14.2 L111.6 12.6 L112.7 14.1 L112.7 15.0 L0 15.0 Z" fill="#f4ece6"/><path d="M0.0 14.1 L1.1 13.9 L2.3 12.7 L3.4 13.9 L4.5 12.7 L5.6 12.9 L6.8 14.1 L7.9 14.1 L9.0 13.9 L10.1 14.1 L11.3 14.0 L12.4 14.0 L13.5 14.1 L14.7 13.9 L15.8 14.2 L16.9 14.0 L18.0 13.9 L19.2 14.0 L20.3 14.0 L21.4 14.0 L22.5 14.0 L23.7 14.0 L24.8 14.0 L25.9 14.0 L27.0 13.4 L28.2 13.7 L29.3 14.0 L30.4 14.0 L31.6 13.9 L32.7 14.2 L33.8 14.1 L34.9 14.1 L36.1 14.1 L37.2 13.9 L38.3 14.2 L39.4 14.1 L40.6 14.1 L41.7 12.4 L42.8 14.2 L44.0 13.9 L45.1 14.1 L46.2 14.1 L47.3 14.1 L48.5 14.1 L49.6 13.5 L50.7 13.9 L51.8 13.0 L53.0 12.5 L54.1 14.0 L55.2 14.0 L56.4 14.2 L57.5 12.8 L58.6 14.0 L59.7 12.7 L60.9 13.9 L62.0 14.0 L63.1 13.5 L64.2 12.9 L65.4 12.6 L66.5 13.7 L67.6 13.6 L68.7 14.0 L69.9 14.2 L71.0 14.0 L72.1 12.3 L73.3 14.1 L74.4 14.1 L75.5 14.1 L76.6 14.2 L77.8 14.1 L78.9 14.1 L80.0 14.2 L81.1 13.8 L82.3 14.0 L83.4 14.2 L84.5 14.0 L85.7 14.1 L86.8 13.4 L87.9 13.9 L89.0 14.1 L90.2 14.0 L91.3 13.9 L92.4 14.2 L93.5 14.0 L94.7 13.2 L95.8 14.0 L96.9 14.1 L98.0 13.9 L99.2 13.3 L100.3 13.2 L101.4 14.0 L102.6 14.1 L103.7 13.5 L104.8 12.4 L105.9 13.3 L107.1 14.1 L108.2 14.1 L109.3 13.6 L110.4 14.2 L111.6 12.6 L112.7 14.1" fill="none" stroke="#dd3c36" stroke-width="1.1"/><rect x="0" y="14.6" width="112.7" height="1" fill="#bbb"/></svg><div class="r" style="left:7px;top:181px;width:337.7px;height:22.5px;background:#f9f9f9;"></div><div class="r" style="left:7px;top:180px;width:337.7px;height:1px;background:#ddd;"></div><div class="t" style="left:10.6px;top:184.5px;line-height:14px;font-size:12.0px;font-weight:bold;color:#3f6d9e;">nbhs-600-lan3-stulabs</div><svg class="r" style="left:202.2px;top:184.5px" width="112.7" height="16" viewBox="0 0 112.7 16"><path d="M0.0 13.2 L1.1 10.4 L2.3 13.7 L3.4 13.3 L4.5 10.3 L5.6 13.5 L6.8 13.3 L7.9 13.6 L9.0 13.6 L10.1 12.0 L11.3 12.5 L12.4 13.6 L13.5 13.7 L14.7 13.6 L15.8 11.1 L16.9 13.4 L18.0 13.4 L19.2 13.6 L20.3 13.0 L21.4 12.6 L22.5 13.6 L23.7 12.8 L24.8 10.8 L25.9 13.3 L27.0 13.4 L28.2 13.5 L29.3 13.6 L30.4 13.5 L31.6 13.2 L32.7 13.6 L33.8 13.3 L34.9 13.7 L36.1 11.8 L37.2 13.4 L38.3 13.4 L39.4 13.6 L40.6 13.3 L41.7 12.9 L42.8 10.9 L44.0 13.7 L45.1 13.5 L46.2 13.6 L47.3 12.5 L48.5 13.5 L49.6 13.6 L50.7 13.6 L51.8 13.4 L53.0 13.1 L54.1 13.7 L55.2 11.4 L56.4 13.3 L57.5 13.5 L58.6 13.3 L59.7 13.4 L60.9 13.7 L62.0 11.7 L63.1 13.4 L64.2 13.7 L65.4 13.0 L66.5 13.6 L67.6 13.4 L68.7 13.4 L69.9 13.5 L71.0 10.7 L72.1 10.6 L73.3 13.5 L74.4 13.6 L75.5 13.6 L76.6 13.2 L77.8 13.5 L78.9 13.4 L80.0 12.4 L81.1 11.5 L82.3 13.4 L83.4 13.5 L84.5 11.6 L85.7 11.6 L86.8 13.5 L87.9 13.7 L89.0 13.6 L90.2 13.3 L91.3 10.7 L92.4 13.4 L93.5 13.7 L94.7 11.2 L95.8 13.7 L96.9 13.2 L98.0 12.3 L99.2 13.5 L100.3 11.7 L101.4 13.3 L102.6 11.9 L103.7 10.4 L104.8 13.2 L105.9 13.1 L107.1 13.5 L108.2 13.4 L109.3 13.3 L110.4 13.6 L111.6 13.4 L112.7 13.4 L112.7 15.0 L0 15.0 Z" fill="#f4ece6"/><path d="M0.0 13.2 L1.1 10.4 L2.3 13.7 L3.4 13.3 L4.5 10.3 L5.6 13.5 L6.8 13.3 L7.9 13.6 L9.0 13.6 L10.1 12.0 L11.3 12.5 L12.4 13.6 L13.5 13.7 L14.7 13.6 L15.8 11.1 L16.9 13.4 L18.0 13.4 L19.2 13.6 L20.3 13.0 L21.4 12.6 L22.5 13.6 L23.7 12.8 L24.8 10.8 L25.9 13.3 L27.0 13.4 L28.2 13.5 L29.3 13.6 L30.4 13.5 L31.6 13.2 L32.7 13.6 L33.8 13.3 L34.9 13.7 L36.1 11.8 L37.2 13.4 L38.3 13.4 L39.4 13.6 L40.6 13.3 L41.7 12.9 L42.8 10.9 L44.0 13.7 L45.1 13.5 L46.2 13.6 L47.3 12.5 L48.5 13.5 L49.6 13.6 L50.7 13.6 L51.8 13.4 L53.0 13.1 L54.1 13.7 L55.2 11.4 L56.4 13.3 L57.5 13.5 L58.6 13.3 L59.7 13.4 L60.9 13.7 L62.0 11.7 L63.1 13.4 L64.2 13.7 L65.4 13.0 L66.5 13.6 L67.6 13.4 L68.7 13.4 L69.9 13.5 L71.0 10.7 L72.1 10.6 L73.3 13.5 L74.4 13.6 L75.5 13.6 L76.6 13.2 L77.8 13.5 L78.9 13.4 L80.0 12.4 L81.1 11.5 L82.3 13.4 L83.4 13.5 L84.5 11.6 L85.7 11.6 L86.8 13.5 L87.9 13.7 L89.0 13.6 L90.2 13.3 L91.3 10.7 L92.4 13.4 L93.5 13.7 L94.7 11.2 L95.8 13.7 L96.9 13.2 L98.0 12.3 L99.2 13.5 L100.3 11.7 L101.4 13.3 L102.6 11.9 L103.7 10.4 L104.8 13.2 L105.9 13.1 L107.1 13.5 L108.2 13.4 L109.3 13.3 L110.4 13.6 L111.6 13.4 L112.7 13.4" fill="none" stroke="#dd3c36" stroke-width="1.1"/><rect x="0" y="14.6" width="112.7" height="1" fill="#bbb"/></svg><div class="r" style="left:7px;top:203px;width:337.7px;height:1px;background:#ddd;"></div><div class="t" style="left:10.6px;top:207.5px;line-height:14px;font-size:12.0px;font-weight:bold;color:#3f6d9e;">nbhs-mdf-lan4</div><svg class="r" style="left:202.2px;top:207.5px" width="112.7" height="16" viewBox="0 0 112.7 16"><path d="M0.0 11.7 L1.1 13.4 L2.3 13.5 L3.4 10.2 L4.5 13.6 L5.6 13.3 L6.8 13.6 L7.9 13.0 L9.0 13.2 L10.1 13.6 L11.3 13.7 L12.4 12.0 L13.5 12.8 L14.7 12.2 L15.8 13.6 L16.9 13.5 L18.0 12.7 L19.2 13.3 L20.3 13.2 L21.4 13.5 L22.5 11.7 L23.7 13.3 L24.8 13.3 L25.9 13.3 L27.0 13.3 L28.2 13.3 L29.3 13.4 L30.4 12.4 L31.6 13.4 L32.7 13.5 L33.8 13.3 L34.9 13.2 L36.1 12.3 L37.2 13.4 L38.3 13.6 L39.4 13.2 L40.6 13.2 L41.7 13.2 L42.8 13.2 L44.0 13.2 L45.1 13.5 L46.2 13.3 L47.3 13.3 L48.5 13.7 L49.6 13.5 L50.7 13.7 L51.8 13.5 L53.0 13.6 L54.1 10.6 L55.2 13.4 L56.4 13.5 L57.5 13.6 L58.6 10.3 L59.7 13.2 L60.9 11.5 L62.0 11.2 L63.1 11.6 L64.2 10.3 L65.4 13.5 L66.5 13.3 L67.6 10.7 L68.7 13.6 L69.9 13.5 L71.0 12.1 L72.1 10.8 L73.3 13.6 L74.4 13.7 L75.5 13.4 L76.6 13.2 L77.8 13.5 L78.9 13.4 L80.0 13.5 L81.1 13.6 L82.3 13.6 L83.4 13.4 L84.5 13.7 L85.7 13.6 L86.8 13.3 L87.9 13.2 L89.0 13.6 L90.2 13.5 L91.3 13.3 L92.4 13.5 L93.5 12.9 L94.7 13.5 L95.8 13.5 L96.9 12.6 L98.0 11.9 L99.2 13.7 L100.3 13.2 L101.4 13.4 L102.6 13.5 L103.7 12.6 L104.8 13.6 L105.9 10.2 L107.1 13.7 L108.2 13.6 L109.3 11.6 L110.4 12.1 L111.6 11.9 L112.7 12.6 L112.7 15.0 L0 15.0 Z" fill="#f4ece6"/><path d="M0.0 11.7 L1.1 13.4 L2.3 13.5 L3.4 10.2 L4.5 13.6 L5.6 13.3 L6.8 13.6 L7.9 13.0 L9.0 13.2 L10.1 13.6 L11.3 13.7 L12.4 12.0 L13.5 12.8 L14.7 12.2 L15.8 13.6 L16.9 13.5 L18.0 12.7 L19.2 13.3 L20.3 13.2 L21.4 13.5 L22.5 11.7 L23.7 13.3 L24.8 13.3 L25.9 13.3 L27.0 13.3 L28.2 13.3 L29.3 13.4 L30.4 12.4 L31.6 13.4 L32.7 13.5 L33.8 13.3 L34.9 13.2 L36.1 12.3 L37.2 13.4 L38.3 13.6 L39.4 13.2 L40.6 13.2 L41.7 13.2 L42.8 13.2 L44.0 13.2 L45.1 13.5 L46.2 13.3 L47.3 13.3 L48.5 13.7 L49.6 13.5 L50.7 13.7 L51.8 13.5 L53.0 13.6 L54.1 10.6 L55.2 13.4 L56.4 13.5 L57.5 13.6 L58.6 10.3 L59.7 13.2 L60.9 11.5 L62.0 11.2 L63.1 11.6 L64.2 10.3 L65.4 13.5 L66.5 13.3 L67.6 10.7 L68.7 13.6 L69.9 13.5 L71.0 12.1 L72.1 10.8 L73.3 13.6 L74.4 13.7 L75.5 13.4 L76.6 13.2 L77.8 13.5 L78.9 13.4 L80.0 13.5 L81.1 13.6 L82.3 13.6 L83.4 13.4 L84.5 13.7 L85.7 13.6 L86.8 13.3 L87.9 13.2 L89.0 13.6 L90.2 13.5 L91.3 13.3 L92.4 13.5 L93.5 12.9 L94.7 13.5 L95.8 13.5 L96.9 12.6 L98.0 11.9 L99.2 13.7 L100.3 13.2 L101.4 13.4 L102.6 13.5 L103.7 12.6 L104.8 13.6 L105.9 10.2 L107.1 13.7 L108.2 13.6 L109.3 11.6 L110.4 12.1 L111.6 11.9 L112.7 12.6" fill="none" stroke="#dd3c36" stroke-width="1.1"/><rect x="0" y="14.6" width="112.7" height="1" fill="#bbb"/></svg></div><div class="r" style="left:371px;top:259px;width:15px;height:205px;background:#f1f1f1;"></div><div class="r" style="left:373px;top:276px;width:11px;height:124px;background:#c1c1c1;"></div><div class="r" style="left:374.5px;top:265px;width:0;height:0;border-left:4px solid transparent;border-right:4px solid transparent;border-bottom:4px solid #a3a3a3"></div><div class="r" style="left:374.5px;top:452px;width:0;height:0;border-left:4px solid transparent;border-right:4px solid transparent;border-top:4px solid #505050"></div><div class="r" style="left:390px;top:259px;width:262px;height:205px;overflow:hidden;"><div class="t" style="left:7.8px;top:5.8px;line-height:18px;font-size:15.4px;font-weight:normal;color:#333;">Top 10 devices (last 10 minutes)</div><div class="t" style="left:10.8px;top:25.5px;line-height:14px;font-size:11.6px;font-weight:bold;color:#333;">Device</div><div class="t" style="left:129.1px;top:25.5px;line-height:14px;font-size:11.6px;font-weight:bold;color:#333;">Memory usage</div><div class="r" style="left:7px;top:42px;width:244px;height:1px;background:#ddd;"></div><div class="r" style="left:7px;top:43px;width:244px;height:22.5px;background:#f9f9f9;"></div><div class="t" style="left:10.8px;top:46.5px;line-height:14px;font-size:12.0px;font-weight:bold;color:#3f6d9e;">nb-fog</div><svg class="r" style="left:128.1px;top:45.5px" width="111.7" height="17" viewBox="0 0 111.7 17"><rect x="0" y="1" width="111.7" height="15" fill="#f2eee9"/><path d="M0 1.1 H111.7" stroke="#e06a66" stroke-width="1"/><path d="M0 5.8 H111.7" stroke="#4fb54f" stroke-width="1.1"/><path d="M0 15.8 H111.7" stroke="#9fb4d4" stroke-width="1"/></svg><div class="r" style="left:7px;top:65px;width:244px;height:1px;background:#ddd;"></div><div class="t" style="left:10.8px;top:69.5px;line-height:14px;font-size:12.0px;font-weight:bold;color:#3f6d9e;">iboss-reporter</div><svg class="r" style="left:128.1px;top:68.5px" width="111.7" height="17" viewBox="0 0 111.7 17"><rect x="0" y="1" width="111.7" height="15" fill="#f2eee9"/><path d="M0 1.1 H111.7" stroke="#e06a66" stroke-width="1"/><path d="M0 8.9 H111.7" stroke="#4fb54f" stroke-width="1.1"/><path d="M0 15.8 H111.7" stroke="#9fb4d4" stroke-width="1"/></svg><div class="r" style="left:7px;top:89px;width:244px;height:22.5px;background:#f9f9f9;"></div><div class="r" style="left:7px;top:88px;width:244px;height:1px;background:#ddd;"></div><div class="t" style="left:10.8px;top:92.5px;line-height:14px;font-size:12.0px;font-weight:bold;color:#3f6d9e;">nbhs-unifi-nvr</div><svg class="r" style="left:128.1px;top:91.5px" width="111.7" height="17" viewBox="0 0 111.7 17"><rect x="0" y="1" width="111.7" height="15" fill="#f2eee9"/><path d="M0 1.1 H111.7" stroke="#e06a66" stroke-width="1"/><path d="M0 8.6 H111.7" stroke="#4fb54f" stroke-width="1.1"/><path d="M0 15.8 H111.7" stroke="#9fb4d4" stroke-width="1"/></svg><div class="r" style="left:7px;top:111px;width:244px;height:1px;background:#ddd;"></div><div class="t" style="left:10.8px;top:115.5px;line-height:14px;font-size:12.0px;font-weight:bold;color:#3f6d9e;">ms-lab-cache.local</div><svg class="r" style="left:128.1px;top:114.5px" width="111.7" height="17" viewBox="0 0 111.7 17"><path d="M0.0 4.1 L2.8 2.9 L5.6 3.2 L8.4 3.9 L11.2 3.0 L14.0 3.2 L16.8 2.9 L19.5 3.2 L22.3 3.0 L25.1 3.0 L27.9 3.6 L30.7 4.0 L33.5 2.8 L36.3 4.0 L39.1 3.3 L41.9 2.6 L44.7 3.6 L47.5 3.8 L50.3 3.6 L53.1 3.9 L55.9 3.0 L58.6 3.7 L61.4 4.1 L64.2 3.2 L67.0 3.8 L69.8 3.9 L72.6 4.2 L75.4 2.9 L78.2 3.6 L81.0 3.2 L83.8 3.4 L86.6 2.8 L89.4 4.1 L92.2 3.2 L94.9 2.9 L97.7 3.7 L100.5 3.5 L103.3 3.7 L106.1 3.7 L108.9 2.7 L111.7 3.8 L111.7 16 L0 16 Z" fill="#f3efea"/><path d="M0.0 4.1 L2.8 2.9 L5.6 3.2 L8.4 3.9 L11.2 3.0 L14.0 3.2 L16.8 2.9 L19.5 3.2 L22.3 3.0 L25.1 3.0 L27.9 3.6 L30.7 4.0 L33.5 2.8 L36.3 4.0 L39.1 3.3 L41.9 2.6 L44.7 3.6 L47.5 3.8 L50.3 3.6 L53.1 3.9 L55.9 3.0 L58.6 3.7 L61.4 4.1 L64.2 3.2 L67.0 3.8 L69.8 3.9 L72.6 4.2 L75.4 2.9 L78.2 3.6 L81.0 3.2 L83.8 3.4 L86.6 2.8 L89.4 4.1 L92.2 3.2 L94.9 2.9 L97.7 3.7 L100.5 3.5 L103.3 3.7 L106.1 3.7 L108.9 2.7 L111.7 3.8" fill="none" stroke="#d9534f" stroke-width="1.2"/><path d="M0 11.2 H111.7" stroke="#8fd08f" stroke-width="1.3"/><path d="M0 15.8 H111.7" stroke="#bbb" stroke-width="0.8"/></svg><div class="r" style="left:7px;top:135px;width:244px;height:22.5px;background:#f9f9f9;"></div><div class="r" style="left:7px;top:134px;width:244px;height:1px;background:#ddd;"></div><div class="t" style="left:10.8px;top:138.5px;line-height:14px;font-size:12.0px;font-weight:bold;color:#3f6d9e;">nb-awdb</div><svg class="r" style="left:128.1px;top:137.5px" width="111.7" height="17" viewBox="0 0 111.7 17"><rect x="0" y="4" width="111.7" height="12" fill="#f1eeea"/><path d="M0 4.3 H111.7" stroke="#4fb54f" stroke-width="1.3"/><path d="M0 10.4 H111.7" stroke="#dd4f4b" stroke-width="1.3"/><path d="M0 15.8 H111.7" stroke="#aaa" stroke-width="0.9"/></svg><div class="r" style="left:7px;top:157px;width:244px;height:1px;background:#ddd;"></div><div class="t" style="left:10.8px;top:161.5px;line-height:14px;font-size:12.0px;font-weight:bold;color:#3f6d9e;">elem-staff-cache</div><svg class="r" style="left:128.1px;top:160.5px" width="111.7" height="17" viewBox="0 0 111.7 17"><path d="M0.0 6.8 L1.4 6.9 L2.8 6.8 L4.2 6.8 L5.6 7.0 L7.0 6.7 L8.4 7.0 L9.8 6.8 L11.2 6.6 L12.6 6.9 L14.0 6.7 L15.4 7.0 L16.8 6.9 L18.2 6.7 L19.5 7.0 L20.9 6.7 L22.3 8.6 L23.7 8.2 L25.1 8.3 L26.5 8.5 L27.9 8.3 L29.3 8.3 L30.7 8.2 L32.1 8.5 L33.5 8.6 L34.9 8.3 L36.3 8.5 L37.7 8.4 L39.1 8.5 L40.5 8.0 L41.9 7.8 L43.3 7.7 L44.7 7.8 L46.1 7.9 L47.5 8.0 L48.9 8.0 L50.3 7.7 L51.7 7.6 L53.1 8.0 L54.5 7.7 L55.9 6.9 L57.2 6.6 L58.6 6.8 L60.0 6.9 L61.4 7.0 L62.8 6.7 L64.2 6.8 L65.6 7.0 L67.0 6.8 L68.4 6.6 L69.8 6.7 L71.2 6.7 L72.6 6.9 L74.0 6.9 L75.4 4.8 L76.8 5.0 L78.2 6.3 L79.6 6.4 L81.0 6.3 L82.4 6.2 L83.8 6.2 L85.2 6.4 L86.6 6.2 L88.0 6.1 L89.4 6.1 L90.8 6.1 L92.2 6.2 L93.5 6.1 L94.9 6.1 L96.3 6.4 L97.7 6.0 L99.1 6.0 L100.5 6.1 L101.9 6.0 L103.3 6.4 L104.7 6.4 L106.1 6.4 L107.5 6.0 L108.9 6.3 L110.3 6.3 L111.7 6.0 L111.7 16 L0 16 Z" fill="#f5f1ed"/><path d="M0.0 6.8 L1.4 6.9 L2.8 6.8 L4.2 6.8 L5.6 7.0 L7.0 6.7 L8.4 7.0 L9.8 6.8 L11.2 6.6 L12.6 6.9 L14.0 6.7 L15.4 7.0 L16.8 6.9 L18.2 6.7 L19.5 7.0 L20.9 6.7 L22.3 8.6 L23.7 8.2 L25.1 8.3 L26.5 8.5 L27.9 8.3 L29.3 8.3 L30.7 8.2 L32.1 8.5 L33.5 8.6 L34.9 8.3 L36.3 8.5 L37.7 8.4 L39.1 8.5 L40.5 8.0 L41.9 7.8 L43.3 7.7 L44.7 7.8 L46.1 7.9 L47.5 8.0 L48.9 8.0 L50.3 7.7 L51.7 7.6 L53.1 8.0 L54.5 7.7 L55.9 6.9 L57.2 6.6 L58.6 6.8 L60.0 6.9 L61.4 7.0 L62.8 6.7 L64.2 6.8 L65.6 7.0 L67.0 6.8 L68.4 6.6 L69.8 6.7 L71.2 6.7 L72.6 6.9 L74.0 6.9 L75.4 4.8 L76.8 5.0 L78.2 6.3 L79.6 6.4 L81.0 6.3 L82.4 6.2 L83.8 6.2 L85.2 6.4 L86.6 6.2 L88.0 6.1 L89.4 6.1 L90.8 6.1 L92.2 6.2 L93.5 6.1 L94.9 6.1 L96.3 6.4 L97.7 6.0 L99.1 6.0 L100.5 6.1 L101.9 6.0 L103.3 6.4 L104.7 6.4 L106.1 6.4 L107.5 6.0 L108.9 6.3 L110.3 6.3 L111.7 6.0" fill="none" stroke="#d9534f" stroke-width="1.2"/><path d="M0 15.8 H111.7" stroke="#e4c8d8" stroke-width="0.8"/></svg><div class="r" style="left:7px;top:181px;width:244px;height:22.5px;background:#f9f9f9;"></div><div class="r" style="left:7px;top:180px;width:244px;height:1px;background:#ddd;"></div><div class="t" style="left:10.8px;top:184.5px;line-height:14px;font-size:12.0px;font-weight:bold;color:#3f6d9e;">hs-stu-cache</div><svg class="r" style="left:128.1px;top:183.5px" width="111.7" height="17" viewBox="0 0 111.7 17"><path d="M0.0 8.3 L1.4 8.4 L2.8 8.6 L4.2 8.7 L5.6 8.7 L7.0 8.7 L8.4 8.3 L9.8 8.4 L11.2 8.5 L12.6 8.6 L14.0 8.3 L15.4 8.6 L16.8 8.4 L18.2 8.6 L19.5 8.6 L20.9 8.4 L22.3 9.2 L23.7 9.3 L25.1 9.2 L26.5 9.1 L27.9 9.4 L29.3 9.1 L30.7 9.1 L32.1 9.0 L33.5 9.4 L34.9 9.3 L36.3 9.3 L37.7 9.2 L39.1 9.0 L40.5 9.0 L41.9 9.2 L43.3 9.4 L44.7 9.4 L46.1 9.0 L47.5 9.0 L48.9 9.0 L50.3 9.0 L51.7 9.3 L53.1 9.3 L54.5 9.4 L55.9 8.8 L57.2 8.1 L58.6 7.9 L60.0 7.4 L61.4 6.4 L62.8 5.8 L64.2 5.7 L65.6 5.8 L67.0 6.0 L68.4 6.0 L69.8 5.8 L71.2 5.7 L72.6 5.9 L74.0 6.1 L75.4 6.1 L76.8 5.7 L78.2 5.7 L79.6 5.7 L81.0 5.9 L82.4 5.9 L83.8 6.0 L85.2 5.8 L86.6 6.1 L88.0 6.0 L89.4 5.8 L90.8 6.1 L92.2 5.9 L93.5 5.7 L94.9 6.0 L96.3 6.0 L97.7 6.0 L99.1 5.9 L100.5 5.8 L101.9 6.0 L103.3 6.0 L104.7 5.7 L106.1 5.9 L107.5 5.9 L108.9 5.8 L110.3 6.0 L111.7 5.8 L111.7 15 L0 15 Z" fill="#f3efea"/><path d="M0.0 8.3 L1.4 8.4 L2.8 8.6 L4.2 8.7 L5.6 8.7 L7.0 8.7 L8.4 8.3 L9.8 8.4 L11.2 8.5 L12.6 8.6 L14.0 8.3 L15.4 8.6 L16.8 8.4 L18.2 8.6 L19.5 8.6 L20.9 8.4 L22.3 9.2 L23.7 9.3 L25.1 9.2 L26.5 9.1 L27.9 9.4 L29.3 9.1 L30.7 9.1 L32.1 9.0 L33.5 9.4 L34.9 9.3 L36.3 9.3 L37.7 9.2 L39.1 9.0 L40.5 9.0 L41.9 9.2 L43.3 9.4 L44.7 9.4 L46.1 9.0 L47.5 9.0 L48.9 9.0 L50.3 9.0 L51.7 9.3 L53.1 9.3 L54.5 9.4 L55.9 8.8 L57.2 8.1 L58.6 7.9 L60.0 7.4 L61.4 6.4 L62.8 5.8 L64.2 5.7 L65.6 5.8 L67.0 6.0 L68.4 6.0 L69.8 5.8 L71.2 5.7 L72.6 5.9 L74.0 6.1 L75.4 6.1 L76.8 5.7 L78.2 5.7 L79.6 5.7 L81.0 5.9 L82.4 5.9 L83.8 6.0 L85.2 5.8 L86.6 6.1 L88.0 6.0 L89.4 5.8 L90.8 6.1 L92.2 5.9 L93.5 5.7 L94.9 6.0 L96.3 6.0 L97.7 6.0 L99.1 5.9 L100.5 5.8 L101.9 6.0 L103.3 6.0 L104.7 5.7 L106.1 5.9 L107.5 5.9 L108.9 5.8 L110.3 6.0 L111.7 5.8" fill="none" stroke="#d9534f" stroke-width="1.2"/><path d="M0 15.2 H111.7" stroke="#5cb85c" stroke-width="1.2"/></svg><div class="r" style="left:7px;top:203px;width:244px;height:1px;background:#ddd;"></div><div class="t" style="left:10.8px;top:207.5px;line-height:14px;font-size:12.0px;font-weight:bold;color:#3f6d9e;">x</div><svg class="r" style="left:128.1px;top:206.5px" width="111.7" height="17" viewBox="0 0 111.7 17"><path d="M0.0 8.5 L1.4 8.6 L2.8 8.7 L4.2 8.4 L5.6 8.3 L7.0 8.6 L8.4 8.4 L9.8 8.6 L11.2 8.7 L12.6 8.3 L14.0 8.4 L15.4 8.3 L16.8 8.4 L18.2 8.7 L19.5 8.4 L20.9 8.4 L22.3 9.0 L23.7 9.0 L25.1 9.0 L26.5 9.0 L27.9 9.3 L29.3 9.3 L30.7 9.1 L32.1 9.3 L33.5 9.4 L34.9 9.1 L36.3 9.3 L37.7 9.0 L39.1 9.1 L40.5 9.1 L41.9 9.2 L43.3 9.3 L44.7 9.1 L46.1 9.1 L47.5 9.3 L48.9 9.1 L50.3 9.3 L51.7 9.3 L53.1 9.4 L54.5 9.1 L55.9 8.7 L57.2 8.4 L58.6 7.6 L60.0 7.2 L61.4 6.5 L62.8 6.3 L64.2 5.9 L65.6 5.8 L67.0 6.1 L68.4 5.7 L69.8 5.8 L71.2 6.0 L72.6 5.8 L74.0 6.1 L75.4 6.1 L76.8 5.9 L78.2 5.9 L79.6 6.1 L81.0 6.0 L82.4 6.0 L83.8 5.9 L85.2 6.1 L86.6 6.1 L88.0 5.7 L89.4 5.7 L90.8 5.7 L92.2 5.8 L93.5 5.8 L94.9 5.8 L96.3 5.8 L97.7 5.9 L99.1 6.0 L100.5 5.7 L101.9 5.7 L103.3 6.1 L104.7 6.1 L106.1 5.7 L107.5 5.8 L108.9 5.9 L110.3 5.9 L111.7 5.7 L111.7 15 L0 15 Z" fill="#f3efea"/><path d="M0.0 8.5 L1.4 8.6 L2.8 8.7 L4.2 8.4 L5.6 8.3 L7.0 8.6 L8.4 8.4 L9.8 8.6 L11.2 8.7 L12.6 8.3 L14.0 8.4 L15.4 8.3 L16.8 8.4 L18.2 8.7 L19.5 8.4 L20.9 8.4 L22.3 9.0 L23.7 9.0 L25.1 9.0 L26.5 9.0 L27.9 9.3 L29.3 9.3 L30.7 9.1 L32.1 9.3 L33.5 9.4 L34.9 9.1 L36.3 9.3 L37.7 9.0 L39.1 9.1 L40.5 9.1 L41.9 9.2 L43.3 9.3 L44.7 9.1 L46.1 9.1 L47.5 9.3 L48.9 9.1 L50.3 9.3 L51.7 9.3 L53.1 9.4 L54.5 9.1 L55.9 8.7 L57.2 8.4 L58.6 7.6 L60.0 7.2 L61.4 6.5 L62.8 6.3 L64.2 5.9 L65.6 5.8 L67.0 6.1 L68.4 5.7 L69.8 5.8 L71.2 6.0 L72.6 5.8 L74.0 6.1 L75.4 6.1 L76.8 5.9 L78.2 5.9 L79.6 6.1 L81.0 6.0 L82.4 6.0 L83.8 5.9 L85.2 6.1 L86.6 6.1 L88.0 5.7 L89.4 5.7 L90.8 5.7 L92.2 5.8 L93.5 5.8 L94.9 5.8 L96.3 5.8 L97.7 5.9 L99.1 6.0 L100.5 5.7 L101.9 5.7 L103.3 6.1 L104.7 6.1 L106.1 5.7 L107.5 5.8 L108.9 5.9 L110.3 5.9 L111.7 5.7" fill="none" stroke="#d9534f" stroke-width="1.2"/><path d="M0 15.2 H111.7" stroke="#5cb85c" stroke-width="1.2"/></svg></div><div class="r" style="left:652px;top:259px;width:15px;height:205px;background:#f1f1f1;"></div><div class="r" style="left:654px;top:276px;width:11px;height:124px;background:#c1c1c1;"></div><div class="r" style="left:655.5px;top:265px;width:0;height:0;border-left:4px solid transparent;border-right:4px solid transparent;border-bottom:4px solid #a3a3a3"></div><div class="r" style="left:655.5px;top:452px;width:0;height:0;border-left:4px solid transparent;border-right:4px solid transparent;border-top:4px solid #505050"></div><div class="r" style="left:672px;top:259px;width:450px;height:205px;overflow:hidden;"><div class="t" style="left:7px;top:5.8px;line-height:18px;font-size:15.4px;font-weight:normal;color:#333;">Top 10 interfaces polled within 10 minutes</div><div class="t" style="left:10.4px;top:25.5px;line-height:14px;font-size:11.6px;font-weight:bold;color:#333;">Device</div><div class="t" style="left:171.2px;top:25.5px;line-height:14px;font-size:11.6px;font-weight:bold;color:#333;">Interface</div><div class="t" style="left:275.1px;top:25.5px;line-height:14px;font-size:11.6px;font-weight:bold;color:#333;">Total traffic</div><div class="r" style="left:7px;top:42px;width:432px;height:1px;background:#ddd;"></div><div class="r" style="left:7px;top:43px;width:432px;height:22.5px;background:#f9f9f9;"></div><div class="t" style="left:10.4px;top:46.5px;line-height:14px;font-size:12.0px;font-weight:bold;color:#3f6d9e;">orms-core</div><div class="t" style="left:171.2px;top:46.5px;line-height:14px;font-size:11.5px;font-weight:normal;color:#3b3bb0;">D11</div><svg class="r" style="left:275.1px;top:44.5px" width="111.9" height="19" viewBox="0 0 111.9 19"><g transform="translate(0,-1)"><rect x="0" y="2" width="111.9" height="16" fill="#9a9acc"/><path d="M0 2.3 H111.9 M0 17.6 H111.9" stroke="#d9534f" stroke-width="1"/></g></svg><div class="r" style="left:7px;top:65px;width:432px;height:1px;background:#ddd;"></div><div class="t" style="left:10.4px;top:69.5px;line-height:14px;font-size:12.0px;font-weight:bold;color:#3f6d9e;">orms-core</div><div class="t" style="left:171.2px;top:69.5px;line-height:14px;font-size:11.5px;font-weight:normal;color:#3b3bb0;">D12</div><svg class="r" style="left:275.1px;top:67.5px" width="111.9" height="19" viewBox="0 0 111.9 19"><g transform="translate(0,-1)"><rect x="0" y="8.5" width="111.9" height="9.8" fill="#9a9acc"/><path d="M0 8.8 H111.9 M0 17.8 H111.9" stroke="#d9534f" stroke-width="1"/><path d="M27.5 8.5 L28.5 5.5 L30 8.5 Z" fill="#6cc26c"/></g></svg><div class="r" style="left:7px;top:89px;width:432px;height:22.5px;background:#f9f9f9;"></div><div class="r" style="left:7px;top:88px;width:432px;height:1px;background:#ddd;"></div><div class="t" style="left:10.4px;top:92.5px;line-height:14px;font-size:12.0px;font-weight:bold;color:#3f6d9e;">nbms-core</div><div class="t" style="left:171.2px;top:92.5px;line-height:14px;font-size:11.5px;font-weight:normal;color:#3b3bb0;">C11</div><svg class="r" style="left:275.1px;top:90.5px" width="111.9" height="19" viewBox="0 0 111.9 19"><g transform="translate(0,-1)"><rect x="0" y="3" width="111.9" height="4" fill="#8cc163"/><path d="M62 3 L66 7 L70 3 Z M88 3 L92 7 L96 3 Z" fill="#fff"/><rect x="0" y="7" width="111.9" height="11" fill="#9a9acc"/><path d="M0 2.8 H111.9" stroke="#e08080" stroke-width="0.8" stroke-dasharray="2 1"/><path d="M0 17.6 H111.9" stroke="#d9534f" stroke-width="0.8"/></g></svg><div class="r" style="left:7px;top:111px;width:432px;height:1px;background:#ddd;"></div><div class="t" style="left:10.4px;top:115.5px;line-height:14px;font-size:12.0px;font-weight:bold;color:#3f6d9e;">pfs1.nbisd.txed.net</div><div class="t" style="left:171.2px;top:115.5px;line-height:14px;font-size:11.5px;font-weight:normal;color:#3b3bb0;">igb1</div><svg class="r" style="left:275.1px;top:113.5px" width="111.9" height="19" viewBox="0 0 111.9 19"><path d="M0 4.5 H111.9" stroke="#e07a7a" stroke-width="1"/><path d="M55 13.6 L105 13.6 L100 15.2 L60 15.2 Z" fill="#9a9acc"/><path d="M0.0 13.6 L1.0 13.3 L2.0 13.5 L3.0 13.3 L4.0 13.3 L5.0 13.5 L6.0 13.4 L7.0 13.5 L8.0 13.5 L9.0 13.3 L10.0 13.3 L11.0 13.5 L12.0 13.4 L13.0 13.4 L14.0 13.4 L15.0 13.6 L16.0 13.5 L17.0 13.4 L18.0 13.3 L19.0 13.3 L20.0 13.4 L21.0 13.5 L22.0 13.3 L23.0 13.5 L24.0 13.5 L25.0 13.5 L26.0 13.4 L27.0 13.3 L28.0 13.4 L29.0 13.3 L30.0 13.4 L31.0 13.4 L32.0 13.5 L33.0 13.3 L34.0 13.3 L35.0 13.3 L36.0 13.3 L37.0 13.3 L38.0 13.3 L39.0 13.3 L40.0 13.3 L41.0 13.4 L42.0 13.6 L43.0 13.3 L44.0 13.5 L45.0 13.4 L46.0 13.3 L47.0 13.4 L48.0 13.5 L49.0 13.4 L50.0 13.3 L51.0 13.3 L52.0 13.3 L53.0 13.3 L54.0 12.8 L55.0 11.9 L56.0 11.1 L56.9 10.2 L57.9 9.3 L58.9 8.5 L59.9 7.6 L60.9 6.8 L61.9 5.9 L62.9 5.0 L63.9 5.1 L64.9 5.4 L65.9 5.6 L66.9 5.0 L67.9 5.7 L68.9 5.0 L69.9 5.2 L70.9 5.5 L71.9 5.6 L72.9 5.2 L73.9 5.6 L74.9 5.4 L75.9 5.6 L76.9 5.6 L77.9 5.5 L78.9 5.2 L79.9 5.7 L80.9 5.1 L81.9 5.3 L82.9 5.5 L83.9 5.2 L84.9 5.6 L85.9 5.5 L86.9 5.3 L87.9 5.1 L88.9 5.2 L89.9 5.7 L90.9 5.0 L91.9 5.6 L92.9 5.6 L93.9 5.3 L94.9 5.6 L95.9 5.4 L96.9 7.1 L97.9 8.6 L98.9 9.3 L99.9 9.7 L100.9 10.1 L101.9 10.6 L102.9 11.0 L103.9 11.4 L104.9 11.6 L105.9 11.8 L106.9 11.9 L107.9 12.1 L108.9 12.3 L109.9 12.5 L110.9 12.6 L111.9 12.6 L111.9 13.6 L0 13.6 Z" fill="#9dc46a"/><path d="M0 13.6 H111.9" stroke="#6f8fb0" stroke-width="0.9"/><path d="M0 15.9 H111.9" stroke="#d9534f" stroke-width="1.1"/></svg><div class="r" style="left:7px;top:135px;width:432px;height:22.5px;background:#f9f9f9;"></div><div class="r" style="left:7px;top:134px;width:432px;height:1px;background:#ddd;"></div><div class="t" style="left:10.4px;top:138.5px;line-height:14px;font-size:12.0px;font-weight:bold;color:#3f6d9e;">www-sw</div><div class="t" style="left:171.2px;top:138.5px;line-height:14px;font-size:11.5px;font-weight:normal;color:#3b3bb0;">1</div><svg class="r" style="left:275.1px;top:136.5px" width="111.9" height="19" viewBox="0 0 111.9 19"><path d="M0 2.9 H111.9" stroke="#d9534f" stroke-width="1"/><path d="M0.0 5.0 L1.0 5.1 L2.0 5.3 L3.0 5.2 L4.0 5.1 L5.0 5.2 L6.0 5.1 L7.0 5.2 L8.0 5.1 L9.0 5.3 L10.0 5.0 L11.0 5.1 L12.0 5.3 L13.0 5.0 L14.0 5.1 L15.0 5.1 L16.0 5.1 L17.0 5.2 L18.0 5.3 L19.0 5.3 L20.0 5.1 L21.0 5.3 L22.0 5.2 L23.0 5.0 L24.0 5.1 L25.0 5.1 L26.0 5.1 L27.0 5.3 L28.0 5.3 L29.0 5.0 L30.0 5.2 L31.0 5.1 L32.0 5.1 L33.0 5.3 L34.0 5.0 L35.0 5.3 L36.0 5.3 L37.0 5.0 L38.0 5.1 L39.0 5.3 L40.0 5.0 L41.0 5.1 L42.0 5.1 L43.0 5.3 L44.0 5.3 L45.0 5.3 L46.0 5.1 L47.0 5.0 L48.0 5.3 L49.0 5.1 L50.0 5.1 L51.0 5.0 L52.0 5.3 L53.0 5.2 L54.0 5.8 L55.0 6.7 L56.0 7.5 L56.9 8.4 L57.9 9.3 L58.9 10.1 L59.9 11.0 L60.9 11.8 L61.9 12.7 L62.9 13.6 L63.9 13.0 L64.9 12.9 L65.9 13.2 L66.9 12.9 L67.9 12.9 L68.9 13.2 L69.9 13.3 L70.9 13.3 L71.9 13.5 L72.9 12.9 L73.9 13.0 L74.9 13.0 L75.9 13.3 L76.9 13.4 L77.9 13.1 L78.9 13.3 L79.9 12.9 L80.9 13.0 L81.9 13.1 L82.9 13.0 L83.9 13.1 L84.9 13.1 L85.9 13.2 L86.9 13.5 L87.9 13.4 L88.9 13.5 L89.9 13.0 L90.9 13.5 L91.9 13.2 L92.9 13.5 L93.9 13.3 L94.9 13.4 L95.9 13.3 L96.9 11.5 L97.9 10.0 L98.9 9.3 L99.9 8.9 L100.9 8.5 L101.9 8.0 L102.9 7.6 L103.9 7.2 L104.9 7.0 L105.9 6.8 L106.9 6.7 L107.9 6.5 L108.9 6.3 L109.9 6.1 L110.9 6.0 L111.9 6.0 L111.9 5.0 L0 5.0 Z" fill="#9a9acc"/><path d="M0 5.0 H111.9" stroke="#6a8ab0" stroke-width="1"/><path d="M0 13.9 H111.9" stroke="#e07070" stroke-width="1"/></svg><div class="r" style="left:7px;top:157px;width:432px;height:1px;background:#ddd;"></div><div class="t" style="left:10.4px;top:161.5px;line-height:14px;font-size:12.0px;font-weight:bold;color:#3f6d9e;">www-sw</div><div class="t" style="left:171.2px;top:161.5px;line-height:14px;font-size:11.5px;font-weight:normal;color:#3b3bb0;">24</div><svg class="r" style="left:275.1px;top:159.5px" width="111.9" height="19" viewBox="0 0 111.9 19"><path d="M0 4.5 H111.9" stroke="#e07a7a" stroke-width="1"/><path d="M55 13.6 L105 13.6 L100 15.2 L60 15.2 Z" fill="#9a9acc"/><path d="M0.0 13.5 L1.0 13.4 L2.0 13.4 L3.0 13.5 L4.0 13.5 L5.0 13.3 L6.0 13.4 L7.0 13.5 L8.0 13.4 L9.0 13.4 L10.0 13.4 L11.0 13.3 L12.0 13.3 L13.0 13.4 L14.0 13.3 L15.0 13.4 L16.0 13.5 L17.0 13.3 L18.0 13.5 L19.0 13.5 L20.0 13.6 L21.0 13.4 L22.0 13.3 L23.0 13.5 L24.0 13.3 L25.0 13.3 L26.0 13.5 L27.0 13.4 L28.0 13.4 L29.0 13.4 L30.0 13.4 L31.0 13.6 L32.0 13.4 L33.0 13.5 L34.0 13.4 L35.0 13.4 L36.0 13.6 L37.0 13.4 L38.0 13.4 L39.0 13.5 L40.0 13.3 L41.0 13.6 L42.0 13.3 L43.0 13.6 L44.0 13.3 L45.0 13.4 L46.0 13.6 L47.0 13.5 L48.0 13.3 L49.0 13.4 L50.0 13.4 L51.0 13.4 L52.0 13.5 L53.0 13.4 L54.0 12.8 L55.0 11.9 L56.0 11.1 L56.9 10.2 L57.9 9.3 L58.9 8.5 L59.9 7.6 L60.9 6.8 L61.9 5.9 L62.9 5.0 L63.9 5.1 L64.9 5.5 L65.9 5.4 L66.9 5.0 L67.9 5.1 L68.9 5.5 L69.9 5.0 L70.9 5.7 L71.9 5.3 L72.9 5.1 L73.9 5.2 L74.9 5.3 L75.9 5.5 L76.9 5.0 L77.9 5.3 L78.9 5.1 L79.9 5.1 L80.9 5.2 L81.9 5.4 L82.9 5.2 L83.9 5.6 L84.9 5.4 L85.9 5.0 L86.9 5.6 L87.9 5.7 L88.9 5.1 L89.9 5.3 L90.9 5.5 L91.9 5.1 L92.9 5.2 L93.9 5.4 L94.9 5.4 L95.9 5.5 L96.9 7.1 L97.9 8.6 L98.9 9.3 L99.9 9.7 L100.9 10.1 L101.9 10.6 L102.9 11.0 L103.9 11.4 L104.9 11.6 L105.9 11.8 L106.9 11.9 L107.9 12.1 L108.9 12.3 L109.9 12.5 L110.9 12.6 L111.9 12.6 L111.9 13.6 L0 13.6 Z" fill="#9dc46a"/><path d="M0 13.6 H111.9" stroke="#6f8fb0" stroke-width="0.9"/><path d="M0 15.9 H111.9" stroke="#d9534f" stroke-width="1.1"/></svg><div class="r" style="left:7px;top:181px;width:432px;height:22.5px;background:#f9f9f9;"></div><div class="r" style="left:7px;top:180px;width:432px;height:1px;background:#ddd;"></div><div class="t" style="left:10.4px;top:184.5px;line-height:14px;font-size:12.0px;font-weight:bold;color:#3f6d9e;">pfs1.nbisd.txed.net</div><div class="t" style="left:171.2px;top:184.5px;line-height:14px;font-size:11.5px;font-weight:normal;color:#3b3bb0;">igb1_vlan201</div><svg class="r" style="left:275.1px;top:182.5px" width="111.9" height="19" viewBox="0 0 111.9 19"><path d="M0 4.5 H111.9" stroke="#e07a7a" stroke-width="1"/><path d="M55 13.6 L105 13.6 L100 15.2 L60 15.2 Z" fill="#9a9acc"/><path d="M0.0 13.5 L1.0 13.4 L2.0 13.5 L3.0 13.3 L4.0 13.5 L5.0 13.4 L6.0 13.5 L7.0 13.4 L8.0 13.3 L9.0 13.6 L10.0 13.3 L11.0 13.6 L12.0 13.3 L13.0 13.6 L14.0 13.3 L15.0 13.4 L16.0 13.4 L17.0 13.4 L18.0 13.3 L19.0 13.5 L20.0 13.3 L21.0 13.6 L22.0 13.5 L23.0 13.4 L24.0 13.4 L25.0 13.3 L26.0 13.3 L27.0 13.5 L28.0 13.5 L29.0 13.5 L30.0 13.5 L31.0 13.3 L32.0 13.3 L33.0 13.4 L34.0 13.4 L35.0 13.6 L36.0 13.3 L37.0 13.4 L38.0 13.5 L39.0 13.3 L40.0 13.4 L41.0 13.6 L42.0 13.4 L43.0 13.5 L44.0 13.6 L45.0 13.5 L46.0 13.4 L47.0 13.3 L48.0 13.5 L49.0 13.5 L50.0 13.4 L51.0 13.5 L52.0 13.3 L53.0 13.4 L54.0 12.8 L55.0 11.9 L56.0 11.1 L56.9 10.2 L57.9 9.3 L58.9 8.5 L59.9 7.6 L60.9 6.8 L61.9 5.9 L62.9 5.0 L63.9 5.2 L64.9 5.7 L65.9 5.3 L66.9 5.5 L67.9 5.6 L68.9 5.3 L69.9 5.1 L70.9 5.6 L71.9 5.2 L72.9 5.3 L73.9 5.3 L74.9 5.5 L75.9 5.3 L76.9 5.7 L77.9 5.5 L78.9 5.5 L79.9 5.2 L80.9 5.3 L81.9 5.1 L82.9 5.5 L83.9 5.0 L84.9 5.6 L85.9 5.4 L86.9 5.1 L87.9 5.5 L88.9 5.1 L89.9 5.5 L90.9 5.6 L91.9 5.3 L92.9 5.1 L93.9 5.2 L94.9 5.3 L95.9 5.1 L96.9 7.1 L97.9 8.6 L98.9 9.3 L99.9 9.7 L100.9 10.1 L101.9 10.6 L102.9 11.0 L103.9 11.4 L104.9 11.6 L105.9 11.8 L106.9 11.9 L107.9 12.1 L108.9 12.3 L109.9 12.5 L110.9 12.6 L111.9 12.6 L111.9 13.6 L0 13.6 Z" fill="#9dc46a"/><path d="M0 13.6 H111.9" stroke="#6f8fb0" stroke-width="0.9"/><path d="M0 15.9 H111.9" stroke="#d9534f" stroke-width="1.1"/></svg><div class="r" style="left:7px;top:203px;width:432px;height:1px;background:#ddd;"></div><div class="t" style="left:10.4px;top:207.5px;line-height:14px;font-size:12.0px;font-weight:bold;color:#3f6d9e;">x</div><div class="t" style="left:171.2px;top:207.5px;line-height:14px;font-size:11.5px;font-weight:normal;color:#3b3bb0;">x</div><svg class="r" style="left:275.1px;top:205.5px" width="111.9" height="19" viewBox="0 0 111.9 19"><path d="M0 4.5 H111.9" stroke="#e07a7a" stroke-width="1"/><path d="M55 13.6 L105 13.6 L100 15.2 L60 15.2 Z" fill="#9a9acc"/><path d="M0.0 13.4 L1.0 13.5 L2.0 13.4 L3.0 13.4 L4.0 13.5 L5.0 13.6 L6.0 13.5 L7.0 13.4 L8.0 13.5 L9.0 13.5 L10.0 13.5 L11.0 13.3 L12.0 13.3 L13.0 13.3 L14.0 13.3 L15.0 13.4 L16.0 13.3 L17.0 13.6 L18.0 13.5 L19.0 13.5 L20.0 13.5 L21.0 13.5 L22.0 13.4 L23.0 13.3 L24.0 13.5 L25.0 13.5 L26.0 13.3 L27.0 13.6 L28.0 13.6 L29.0 13.6 L30.0 13.3 L31.0 13.3 L32.0 13.4 L33.0 13.5 L34.0 13.3 L35.0 13.6 L36.0 13.3 L37.0 13.3 L38.0 13.3 L39.0 13.5 L40.0 13.5 L41.0 13.5 L42.0 13.3 L43.0 13.3 L44.0 13.5 L45.0 13.5 L46.0 13.6 L47.0 13.4 L48.0 13.5 L49.0 13.4 L50.0 13.4 L51.0 13.4 L52.0 13.3 L53.0 13.6 L54.0 12.8 L55.0 11.9 L56.0 11.1 L56.9 10.2 L57.9 9.3 L58.9 8.5 L59.9 7.6 L60.9 6.8 L61.9 5.9 L62.9 5.0 L63.9 5.6 L64.9 5.3 L65.9 5.7 L66.9 5.1 L67.9 5.6 L68.9 5.0 L69.9 5.2 L70.9 5.1 L71.9 5.6 L72.9 5.6 L73.9 5.0 L74.9 5.4 L75.9 5.0 L76.9 5.6 L77.9 5.3 L78.9 5.3 L79.9 5.2 L80.9 5.5 L81.9 5.4 L82.9 5.1 L83.9 5.0 L84.9 5.6 L85.9 5.4 L86.9 5.5 L87.9 5.5 L88.9 5.4 L89.9 5.2 L90.9 5.2 L91.9 5.5 L92.9 5.6 L93.9 5.2 L94.9 5.3 L95.9 5.1 L96.9 7.1 L97.9 8.6 L98.9 9.3 L99.9 9.7 L100.9 10.1 L101.9 10.6 L102.9 11.0 L103.9 11.4 L104.9 11.6 L105.9 11.8 L106.9 11.9 L107.9 12.1 L108.9 12.3 L109.9 12.5 L110.9 12.6 L111.9 12.6 L111.9 13.6 L0 13.6 Z" fill="#9dc46a"/><path d="M0 13.6 H111.9" stroke="#6f8fb0" stroke-width="0.9"/><path d="M0 15.9 H111.9" stroke="#d9534f" stroke-width="1.1"/></svg></div><div class="r" style="left:1122px;top:259px;width:15px;height:205px;background:#f1f1f1;"></div><div class="r" style="left:1124px;top:276px;width:11px;height:124px;background:#c1c1c1;"></div><div class="r" style="left:1125.5px;top:265px;width:0;height:0;border-left:4px solid transparent;border-right:4px solid transparent;border-bottom:4px solid #a3a3a3"></div><div class="r" style="left:1125.5px;top:452px;width:0;height:0;border-left:4px solid transparent;border-right:4px solid transparent;border-top:4px solid #505050"></div>
<div class="r" style="left:658.4px;top:504.4px;width:134.1px;height:24.6px;border:1px solid #ccc;border-radius:3px;background:#fff"></div><div class="r" style="left:658.4px;top:504.4px;width:30px;height:24.6px;border:1px solid #ccc;border-radius:3px 0 0 3px;background:#eee"></div><svg class="r" style="left:667.4px;top:511.2px" width="11" height="11" viewBox="0 0 11 11"><circle cx="4.6" cy="4.6" r="3.5" fill="none" stroke="#555" stroke-width="1.6"/><path d="M7.2 7.2 L10 10" stroke="#555" stroke-width="2" stroke-linecap="round"/></svg><div class="t" style="left:696.7px;top:509.7px;line-height:14px;font-size:11.1px;font-weight:normal;color:#999;">Search</div><div class="r" style="left:808.2px;top:505.4px;width:109.4px;height:24.1px;border:1px solid #ccc;border-radius:3px;background:#fff"></div><div class="r" style="left:837.8px;top:505.4px;width:1px;height:24.1px;background:#ccc;"></div><div class="r" style="left:878.7px;top:505.4px;width:1px;height:24.1px;background:#ccc;"></div><svg class="r" style="left:817px;top:511.45px" width="12" height="12" viewBox="0 0 12 12"><path d="M2.2 5 A3.9 3.9 0 0 1 9.3 3.6" fill="none" stroke="#333" stroke-width="1.5"/><path d="M9.8 7 A3.9 3.9 0 0 1 2.7 8.4" fill="none" stroke="#333" stroke-width="1.5"/><path d="M10.5 0.8 V5 H6.5 Z M1.5 11.2 V7 H5.5 Z" fill="#333"/></svg><div class="t" style="left:847.4px;top:510.45px;line-height:14px;font-size:11.8px;font-weight:normal;color:#333;">50</div><div class="r" style="left:864.3px;top:517.45px;width:0;height:0;border-left:3.5px solid transparent;border-right:3.5px solid transparent;border-top:3.5px solid #333"></div><svg class="r" style="left:887.7px;top:512.45px" width="13" height="10" viewBox="0 0 13 10"><g fill="#333"><rect x="0" y="0.5" width="2.4" height="2.2"/><rect x="3.4" y="0.5" width="9.6" height="2.2"/><rect x="0" y="3.9" width="2.4" height="2.2"/><rect x="3.4" y="3.9" width="9.6" height="2.2"/><rect x="0" y="7.3" width="2.4" height="2.2"/><rect x="3.4" y="7.3" width="9.6" height="2.2"/></g></svg><div class="r" style="left:902.7px;top:517.45px;width:0;height:0;border-left:3.5px solid transparent;border-right:3.5px solid transparent;border-top:3.5px solid #333"></div><div class="t" style="left:25.8px;top:535.1px;line-height:14px;font-size:11.6px;font-weight:bold;color:#333;">Status</div><div class="t" style="left:122.8px;top:535.1px;line-height:14px;font-size:11.6px;font-weight:bold;color:#333;">Rule</div><div class="t" style="left:242px;top:535.1px;line-height:14px;font-size:11.6px;font-weight:bold;color:#333;">Hostname</div><div class="t" style="left:377px;top:535.1px;line-height:14px;font-size:11.6px;font-weight:bold;color:#333;">Timestamp</div><div class="t" style="left:521.5px;top:535.1px;line-height:14px;font-size:11.6px;font-weight:bold;color:#333;">Severity</div><div class="t" style="left:638.7px;top:535.1px;line-height:14px;font-size:11.6px;font-weight:bold;color:#333;">Acknowledge</div><div class="t" style="left:805.8px;top:535.1px;line-height:14px;font-size:11.6px;font-weight:bold;color:#333;">Procedure</div><div class="r" style="left:21.8px;top:551px;width:917.2px;height:1px;background:#ddd;"></div><div class="t" style="left:437.7px;top:555.6px;line-height:14px;font-size:11.55px;font-weight:normal;color:#333;">No results found!</div><div class="r" style="left:45.5px;top:572.4px;width:128.5px;height:23.2px;border:1px solid #ddd;border-radius:3px"></div><div class="r" style="left:70px;top:572.4px;width:1px;height:23.2px;background:#ddd;"></div><div class="r" style="left:97px;top:572.4px;width:1px;height:23.2px;background:#ddd;"></div><div class="r" style="left:122.5px;top:572.4px;width:1px;height:23.2px;background:#ddd;"></div><div class="r" style="left:149px;top:572.4px;width:1px;height:23.2px;background:#ddd;"></div><div class="t" style="left:45.5px;top:572.4px;width:24.5px;text-align:center;line-height:23px;font-size:10.5px;color:#888">«</div><div class="t" style="left:70px;top:572.4px;width:27px;text-align:center;line-height:23px;font-size:10.5px;color:#888">&lt;</div><div class="t" style="left:97px;top:572.4px;width:25.5px;text-align:center;line-height:23px;font-size:10.5px;color:#888">1</div><div class="t" style="left:122.5px;top:572.4px;width:26.5px;text-align:center;line-height:23px;font-size:10.5px;color:#888">&gt;</div><div class="t" style="left:149px;top:572.4px;width:25px;text-align:center;line-height:23px;font-size:10.5px;color:#888">»</div><div class="t" style="left:781.6px;top:570.3px;line-height:14px;font-size:11.1px;font-weight:normal;color:#333;letter-spacing:0.24px">Showing 0 to 0 of 0 entries</div>
<div class="r" style="left:1579.4px;top:503px;width:134.4px;height:25.4px;border:1px solid #ccc;border-radius:3px;background:#fff"></div><div class="r" style="left:1579.4px;top:503px;width:30.1px;height:25.4px;border:1px solid #ccc;border-radius:3px 0 0 3px;background:#eee"></div><svg class="r" style="left:1588.45px;top:510.2px" width="11" height="11" viewBox="0 0 11 11"><circle cx="4.6" cy="4.6" r="3.5" fill="none" stroke="#555" stroke-width="1.6"/><path d="M7.2 7.2 L10 10" stroke="#555" stroke-width="2" stroke-linecap="round"/></svg><div class="t" style="left:1618.4px;top:508.7px;line-height:14px;font-size:11.1px;font-weight:normal;color:#999;">Search</div><div class="r" style="left:1729.5px;top:504px;width:109.5px;height:25.4px;border:1px solid #ccc;border-radius:3px;background:#fff"></div><div class="r" style="left:1758.3px;top:504px;width:1px;height:25.4px;background:#ccc;"></div><div class="r" style="left:1800.4px;top:504px;width:1px;height:25.4px;background:#ccc;"></div><svg class="r" style="left:1737.9px;top:510.7px" width="12" height="12" viewBox="0 0 12 12"><path d="M2.2 5 A3.9 3.9 0 0 1 9.3 3.6" fill="none" stroke="#333" stroke-width="1.5"/><path d="M9.8 7 A3.9 3.9 0 0 1 2.7 8.4" fill="none" stroke="#333" stroke-width="1.5"/><path d="M10.5 0.8 V5 H6.5 Z M1.5 11.2 V7 H5.5 Z" fill="#333"/></svg><div class="t" style="left:1767.9px;top:509.7px;line-height:14px;font-size:11.8px;font-weight:normal;color:#333;">50</div><div class="r" style="left:1784.8px;top:516.7px;width:0;height:0;border-left:3.5px solid transparent;border-right:3.5px solid transparent;border-top:3.5px solid #333"></div><svg class="r" style="left:1809.4px;top:511.7px" width="13" height="10" viewBox="0 0 13 10"><g fill="#333"><rect x="0" y="0.5" width="2.4" height="2.2"/><rect x="3.4" y="0.5" width="9.6" height="2.2"/><rect x="0" y="3.9" width="2.4" height="2.2"/><rect x="3.4" y="3.9" width="9.6" height="2.2"/><rect x="0" y="7.3" width="2.4" height="2.2"/><rect x="3.4" y="7.3" width="9.6" height="2.2"/></g></svg><div class="r" style="left:1824.4px;top:516.7px;width:0;height:0;border-left:3.5px solid transparent;border-right:3.5px solid transparent;border-top:3.5px solid #333"></div><div class="t" style="left:983.6px;top:534px;line-height:14px;font-size:11.6px;font-weight:bold;color:#333;">Datetime</div><div class="t" style="left:1073.8px;top:534px;line-height:14px;font-size:11.6px;font-weight:bold;color:#333;">Hostname</div><div class="t" style="left:1184.7px;top:534px;line-height:14px;font-size:11.6px;font-weight:bold;color:#333;">Type</div><div class="t" style="left:1239.7px;top:534px;line-height:14px;font-size:11.6px;font-weight:bold;color:#333;">Message</div><div class="t" style="left:1820.2px;top:534px;line-height:14px;font-size:11.6px;font-weight:bold;color:#333;">User</div><svg class="r" style="left:1058px;top:537px" width="9" height="6" viewBox="0 0 9 6"><path d="M0.8 0.8 L4.5 4.6 L8.2 0.8" fill="none" stroke="#333" stroke-width="1.8"/></svg><div class="r" style="left:961.3px;top:550px;width:900.5px;height:1px;background:#ddd;"></div><div class="r" style="left:961.3px;top:551.2px;width:900.5px;height:34.08px;background:#f9f9f9;"></div><svg class="r" style="left:963.7px;top:556.2px" width="10" height="11" viewBox="0 0 10 11"><path d="M0 0 H10 V11 L5 7.5 L0 11 Z" fill="#d9534f"/></svg><div class="t" style="left:983.4px;top:555.3px;line-height:14px;font-size:11.1px;font-weight:normal;color:#333;letter-spacing:0.45px">2017-11-08</div><div class="t" style="left:983.4px;top:569.1px;line-height:14px;font-size:11.1px;font-weight:normal;color:#333;letter-spacing:0.7px">19:32:59</div><div class="t" style="left:1072.9px;top:555.3px;line-height:14px;font-size:12.2px;font-weight:bold;color:#3f6d9e;">nbms-idf-704-</div><div class="t" style="left:1072.9px;top:569.3px;line-height:14px;font-size:12.2px;font-weight:bold;color:#3f6d9e;">wlan</div><div class="t" style="left:1183.7px;top:555.3px;line-height:14px;font-size:11.1px;font-weight:normal;color:#333;">discovery</div><div class="t" style="left:1238.7px;top:555.3px;line-height:14px;font-size:11.26px;font-weight:normal;color:#333;">CDP discovery of CN23D323XT (172.16.247.72) failed - Could not connect to CN23D323XT, please check the</div><div class="t" style="left:1238.7px;top:569.3px;line-height:14px;font-size:11.26px;font-weight:normal;color:#333;">snmp details and snmp reachability</div><div class="r" style="left:961.3px;top:585.28px;width:900.5px;height:1px;background:#ddd;"></div><svg class="r" style="left:963.7px;top:591.28px" width="10" height="11" viewBox="0 0 10 11"><path d="M0 0 H10 V11 L5 7.5 L0 11 Z" fill="#f7d131"/></svg><div class="t" style="left:983.4px;top:590.38px;line-height:14px;font-size:11.1px;font-weight:normal;color:#333;letter-spacing:0.45px">2017-11-08</div><div class="t" style="left:983.4px;top:604.18px;line-height:14px;font-size:11.1px;font-weight:normal;color:#333;letter-spacing:0.7px">19:31:58</div><div class="t" style="left:1072.9px;top:590.38px;line-height:14px;font-size:12.2px;font-weight:bold;color:#3f6d9e;">lse-cafe-lan-2</div><div class="t" style="left:1184.2px;top:590.38px;line-height:14px;font-size:12.4px;font-weight:bold;color:#3b3bb0;letter-spacing:0.4px">36</div><div class="t" style="left:1238.7px;top:590.38px;line-height:14px;font-size:11.26px;font-weight:normal;color:#333;letter-spacing:0.28px">ifHighSpeed: 10 -&gt; 1000</div><div class="r" style="left:961.3px;top:621.36px;width:900.5px;height:34.08px;background:#f9f9f9;"></div><div class="r" style="left:961.3px;top:620.36px;width:900.5px;height:1px;background:#ddd;"></div><svg class="r" style="left:963.7px;top:626.36px" width="10" height="11" viewBox="0 0 10 11"><path d="M0 0 H10 V11 L5 7.5 L0 11 Z" fill="#f7d131"/></svg><div class="t" style="left:983.4px;top:625.46px;line-height:14px;font-size:11.1px;font-weight:normal;color:#333;letter-spacing:0.45px">2017-11-08</div><div class="t" style="left:983.4px;top:639.26px;line-height:14px;font-size:11.1px;font-weight:normal;color:#333;letter-spacing:0.7px">19:31:58</div><div class="t" style="left:1072.9px;top:625.46px;line-height:14px;font-size:12.2px;font-weight:bold;color:#3f6d9e;">lse-cafe-lan-2</div><div class="t" style="left:1184.2px;top:625.46px;line-height:14px;font-size:12.4px;font-weight:bold;color:#3b3bb0;letter-spacing:0.4px">36</div><div class="t" style="left:1238.7px;top:625.46px;line-height:14px;font-size:11.26px;font-weight:normal;color:#333;letter-spacing:0.28px">ifSpeed: 10000000 -&gt; 1000000000</div><div class="r" style="left:961.3px;top:655.44px;width:900.5px;height:1px;background:#ddd;"></div><svg class="r" style="left:963.7px;top:661.44px" width="10" height="11" viewBox="0 0 10 11"><path d="M0 0 H10 V11 L5 7.5 L0 11 Z" fill="#f7d131"/></svg><div class="t" style="left:983.4px;top:660.54px;line-height:14px;font-size:11.1px;font-weight:normal;color:#333;letter-spacing:0.45px">2017-11-08</div><div class="t" style="left:983.4px;top:674.34px;line-height:14px;font-size:11.1px;font-weight:normal;color:#333;letter-spacing:0.7px">19:31:30</div><div class="t" style="left:1072.9px;top:660.54px;line-height:14px;font-size:12.2px;font-weight:bold;color:#3f6d9e;">ss-idf-wlan</div><div class="t" style="left:1184.2px;top:660.54px;line-height:14px;font-size:12.4px;font-weight:bold;color:#3b3bb0;letter-spacing:0.4px">16</div><div class="t" style="left:1238.7px;top:660.54px;line-height:14px;font-size:11.26px;font-weight:normal;color:#333;letter-spacing:0.28px">ifOperStatus: down -&gt; up</div><div class="r" style="left:961.3px;top:691.52px;width:900.5px;height:34.08px;background:#f9f9f9;"></div><div class="r" style="left:961.3px;top:690.52px;width:900.5px;height:1px;background:#ddd;"></div><svg class="r" style="left:963.7px;top:696.52px" width="10" height="11" viewBox="0 0 10 11"><path d="M0 0 H10 V11 L5 7.5 L0 11 Z" fill="#f7d131"/></svg><div class="t" style="left:983.4px;top:695.62px;line-height:14px;font-size:11.1px;font-weight:normal;color:#333;letter-spacing:0.45px">2017-11-08</div><div class="t" style="left:983.4px;top:709.42px;line-height:14px;font-size:11.1px;font-weight:normal;color:#333;letter-spacing:0.7px">19:31:23</div><div class="t" style="left:1072.9px;top:695.62px;line-height:14px;font-size:12.2px;font-weight:bold;color:#3f6d9e;">ec-noc-lan-2-top</div><div class="t" style="left:1184.2px;top:695.62px;line-height:14px;font-size:12.4px;font-weight:bold;color:#3b3bb0;letter-spacing:0.4px">25</div><div class="t" style="left:1238.7px;top:695.62px;line-height:14px;font-size:11.26px;font-weight:normal;color:#333;letter-spacing:0.28px">ifHighSpeed: 10 -&gt; 1000</div><div class="r" style="left:961.3px;top:725.6px;width:900.5px;height:1px;background:#ddd;"></div><svg class="r" style="left:963.7px;top:731.6px" width="10" height="11" viewBox="0 0 10 11"><path d="M0 0 H10 V11 L5 7.5 L0 11 Z" fill="#f7d131"/></svg><div class="t" style="left:983.4px;top:730.7px;line-height:14px;font-size:11.1px;font-weight:normal;color:#333;letter-spacing:0.45px">2017-11-08</div><div class="t" style="left:983.4px;top:744.5px;line-height:14px;font-size:11.1px;font-weight:normal;color:#333;letter-spacing:0.7px">19:31:23</div><div class="t" style="left:1072.9px;top:730.7px;line-height:14px;font-size:12.2px;font-weight:bold;color:#3f6d9e;">ec-noc-lan-2-top</div><div class="t" style="left:1184.2px;top:730.7px;line-height:14px;font-size:12.4px;font-weight:bold;color:#3b3bb0;letter-spacing:0.4px">25</div><div class="t" style="left:1238.7px;top:730.7px;line-height:14px;font-size:11.26px;font-weight:normal;color:#333;letter-spacing:0.28px">ifSpeed: 10000000 -&gt; 1000000000</div><div class="r" style="left:961.3px;top:761.68px;width:900.5px;height:34.08px;background:#f9f9f9;"></div><div class="r" style="left:961.3px;top:760.68px;width:900.5px;height:1px;background:#ddd;"></div><svg class="r" style="left:963.7px;top:766.68px" width="10" height="11" viewBox="0 0 10 11"><path d="M0 0 H10 V11 L5 7.5 L0 11 Z" fill="#f7d131"/></svg><div class="t" style="left:983.4px;top:765.78px;line-height:14px;font-size:11.1px;font-weight:normal;color:#333;letter-spacing:0.45px">2017-11-08</div><div class="t" style="left:983.4px;top:779.58px;line-height:14px;font-size:11.1px;font-weight:normal;color:#333;letter-spacing:0.7px">19:31:18</div><div class="t" style="left:1072.9px;top:765.78px;line-height:14px;font-size:12.2px;font-weight:bold;color:#3f6d9e;">ngc-411-lan1-</div><div class="t" style="left:1072.9px;top:779.78px;line-height:14px;font-size:12.2px;font-weight:bold;color:#3f6d9e;">faculty</div><div class="t" style="left:1184.2px;top:765.78px;line-height:14px;font-size:12.4px;font-weight:bold;color:#3b3bb0;letter-spacing:0.4px">42</div><div class="t" style="left:1238.7px;top:765.78px;line-height:14px;font-size:11.26px;font-weight:normal;color:#333;letter-spacing:0.28px">ifHighSpeed: 1000 -&gt; 10</div><div class="r" style="left:961.3px;top:795.76px;width:900.5px;height:1px;background:#ddd;"></div><svg class="r" style="left:963.7px;top:801.76px" width="10" height="11" viewBox="0 0 10 11"><path d="M0 0 H10 V11 L5 7.5 L0 11 Z" fill="#f7d131"/></svg><div class="t" style="left:983.4px;top:800.86px;line-height:14px;font-size:11.1px;font-weight:normal;color:#333;letter-spacing:0.45px">2017-11-08</div><div class="t" style="left:983.4px;top:814.66px;line-height:14px;font-size:11.1px;font-weight:normal;color:#333;letter-spacing:0.7px">19:31:18</div><div class="t" style="left:1072.9px;top:800.86px;line-height:14px;font-size:12.2px;font-weight:bold;color:#3f6d9e;">ngc-411-lan1-</div><div class="t" style="left:1072.9px;top:814.86px;line-height:14px;font-size:12.2px;font-weight:bold;color:#3f6d9e;">faculty</div><div class="t" style="left:1184.2px;top:800.86px;line-height:14px;font-size:12.4px;font-weight:bold;color:#3b3bb0;letter-spacing:0.4px">42</div><div class="t" style="left:1238.7px;top:800.86px;line-height:14px;font-size:11.26px;font-weight:normal;color:#333;letter-spacing:0.28px">ifSpeed: 1000000000 -&gt; 10000000</div><div class="r" style="left:961.3px;top:831.84px;width:900.5px;height:34.08px;background:#f9f9f9;"></div><div class="r" style="left:961.3px;top:830.84px;width:900.5px;height:1px;background:#ddd;"></div><svg class="r" style="left:963.7px;top:836.84px" width="10" height="11" viewBox="0 0 10 11"><path d="M0 0 H10 V11 L5 7.5 L0 11 Z" fill="#f7d131"/></svg><div class="t" style="left:983.4px;top:835.94px;line-height:14px;font-size:11.1px;font-weight:normal;color:#333;letter-spacing:0.45px">2017-11-08</div><div class="t" style="left:983.4px;top:849.74px;line-height:14px;font-size:11.1px;font-weight:normal;color:#333;letter-spacing:0.7px">19:31:17</div><div class="t" style="left:1072.9px;top:835.94px;line-height:14px;font-size:12.2px;font-weight:bold;color:#3f6d9e;">kre-mdf-lan-2-</div><div class="t" style="left:1072.9px;top:849.94px;line-height:14px;font-size:12.2px;font-weight:bold;color:#3f6d9e;">bottom</div><div class="t" style="left:1184.2px;top:835.94px;line-height:14px;font-size:12.4px;font-weight:bold;color:#3b3bb0;letter-spacing:0.4px">19</div><div class="t" style="left:1238.7px;top:835.94px;line-height:14px;font-size:11.26px;font-weight:normal;color:#333;letter-spacing:0.28px">ifHighSpeed: 100 -&gt; 1000</div><div class="r" style="left:961.3px;top:865.92px;width:900.5px;height:1px;background:#ddd;"></div><svg class="r" style="left:963.7px;top:871.92px" width="10" height="11" viewBox="0 0 10 11"><path d="M0 0 H10 V11 L5 7.5 L0 11 Z" fill="#f7d131"/></svg><div class="t" style="left:983.4px;top:871.02px;line-height:14px;font-size:11.1px;font-weight:normal;color:#333;letter-spacing:0.45px">2017-11-08</div><div class="t" style="left:983.4px;top:884.82px;line-height:14px;font-size:11.1px;font-weight:normal;color:#333;letter-spacing:0.7px">19:31:17</div><div class="t" style="left:1072.9px;top:871.02px;line-height:14px;font-size:12.2px;font-weight:bold;color:#3f6d9e;">kre-mdf-lan-2-</div><div class="t" style="left:1072.9px;top:885.02px;line-height:14px;font-size:12.2px;font-weight:bold;color:#3f6d9e;">bottom</div><div class="t" style="left:1184.2px;top:871.02px;line-height:14px;font-size:12.4px;font-weight:bold;color:#3b3bb0;letter-spacing:0.4px">19</div><div class="t" style="left:1238.7px;top:871.02px;line-height:14px;font-size:11.26px;font-weight:normal;color:#333;letter-spacing:0.28px">ifSpeed: 100000000 -&gt; 1000000000</div><div class="r" style="left:961.3px;top:902px;width:900.5px;height:34.08px;background:#f9f9f9;"></div><div class="r" style="left:961.3px;top:901px;width:900.5px;height:1px;background:#ddd;"></div><svg class="r" style="left:963.7px;top:907px" width="10" height="11" viewBox="0 0 10 11"><path d="M0 0 H10 V11 L5 7.5 L0 11 Z" fill="#f7d131"/></svg><div class="t" style="left:983.4px;top:906.1px;line-height:14px;font-size:11.1px;font-weight:normal;color:#333;letter-spacing:0.45px">2017-11-08</div><div class="t" style="left:983.4px;top:919.9px;line-height:14px;font-size:11.1px;font-weight:normal;color:#333;letter-spacing:0.7px">19:31:17</div><div class="t" style="left:1072.9px;top:906.1px;line-height:14px;font-size:12.2px;font-weight:bold;color:#3f6d9e;">ngc-504-lan1-</div><div class="t" style="left:1072.9px;top:920.1px;line-height:14px;font-size:12.2px;font-weight:bold;color:#3f6d9e;">student</div><div class="t" style="left:1184.2px;top:906.1px;line-height:14px;font-size:12.4px;font-weight:bold;color:#d9534f;letter-spacing:0.4px">23</div><div class="t" style="left:1238.7px;top:906.1px;line-height:14px;font-size:11.26px;font-weight:normal;color:#333;letter-spacing:0.28px">ifHighSpeed: 100 -&gt; 1000</div><div class="r" style="left:1871px;top:495px;width:17px;height:432px;background:#f1f1f1;"></div><div class="r" style="left:1873px;top:512px;width:13px;height:136px;background:#c1c1c1;"></div><div class="r" style="left:1875.5px;top:501px;width:0;height:0;border-left:4px solid transparent;border-right:4px solid transparent;border-bottom:4px solid #a3a3a3"></div>
<div class="r" style="left:1903px;top:0px;width:14px;height:927px;background:#f1f1f1;"></div>
<div class="r" style="left:1904px;top:24px;width:13px;height:803px;background:#c1c1c1;"></div>
<div class="r" style="left:1906.5px;top:1px;width:0;height:0;border-left:4px solid transparent;border-right:4px solid transparent;border-bottom:4px solid #505050"></div>
<div class="r" style="left:0px;top:927px;width:1928px;height:13px;background:#fff;"></div>
<div class="r" style="left:1917px;top:0px;width:11px;height:940px;background:#fff;"></div>
</body></html>
